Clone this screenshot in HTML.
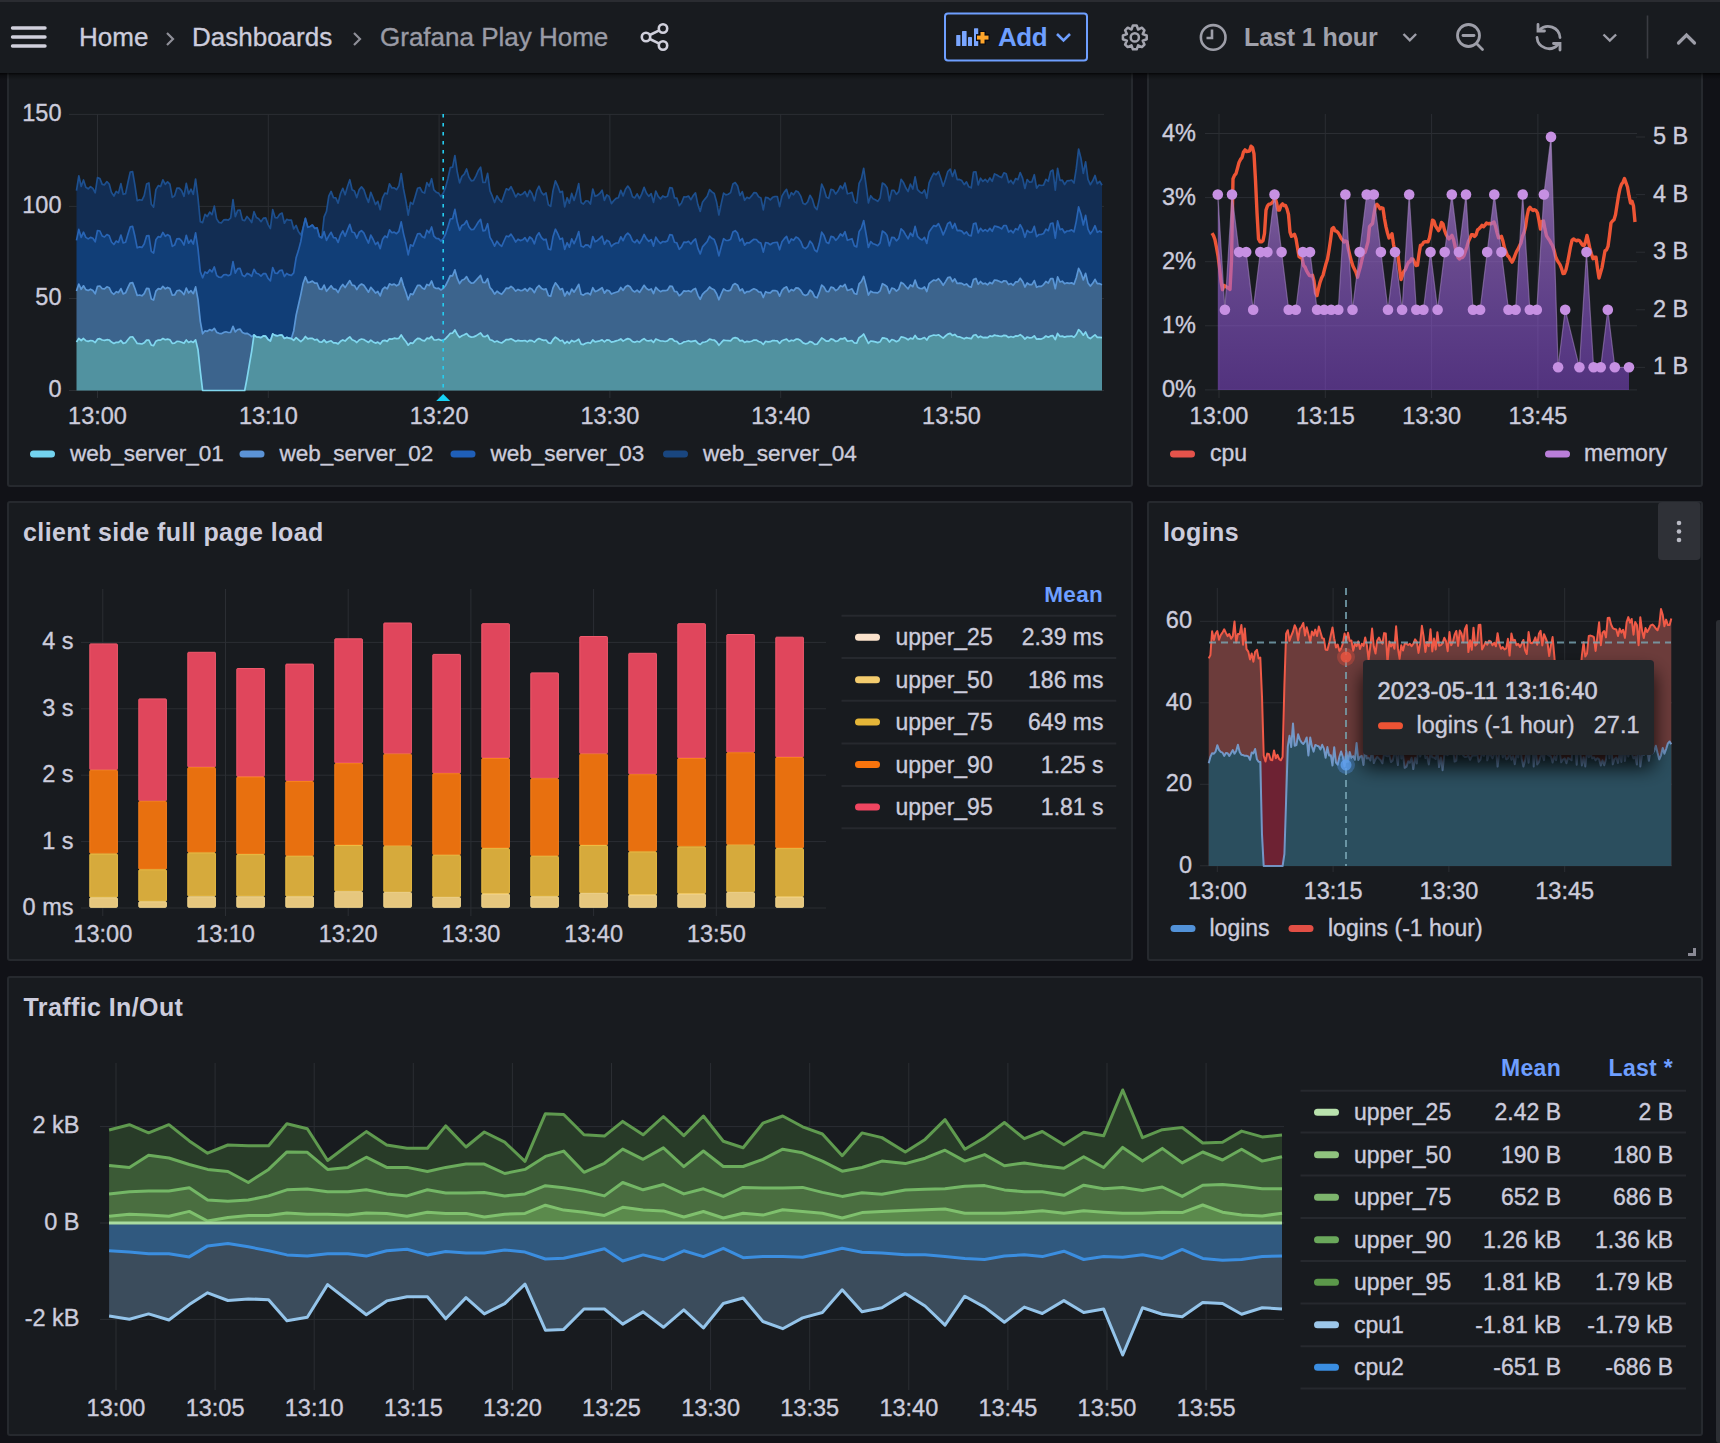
<!DOCTYPE html><html><head><meta charset="utf-8"><style>
html,body{margin:0;padding:0;background:#111217;width:1720px;height:1443px;overflow:hidden}
svg{position:absolute;left:0;top:0;font-family:"Liberation Sans", sans-serif}
</style></head><body>
<svg width="1720" height="1443" viewBox="0 0 1720 1443">
<defs>
<linearGradient id="memg" x1="0" y1="136" x2="0" y2="390" gradientUnits="userSpaceOnUse">
<stop offset="0" stop-color="#c99ceb" stop-opacity="0.75"/><stop offset="0.224" stop-color="#ab7ed7" stop-opacity="0.68"/><stop offset="0.449" stop-color="#a16bd8" stop-opacity="0.6"/><stop offset="0.685" stop-color="#9f62e9" stop-opacity="0.52"/><stop offset="1" stop-color="#9950f2" stop-opacity="0.45"/>
</linearGradient>
<linearGradient id="hsh" x1="0" y1="0" x2="0" y2="1"><stop offset="0" stop-color="#000" stop-opacity="0.75"/><stop offset="0.35" stop-color="#000" stop-opacity="0.3"/><stop offset="1" stop-color="#000" stop-opacity="0"/></linearGradient>
<filter id="shadow" x="-20%" y="-30%" width="140%" height="180%"><feGaussianBlur in="SourceAlpha" stdDeviation="10"/><feOffset dy="12"/><feComponentTransfer><feFuncA type="linear" slope="0.85"/></feComponentTransfer><feMerge><feMergeNode/><feMergeNode in="SourceGraphic"/></feMerge></filter>
</defs>
<rect x="0" y="0" width="1720" height="1443" fill="#111217"/>

<rect x="8" y="40" width="1124" height="446" rx="2" fill="#181b1f" stroke="#26292e" stroke-width="2"/>
<rect x="1148" y="40" width="554" height="446" rx="2" fill="#181b1f" stroke="#26292e" stroke-width="2"/>
<rect x="8" y="502" width="1124" height="458" rx="2" fill="#181b1f" stroke="#26292e" stroke-width="2"/>
<rect x="1148" y="502" width="554" height="458" rx="2" fill="#181b1f" stroke="#26292e" stroke-width="2"/>
<rect x="8" y="977" width="1694" height="458" rx="2" fill="#181b1f" stroke="#26292e" stroke-width="2"/>
<rect x="1716" y="620" width="6" height="823" rx="3" fill="#2c2e33"/>
<line x1="69" y1="114.4" x2="1104" y2="114.4" stroke="#2b2e33" stroke-width="1"/>
<text x="61.5" y="120.9" font-size="23.5" fill="#ccccdc" text-anchor="end" font-weight="normal"  stroke="#ccccdc" stroke-width="0.35">150</text>
<line x1="69" y1="206.4" x2="1104" y2="206.4" stroke="#2b2e33" stroke-width="1"/>
<text x="61.5" y="212.9" font-size="23.5" fill="#ccccdc" text-anchor="end" font-weight="normal"  stroke="#ccccdc" stroke-width="0.35">100</text>
<line x1="69" y1="298.5" x2="1104" y2="298.5" stroke="#2b2e33" stroke-width="1"/>
<text x="61.5" y="305" font-size="23.5" fill="#ccccdc" text-anchor="end" font-weight="normal"  stroke="#ccccdc" stroke-width="0.35">50</text>
<line x1="69" y1="390.5" x2="1104" y2="390.5" stroke="#2b2e33" stroke-width="1"/>
<text x="61.5" y="397" font-size="23.5" fill="#ccccdc" text-anchor="end" font-weight="normal"  stroke="#ccccdc" stroke-width="0.35">0</text>
<line x1="97.5" y1="114" x2="97.5" y2="398" stroke="#2b2e33" stroke-width="1"/>
<text x="97.5" y="423.5" font-size="23.5" fill="#ccccdc" text-anchor="middle" font-weight="normal"  stroke="#ccccdc" stroke-width="0.35">13:00</text>
<line x1="268.3" y1="114" x2="268.3" y2="398" stroke="#2b2e33" stroke-width="1"/>
<text x="268.3" y="423.5" font-size="23.5" fill="#ccccdc" text-anchor="middle" font-weight="normal"  stroke="#ccccdc" stroke-width="0.35">13:10</text>
<line x1="439.1" y1="114" x2="439.1" y2="398" stroke="#2b2e33" stroke-width="1"/>
<text x="439.1" y="423.5" font-size="23.5" fill="#ccccdc" text-anchor="middle" font-weight="normal"  stroke="#ccccdc" stroke-width="0.35">13:20</text>
<line x1="609.9" y1="114" x2="609.9" y2="398" stroke="#2b2e33" stroke-width="1"/>
<text x="609.9" y="423.5" font-size="23.5" fill="#ccccdc" text-anchor="middle" font-weight="normal"  stroke="#ccccdc" stroke-width="0.35">13:30</text>
<line x1="780.7" y1="114" x2="780.7" y2="398" stroke="#2b2e33" stroke-width="1"/>
<text x="780.7" y="423.5" font-size="23.5" fill="#ccccdc" text-anchor="middle" font-weight="normal"  stroke="#ccccdc" stroke-width="0.35">13:40</text>
<line x1="951.5" y1="114" x2="951.5" y2="398" stroke="#2b2e33" stroke-width="1"/>
<text x="951.5" y="423.5" font-size="23.5" fill="#ccccdc" text-anchor="middle" font-weight="normal"  stroke="#ccccdc" stroke-width="0.35">13:50</text>
<polygon points="76.5,190.6 78.8,175.8 81.2,186.5 83.5,180 85.8,187.2 88.2,188.8 90.5,186.7 92.9,188.4 95.2,192.8 97.5,177.6 99.9,178.5 102.2,184.4 104.5,184.8 106.9,181.6 109.2,184 111.5,192.6 113.9,196 116.2,191.4 118.5,193.1 120.9,183.6 123.2,194.3 125.6,193.6 127.9,182.5 130.2,172.1 132.6,171.7 134.9,185.2 137.2,200.6 139.6,199.7 141.9,200.3 144.2,195.7 146.6,184.1 148.9,182.9 151.3,204.3 153.6,207.2 155.9,189.6 158.3,185.6 160.6,186.5 162.9,179.9 165.3,184.4 167.6,181.8 169.9,184.2 172.3,197.4 174.6,195.8 176.9,188.2 179.3,188.1 181.6,190.6 184,196.3 186.3,183.4 188.6,193.8 191,189.2 193.3,194.3 195.6,179 198,198.1 200.3,221.6 202.6,222.6 205,214.4 207.3,216.5 209.7,212.1 212,214.6 214.3,206.1 216.7,219.1 219,222.4 221.3,223 223.7,219.9 226,219.6 228.3,220.1 230.7,217.8 233,199.7 235.3,216.6 237.7,210.4 240,210 242.4,219.9 244.7,220.7 247,216.5 249.4,219.2 251.7,222.5 254,211.7 256.4,217.5 258.7,218.8 261,221.7 263.4,218.1 265.7,217.9 268.1,224.6 270.4,228.5 272.7,209.7 275.1,217.6 277.4,217.9 279.7,214.2 282.1,213.1 284.4,223.2 286.7,219.4 289.1,220.2 291.4,220.2 293.7,229 296.1,225.4 298.4,231.6 300.8,234.9 303.1,228.1 305.4,218.4 307.8,227.3 310.1,226.5 312.4,225.1 314.8,228.4 317.1,227.9 319.4,236.5 321.8,237.9 324.1,216.9 326.5,211.4 328.8,196.2 331.1,191.4 333.5,197.7 335.8,197.9 338.1,203.1 340.5,193.5 342.8,188.3 345.1,194.8 347.5,186.6 349.8,179.7 352.1,189.7 354.5,191.1 356.8,197.6 359.2,189.6 361.5,186.9 363.8,189.6 366.2,196.8 368.5,202.3 370.8,192.3 373.2,198.3 375.5,204.5 377.8,201.3 380.2,209.7 382.5,198.1 384.9,193 387.2,193.9 389.5,183.8 391.9,188 394.2,187.8 396.5,189.7 398.9,185.9 401.2,173.5 403.5,188.9 405.9,201 408.2,215.2 410.5,202.3 412.9,204.3 415.2,196.6 417.6,188.2 419.9,187.5 422.2,191.9 424.6,193.1 426.9,182.6 429.2,186.3 431.6,178.7 433.9,189.8 436.2,192.2 438.6,193.1 440.9,196.6 443.3,193 445.6,187.4 447.9,178.5 450.3,167.6 452.6,167.1 454.9,155.5 457.3,172.3 459.6,182.9 461.9,176.4 464.3,174.1 466.6,169 468.9,177 471.3,180.8 473.6,180.4 476,175.8 478.3,170.5 480.6,167.2 483,182.5 485.3,182.3 487.6,173.4 490,190.9 492.3,196.2 494.6,202.5 497,195.9 499.3,199.7 501.7,202.1 504,195.3 506.3,188.8 508.7,190 511,186.7 513.3,191.3 515.7,196.9 518,193.5 520.3,195.1 522.7,193.9 525,191.6 527.3,196.6 529.7,190.3 532,193.4 534.4,200.8 536.7,190.6 539,186.2 541.4,192.3 543.7,194.8 546,192.8 548.4,204.8 550.7,206.4 553,190.6 555.4,180.9 557.7,185.8 560.1,192.4 562.4,191.4 564.7,206.8 567.1,197.7 569.4,203.2 571.7,193.4 574.1,200.5 576.4,193.1 578.7,183.6 581.1,202.5 583.4,204.1 585.7,200.9 588.1,201 590.4,204.1 592.8,189 595.1,196.2 597.4,195.4 599.8,193.4 602.1,190.2 604.4,200.3 606.8,194.9 609.1,196.4 611.4,203.6 613.8,200.6 616.1,198.4 618.4,197.7 620.8,190.3 623.1,195.9 625.5,189.2 627.8,186.1 630.1,189.3 632.5,196.7 634.8,197.9 637.1,193.8 639.5,198.7 641.8,193.9 644.1,187.4 646.5,193.2 648.8,196.3 651.2,193.7 653.5,202.4 655.8,191 658.2,196.4 660.5,198.9 662.8,196 665.2,197.3 667.5,196.3 669.8,187.7 672.2,188 674.5,197.8 676.8,198.1 679.2,205.7 681.5,203 683.9,196.9 686.2,197 688.5,196 690.9,199.7 693.2,195.6 695.5,192.8 697.9,204.8 700.2,211.5 702.5,202.3 704.9,199.1 707.2,196.3 709.6,189.6 711.9,191.9 714.2,193.5 716.6,202.1 718.9,215 721.2,203.8 723.6,193.1 725.9,194.9 728.2,194.2 730.6,192.6 732.9,183.9 735.2,182.6 737.6,186 739.9,195.5 742.3,191.7 744.6,200.3 746.9,197.3 749.3,198.5 751.6,195.9 753.9,192.7 756.3,192.9 758.6,196.7 760.9,197.9 763.3,209.8 765.6,197.4 768,197.9 770.3,199.8 772.6,197.3 775,196.5 777.3,196.5 779.6,206.6 782,196 784.3,192.1 786.6,189.4 789,198.3 791.3,192.7 793.6,194.8 796,190.9 798.3,192.1 800.7,196.1 803,203.2 805.3,204.4 807.7,201.9 810,195.3 812.3,199.1 814.7,207.2 817,209.6 819.3,199.1 821.7,184.1 824,189 826.4,197.3 828.7,198.3 831,189.3 833.4,190 835.7,194.1 838,191 840.4,185.9 842.7,188.8 845,183 847.4,193.8 849.7,193.2 852,192.3 854.4,201.6 856.7,203.1 859.1,183.4 861.4,178.9 863.7,168.3 866.1,185.4 868.4,203 870.7,195.7 873.1,198.7 875.4,199.8 877.7,201.4 880.1,198.1 882.4,183 884.8,184.5 887.1,187.7 889.4,200.9 891.8,190.3 894.1,190.3 896.4,194.3 898.8,191.7 901.1,179.3 903.4,182.4 905.8,187.8 908.1,191.6 910.4,184 912.8,189 915.1,176.9 917.5,189.6 919.8,191.9 922.1,193.2 924.5,190 926.8,198.2 929.1,182.8 931.5,177.4 933.8,173.1 936.1,174.8 938.5,171.7 940.8,178.2 943.2,186.2 945.5,179.2 947.8,171.5 950.2,169.1 952.5,176.4 954.8,170 957.2,179.6 959.5,179.4 961.8,180.6 964.2,184.6 966.5,181.9 968.8,186.8 971.2,187.8 973.5,172 975.9,171.9 978.2,184.9 980.5,178.2 982.9,181.4 985.2,179.3 987.5,182 989.9,177.9 992.2,181.3 994.5,173.9 996.9,175 999.2,176.4 1001.6,177.6 1003.9,172.8 1006.2,173.8 1008.6,182.6 1010.9,180.4 1013.2,183.9 1015.6,178.6 1017.9,179.7 1020.2,172.5 1022.6,178.1 1024.9,188.5 1027.2,179.5 1029.6,182.2 1031.9,181.8 1034.3,174.7 1036.6,188.2 1038.9,185 1041.3,185.5 1043.6,185.1 1045.9,179.4 1048.3,181.3 1050.6,171.4 1052.9,170.1 1055.3,190.2 1057.6,168.4 1060,180.4 1062.3,180.1 1064.6,184.5 1067,180.9 1069.3,180.7 1071.6,180 1074,183 1076.3,168.4 1078.6,149 1081,158.5 1083.3,173.3 1085.6,161.8 1088,179.4 1090.3,184.7 1092.7,180.8 1095,175.5 1097.3,183.7 1099.7,181.3 1102,185.2 1102,232.5 1099.7,230.9 1097.3,232.3 1095,225.7 1092.7,230.5 1090.3,233.9 1088,229.2 1085.6,215.4 1083.3,225 1081,214.3 1078.6,206.9 1076.3,221.1 1074,231.9 1071.6,229.9 1069.3,230.9 1067,231 1064.6,232.8 1062.3,228.9 1060,229.6 1057.6,220.9 1055.3,238.1 1052.9,223.2 1050.6,223.6 1048.3,230.7 1045.9,229.1 1043.6,233.5 1041.3,234.5 1038.9,234.5 1036.6,236.6 1034.3,226.4 1031.9,232.1 1029.6,232.3 1027.2,230.3 1024.9,237.3 1022.6,229.2 1020.2,224.7 1017.9,229.8 1015.6,228.7 1013.2,232.9 1010.9,230.4 1008.6,232 1006.2,225.5 1003.9,225.5 1001.6,228.9 999.2,227.4 996.9,226.6 994.5,226 992.2,231.3 989.9,228.4 987.5,231.4 985.2,229.6 982.9,231.3 980.5,228.3 978.2,232.9 975.9,223.1 973.5,223.9 971.2,235.9 968.8,235.3 966.5,231.9 964.2,233.9 961.8,231.1 959.5,230.4 957.2,230.6 954.8,223.5 952.5,228.3 950.2,222.1 947.8,223.4 945.5,229.6 943.2,234.9 940.8,228.5 938.5,223.6 936.1,226.4 933.8,225.5 931.5,228.5 929.1,231.9 926.8,243.4 924.5,237.4 922.1,240 919.8,238.7 917.5,236.3 915.1,226.4 912.8,236.3 910.4,233.1 908.1,238.8 905.8,235.1 903.4,231 901.1,228.8 898.8,238.3 896.4,240.8 894.1,237.6 891.8,237.3 889.4,245.8 887.1,235.6 884.8,232.6 882.4,231 880.1,242.9 877.7,245.7 875.4,244.5 873.1,243.8 870.7,241.6 868.4,247.5 866.1,234.2 863.7,220.5 861.4,228.1 859.1,231.6 856.7,246.9 854.4,245.9 852,238.7 849.7,239.5 847.4,240.3 845,231.7 842.7,236 840.4,234 838,238 835.7,240.3 833.4,237.1 831,236.4 828.7,243.4 826.4,242.3 824,235.6 821.7,232.2 819.3,243.8 817,251.8 814.7,250 812.3,243.8 810,241.1 807.7,246.7 805.3,248.6 803,247.1 800.7,241.4 798.3,238.2 796,237.1 793.6,240.3 791.3,239 789,243.2 786.6,236.4 784.3,238.7 782,241.8 779.6,249.8 777.3,242.3 775,242.5 772.6,243 770.3,244.7 768,243 765.6,242.5 763.3,252.1 760.9,243.1 758.6,242.1 756.3,239.5 753.9,239.3 751.6,241 749.3,243 746.9,242.6 744.6,245.1 742.3,238.5 739.9,240.9 737.6,233.2 735.2,230.7 732.9,232 730.6,239.2 728.2,240.5 725.9,240.4 723.6,238.7 721.2,247.1 718.9,255.9 716.6,246 714.2,239.6 711.9,238.3 709.6,236.1 707.2,241.5 704.9,244.1 702.5,246.9 700.2,253.9 697.9,248.4 695.5,238.9 693.2,241 690.9,244 688.5,241.3 686.2,242.4 683.9,242.1 681.5,246.8 679.2,249.3 676.8,242.9 674.5,242.3 672.2,235.1 669.8,234.7 667.5,240.9 665.2,241.9 662.8,241.5 660.5,243.4 658.2,241 655.8,237.1 653.5,246.1 651.2,239.6 648.8,241.3 646.5,238.9 644.1,234.5 641.8,239.5 639.5,243.4 637.1,239.9 634.8,242.6 632.5,240.9 630.1,235.3 627.8,233.1 625.5,235.3 623.1,240.7 620.8,236.8 618.4,242.9 616.1,243 613.8,244.2 611.4,246.5 609.1,241.4 606.8,240.2 604.4,244.3 602.1,236.2 599.8,238.4 597.4,240.4 595.1,241.8 592.8,236.5 590.4,247.7 588.1,245.1 585.7,244.9 583.4,247.1 581.1,246 578.7,231.5 576.4,238.4 574.1,243.7 571.7,238.9 569.4,247.2 567.1,242.7 564.7,249.4 562.4,238.2 560.1,239.3 557.7,233.7 555.4,229.2 553,236.8 550.7,249.8 548.4,249 546,239.2 543.7,239.9 541.4,237.6 539,232.8 536.7,236.1 534.4,243.8 532,238.7 529.7,237 527.3,241.6 525,237.7 522.7,239.8 520.3,240.6 518,239.2 515.7,242 513.3,237.6 511,234.1 508.7,236.8 506.3,236 504,241 501.7,246.3 499.3,244.3 497,241.2 494.6,246.2 492.3,241.3 490,237.4 487.6,223.7 485.3,230.3 483,230.8 480.6,219.4 478.3,222 476,225.9 473.6,229.5 471.3,229.7 468.9,226.7 466.6,220.6 464.3,224.2 461.9,225.4 459.6,230.3 457.3,222.3 454.9,209.4 452.6,218.7 450.3,219 447.9,226.9 445.6,234 443.3,238.6 440.9,241.2 438.6,238.7 436.2,238.4 433.9,236.2 431.6,227 429.2,232.9 426.9,230.2 424.6,237.8 422.2,236.7 419.9,233.5 417.6,233.8 415.2,240.1 412.9,246.2 410.5,244.8 408.2,254.8 405.9,243.3 403.5,233.6 401.2,221.9 398.9,231.3 396.5,233.7 394.2,232.1 391.9,232.7 389.5,229.9 387.2,237.5 384.9,236.1 382.5,239.6 380.2,248.6 377.8,242.1 375.5,244.5 373.2,239.5 370.8,235.1 368.5,243.1 366.2,238.4 363.8,232.8 361.5,230.6 359.2,232.3 356.8,238.1 354.5,232.8 352.1,232 349.8,224.4 347.5,229.9 345.1,236.1 342.8,230.8 340.5,235.1 338.1,242.4 335.8,237.8 333.5,237.6 331.1,232.3 328.8,235.9 326.5,240.4 324.1,231.6 321.8,237.9 319.4,236.5 317.1,227.9 314.8,228.4 312.4,225.1 310.1,226.5 307.8,227.3 305.4,218.4 303.1,228.1 300.8,241.5 298.4,250.6 296.1,257.8 293.7,272.9 291.4,275.4 289.1,274.9 286.7,273.5 284.4,276.5 282.1,270.1 279.7,270.5 277.4,273.4 275.1,273.2 272.7,267.7 270.4,280.8 268.1,278.4 265.7,273.6 263.4,273.7 261,276.2 258.7,274 256.4,273.3 254,269.3 251.7,276.3 249.4,274.4 247,273.4 244.7,276.5 242.4,275.3 240,268.3 237.7,268.7 235.3,273.1 233,261.7 230.7,274.4 228.3,275.7 226,274.5 223.7,274.9 221.3,277.3 219,277.2 216.7,275.5 214.3,266.9 212,271.9 209.7,269.7 207.3,273.2 205,272 202.6,277.8 200.3,271.6 198,248.9 195.6,232.8 193.3,244 191,240 188.6,243.2 186.3,235.3 184,245.1 181.6,240.9 179.3,238.6 176.9,238.9 174.6,245.1 172.3,246.3 169.9,236.3 167.6,234.6 165.3,236.3 162.9,232.4 160.6,237.2 158.3,236.6 155.9,239.8 153.6,253.1 151.3,251.3 148.9,235.7 146.6,235.9 144.2,244 141.9,247.4 139.6,246.9 137.2,247.8 134.9,236.3 132.6,226.4 130.2,226.9 127.9,234.2 125.6,242.3 123.2,243 120.9,235 118.5,242.4 116.2,241.1 113.9,244.5 111.5,242 109.2,235.7 106.9,234.5 104.5,237 102.2,236 99.9,231 97.5,230.5 95.2,241.8 92.9,238.3 90.5,237.4 88.2,238.9 85.8,237.4 83.5,232.2 81.2,237.4 78.8,229.4 76.5,240.4" fill="#122d53"/>
<polygon points="76.5,240.4 78.8,229.4 81.2,237.4 83.5,232.2 85.8,237.4 88.2,238.9 90.5,237.4 92.9,238.3 95.2,241.8 97.5,230.5 99.9,231 102.2,236 104.5,237 106.9,234.5 109.2,235.7 111.5,242 113.9,244.5 116.2,241.1 118.5,242.4 120.9,235 123.2,243 125.6,242.3 127.9,234.2 130.2,226.9 132.6,226.4 134.9,236.3 137.2,247.8 139.6,246.9 141.9,247.4 144.2,244 146.6,235.9 148.9,235.7 151.3,251.3 153.6,253.1 155.9,239.8 158.3,236.6 160.6,237.2 162.9,232.4 165.3,236.3 167.6,234.6 169.9,236.3 172.3,246.3 174.6,245.1 176.9,238.9 179.3,238.6 181.6,240.9 184,245.1 186.3,235.3 188.6,243.2 191,240 193.3,244 195.6,232.8 198,248.9 200.3,271.6 202.6,277.8 205,272 207.3,273.2 209.7,269.7 212,271.9 214.3,266.9 216.7,275.5 219,277.2 221.3,277.3 223.7,274.9 226,274.5 228.3,275.7 230.7,274.4 233,261.7 235.3,273.1 237.7,268.7 240,268.3 242.4,275.3 244.7,276.5 247,273.4 249.4,274.4 251.7,276.3 254,269.3 256.4,273.3 258.7,274 261,276.2 263.4,273.7 265.7,273.6 268.1,278.4 270.4,280.8 272.7,267.7 275.1,273.2 277.4,273.4 279.7,270.5 282.1,270.1 284.4,276.5 286.7,273.5 289.1,274.9 291.4,275.4 293.7,272.9 296.1,257.8 298.4,250.6 300.8,241.5 303.1,228.1 305.4,218.4 307.8,227.3 310.1,226.5 312.4,225.1 314.8,228.4 317.1,227.9 319.4,236.5 321.8,237.9 324.1,231.6 326.5,240.4 328.8,235.9 331.1,232.3 333.5,237.6 335.8,237.8 338.1,242.4 340.5,235.1 342.8,230.8 345.1,236.1 347.5,229.9 349.8,224.4 352.1,232 354.5,232.8 356.8,238.1 359.2,232.3 361.5,230.6 363.8,232.8 366.2,238.4 368.5,243.1 370.8,235.1 373.2,239.5 375.5,244.5 377.8,242.1 380.2,248.6 382.5,239.6 384.9,236.1 387.2,237.5 389.5,229.9 391.9,232.7 394.2,232.1 396.5,233.7 398.9,231.3 401.2,221.9 403.5,233.6 405.9,243.3 408.2,254.8 410.5,244.8 412.9,246.2 415.2,240.1 417.6,233.8 419.9,233.5 422.2,236.7 424.6,237.8 426.9,230.2 429.2,232.9 431.6,227 433.9,236.2 436.2,238.4 438.6,238.7 440.9,241.2 443.3,238.6 445.6,234 447.9,226.9 450.3,219 452.6,218.7 454.9,209.4 457.3,222.3 459.6,230.3 461.9,225.4 464.3,224.2 466.6,220.6 468.9,226.7 471.3,229.7 473.6,229.5 476,225.9 478.3,222 480.6,219.4 483,230.8 485.3,230.3 487.6,223.7 490,237.4 492.3,241.3 494.6,246.2 497,241.2 499.3,244.3 501.7,246.3 504,241 506.3,236 508.7,236.8 511,234.1 513.3,237.6 515.7,242 518,239.2 520.3,240.6 522.7,239.8 525,237.7 527.3,241.6 529.7,237 532,238.7 534.4,243.8 536.7,236.1 539,232.8 541.4,237.6 543.7,239.9 546,239.2 548.4,249 550.7,249.8 553,236.8 555.4,229.2 557.7,233.7 560.1,239.3 562.4,238.2 564.7,249.4 567.1,242.7 569.4,247.2 571.7,238.9 574.1,243.7 576.4,238.4 578.7,231.5 581.1,246 583.4,247.1 585.7,244.9 588.1,245.1 590.4,247.7 592.8,236.5 595.1,241.8 597.4,240.4 599.8,238.4 602.1,236.2 604.4,244.3 606.8,240.2 609.1,241.4 611.4,246.5 613.8,244.2 616.1,243 618.4,242.9 620.8,236.8 623.1,240.7 625.5,235.3 627.8,233.1 630.1,235.3 632.5,240.9 634.8,242.6 637.1,239.9 639.5,243.4 641.8,239.5 644.1,234.5 646.5,238.9 648.8,241.3 651.2,239.6 653.5,246.1 655.8,237.1 658.2,241 660.5,243.4 662.8,241.5 665.2,241.9 667.5,240.9 669.8,234.7 672.2,235.1 674.5,242.3 676.8,242.9 679.2,249.3 681.5,246.8 683.9,242.1 686.2,242.4 688.5,241.3 690.9,244 693.2,241 695.5,238.9 697.9,248.4 700.2,253.9 702.5,246.9 704.9,244.1 707.2,241.5 709.6,236.1 711.9,238.3 714.2,239.6 716.6,246 718.9,255.9 721.2,247.1 723.6,238.7 725.9,240.4 728.2,240.5 730.6,239.2 732.9,232 735.2,230.7 737.6,233.2 739.9,240.9 742.3,238.5 744.6,245.1 746.9,242.6 749.3,243 751.6,241 753.9,239.3 756.3,239.5 758.6,242.1 760.9,243.1 763.3,252.1 765.6,242.5 768,243 770.3,244.7 772.6,243 775,242.5 777.3,242.3 779.6,249.8 782,241.8 784.3,238.7 786.6,236.4 789,243.2 791.3,239 793.6,240.3 796,237.1 798.3,238.2 800.7,241.4 803,247.1 805.3,248.6 807.7,246.7 810,241.1 812.3,243.8 814.7,250 817,251.8 819.3,243.8 821.7,232.2 824,235.6 826.4,242.3 828.7,243.4 831,236.4 833.4,237.1 835.7,240.3 838,238 840.4,234 842.7,236 845,231.7 847.4,240.3 849.7,239.5 852,238.7 854.4,245.9 856.7,246.9 859.1,231.6 861.4,228.1 863.7,220.5 866.1,234.2 868.4,247.5 870.7,241.6 873.1,243.8 875.4,244.5 877.7,245.7 880.1,242.9 882.4,231 884.8,232.6 887.1,235.6 889.4,245.8 891.8,237.3 894.1,237.6 896.4,240.8 898.8,238.3 901.1,228.8 903.4,231 905.8,235.1 908.1,238.8 910.4,233.1 912.8,236.3 915.1,226.4 917.5,236.3 919.8,238.7 922.1,240 924.5,237.4 926.8,243.4 929.1,231.9 931.5,228.5 933.8,225.5 936.1,226.4 938.5,223.6 940.8,228.5 943.2,234.9 945.5,229.6 947.8,223.4 950.2,222.1 952.5,228.3 954.8,223.5 957.2,230.6 959.5,230.4 961.8,231.1 964.2,233.9 966.5,231.9 968.8,235.3 971.2,235.9 973.5,223.9 975.9,223.1 978.2,232.9 980.5,228.3 982.9,231.3 985.2,229.6 987.5,231.4 989.9,228.4 992.2,231.3 994.5,226 996.9,226.6 999.2,227.4 1001.6,228.9 1003.9,225.5 1006.2,225.5 1008.6,232 1010.9,230.4 1013.2,232.9 1015.6,228.7 1017.9,229.8 1020.2,224.7 1022.6,229.2 1024.9,237.3 1027.2,230.3 1029.6,232.3 1031.9,232.1 1034.3,226.4 1036.6,236.6 1038.9,234.5 1041.3,234.5 1043.6,233.5 1045.9,229.1 1048.3,230.7 1050.6,223.6 1052.9,223.2 1055.3,238.1 1057.6,220.9 1060,229.6 1062.3,228.9 1064.6,232.8 1067,231 1069.3,230.9 1071.6,229.9 1074,231.9 1076.3,221.1 1078.6,206.9 1081,214.3 1083.3,225 1085.6,215.4 1088,229.2 1090.3,233.9 1092.7,230.5 1095,225.7 1097.3,232.3 1099.7,230.9 1102,232.5 1102,284.7 1099.7,283.7 1097.3,283.7 1095,279.3 1092.7,283.3 1090.3,286.1 1088,282.9 1085.6,273.4 1083.3,279.9 1081,273 1078.6,268.4 1076.3,277.8 1074,284.3 1071.6,282.8 1069.3,283.3 1067,282.8 1064.6,283.7 1062.3,281.2 1060,282 1057.6,276.8 1055.3,288.7 1052.9,278.6 1050.6,278.6 1048.3,283.1 1045.9,281.5 1043.6,284.6 1041.3,286.4 1038.9,286.3 1036.6,287.3 1034.3,280.6 1031.9,284.6 1029.6,284.7 1027.2,283 1024.9,287 1022.6,281.4 1020.2,278.3 1017.9,281.9 1015.6,281.9 1013.2,285.3 1010.9,283.5 1008.6,284.6 1006.2,281 1003.9,280.8 1001.6,282.5 999.2,281.2 996.9,280.4 994.5,280 992.2,283.7 989.9,282.4 987.5,284.8 985.2,283.2 982.9,283.9 980.5,281.5 978.2,284.3 975.9,278.4 973.5,279.6 971.2,287.2 968.8,286.4 966.5,283.9 964.2,285 961.8,283.4 959.5,283.2 957.2,283.5 954.8,278.8 952.5,281.7 950.2,277.2 947.8,277.7 945.5,281.6 943.2,285.3 940.8,281.5 938.5,278.7 936.1,280.7 933.8,280 931.5,281.6 929.1,283.7 926.8,291.5 924.5,287 922.1,288.7 919.8,288.5 917.5,287 915.1,280.1 912.8,286.7 910.4,284.8 908.1,288.8 905.8,286.5 903.4,283.8 901.1,282.4 898.8,289.1 896.4,291.2 894.1,288.7 891.8,288 889.4,293.5 887.1,286.7 884.8,285 882.4,283.7 880.1,290.9 877.7,292.8 875.4,292.6 873.1,292.5 870.7,291.2 868.4,295.1 866.1,285.8 863.7,276.4 861.4,281.5 859.1,283.9 856.7,294.2 854.4,293.5 852,288.8 849.7,289.7 847.4,290.5 845,284.4 842.7,286.7 840.4,285.7 838,289.1 835.7,290.6 833.4,287.9 831,287 828.7,291.7 826.4,291.4 824,287.2 821.7,285 819.3,292.4 817,297.8 814.7,296.8 812.3,292 810,290.1 807.7,294.5 805.3,295.5 803,294.3 800.7,290.4 798.3,288.1 796,287.9 793.6,290.7 791.3,289.5 789,292 786.6,286.8 784.3,287.9 782,290.4 779.6,296.2 777.3,291.2 775,290.5 772.6,290.6 770.3,292.9 768,292.7 765.6,291.7 763.3,297.5 760.9,292.1 758.6,291.9 756.3,289.7 753.9,288.8 751.6,290 749.3,291.6 746.9,291.5 744.6,293.3 742.3,289 739.9,290.7 737.6,285.2 735.2,283.6 732.9,285 730.6,290.1 728.2,290.9 725.9,290.5 723.6,288.9 721.2,294 718.9,299.8 716.6,293.8 714.2,289.8 711.9,288.8 709.6,287 707.2,290.1 704.9,291.9 702.5,294.3 700.2,299.3 697.9,295.3 695.5,288.5 693.2,289.5 690.9,291.8 688.5,290.7 686.2,291.3 683.9,290.8 681.5,294 679.2,295.7 676.8,291.6 674.5,291.3 672.2,286.4 669.8,286.2 667.5,290.1 665.2,290.7 662.8,290.5 660.5,291.7 658.2,289.9 655.8,287.4 653.5,293.6 651.2,288.9 648.8,290 646.5,288.6 644.1,285.3 641.8,289 639.5,292.4 637.1,290.1 634.8,291.9 632.5,290.6 630.1,286.8 627.8,285.4 625.5,286.7 623.1,290.4 620.8,287.5 618.4,291.5 616.1,292.2 613.8,293 611.4,294.1 609.1,290.7 606.8,290.1 604.4,293.1 602.1,287.7 599.8,289.2 597.4,290.8 595.1,291.6 592.8,287.7 590.4,294.8 588.1,293.1 585.7,293.5 583.4,295.1 581.1,294.3 578.7,284.3 576.4,288.5 574.1,292.1 571.7,289.1 569.4,294.7 567.1,291.6 564.7,296 562.4,288.6 560.1,289.6 557.7,285.7 555.4,282.8 553,287.9 550.7,296.3 548.4,295.6 546,288.9 543.7,289.6 541.4,288.4 539,285.5 536.7,287.8 534.4,292.7 532,289.2 529.7,288.1 527.3,291.1 525,288.6 522.7,290.3 520.3,290.6 518,289.4 515.7,291.2 513.3,288.2 511,286.3 508.7,288.4 506.3,288.1 504,291.4 501.7,294.3 499.3,293 497,291.2 494.6,294.1 492.3,290.2 490,287.7 487.6,278.7 485.3,282.6 483,282.5 480.6,275.4 478.3,277.8 476,280.4 473.6,282.8 471.3,283.2 468.9,281 466.6,276.6 464.3,279.3 461.9,280.3 459.6,283.6 457.3,278.4 454.9,269.9 452.6,275.8 450.3,275.6 447.9,280.9 445.6,285.5 443.3,288.4 440.9,290 438.6,288.2 436.2,288.5 433.9,287.3 431.6,281 429.2,285.6 426.9,284.4 424.6,289.2 422.2,287.9 419.9,285.3 417.6,285.4 415.2,289.9 412.9,294.6 410.5,293.8 408.2,299.8 405.9,292.2 403.5,285.8 401.2,277.8 398.9,284.4 396.5,285.8 394.2,284.1 391.9,284.9 389.5,283.8 387.2,288.8 384.9,287.1 382.5,289.4 380.2,295.9 377.8,291.5 375.5,293.1 373.2,290.1 370.8,287.3 368.5,292.2 366.2,288.8 363.8,285.3 361.5,284 359.2,285.6 356.8,289.6 354.5,285.6 352.1,285.2 349.8,280.6 347.5,283.9 345.1,287.6 342.8,284.4 340.5,287.6 338.1,292.5 335.8,289.3 333.5,288.9 331.1,285.7 328.8,288.5 326.5,291.3 324.1,285.1 321.8,289.5 319.4,288.9 317.1,283.2 314.8,283.1 312.4,281.1 310.1,282.1 307.8,282.6 305.4,276.9 303.1,283.2 300.8,294.6 298.4,305.3 296.1,315.4 293.7,331 291.4,338.6 289.1,338.2 286.7,337.4 284.4,338.5 282.1,335.2 279.7,335.2 277.4,335.8 275.1,335.4 272.7,333.9 270.4,341 268.1,339.6 265.7,336.2 263.4,335.9 261,337.6 258.7,337.2 256.4,336.9 254,334.8 251.7,336.6 249.4,334.7 247,333.3 244.7,333.6 242.4,332.5 240,329.1 237.7,329.5 235.3,331.9 233,326.4 230.7,332.3 228.3,332.5 226,331.8 223.7,332.4 221.3,333.7 219,333.3 216.7,332.4 214.3,328.3 212,330.7 209.7,329.6 207.3,331.3 205,330.8 202.6,333.8 200.3,321.3 198,299.6 195.6,286.9 193.3,293.7 191,290.7 188.6,292.9 186.3,288 184,294.7 181.6,291.7 179.3,290.2 176.9,290.8 174.6,295 172.3,295.2 169.9,288.5 167.6,287.4 165.3,288.8 162.9,286.4 160.6,289.2 158.3,288.7 155.9,291.1 153.6,300 151.3,298.9 148.9,288.6 146.6,288.4 144.2,293.7 141.9,295.8 139.6,295 137.2,295.5 134.9,288.6 132.6,282.6 130.2,283 127.9,287.6 125.6,292.8 123.2,293.9 120.9,288.6 118.5,292.6 116.2,291.7 113.9,294.3 111.5,292.4 109.2,287.7 106.9,286.8 104.5,288.8 102.2,288.7 99.9,286 97.5,286.3 95.2,293.8 92.9,290.6 90.5,289.2 88.2,290.5 85.8,289.6 83.5,285.8 81.2,289.3 78.8,284 76.5,290.9" fill="#113e77"/>
<polygon points="76.5,290.9 78.8,284 81.2,289.3 83.5,285.8 85.8,289.6 88.2,290.5 90.5,289.2 92.9,290.6 95.2,293.8 97.5,286.3 99.9,286 102.2,288.7 104.5,288.8 106.9,286.8 109.2,287.7 111.5,292.4 113.9,294.3 116.2,291.7 118.5,292.6 120.9,288.6 123.2,293.9 125.6,292.8 127.9,287.6 130.2,283 132.6,282.6 134.9,288.6 137.2,295.5 139.6,295 141.9,295.8 144.2,293.7 146.6,288.4 148.9,288.6 151.3,298.9 153.6,300 155.9,291.1 158.3,288.7 160.6,289.2 162.9,286.4 165.3,288.8 167.6,287.4 169.9,288.5 172.3,295.2 174.6,295 176.9,290.8 179.3,290.2 181.6,291.7 184,294.7 186.3,288 188.6,292.9 191,290.7 193.3,293.7 195.6,286.9 198,299.6 200.3,321.3 202.6,333.8 205,330.8 207.3,331.3 209.7,329.6 212,330.7 214.3,328.3 216.7,332.4 219,333.3 221.3,333.7 223.7,332.4 226,331.8 228.3,332.5 230.7,332.3 233,326.4 235.3,331.9 237.7,329.5 240,329.1 242.4,332.5 244.7,333.6 247,333.3 249.4,334.7 251.7,336.6 254,334.8 256.4,336.9 258.7,337.2 261,337.6 263.4,335.9 265.7,336.2 268.1,339.6 270.4,341 272.7,333.9 275.1,335.4 277.4,335.8 279.7,335.2 282.1,335.2 284.4,338.5 286.7,337.4 289.1,338.2 291.4,338.6 293.7,331 296.1,315.4 298.4,305.3 300.8,294.6 303.1,283.2 305.4,276.9 307.8,282.6 310.1,282.1 312.4,281.1 314.8,283.1 317.1,283.2 319.4,288.9 321.8,289.5 324.1,285.1 326.5,291.3 328.8,288.5 331.1,285.7 333.5,288.9 335.8,289.3 338.1,292.5 340.5,287.6 342.8,284.4 345.1,287.6 347.5,283.9 349.8,280.6 352.1,285.2 354.5,285.6 356.8,289.6 359.2,285.6 361.5,284 363.8,285.3 366.2,288.8 368.5,292.2 370.8,287.3 373.2,290.1 375.5,293.1 377.8,291.5 380.2,295.9 382.5,289.4 384.9,287.1 387.2,288.8 389.5,283.8 391.9,284.9 394.2,284.1 396.5,285.8 398.9,284.4 401.2,277.8 403.5,285.8 405.9,292.2 408.2,299.8 410.5,293.8 412.9,294.6 415.2,289.9 417.6,285.4 419.9,285.3 422.2,287.9 424.6,289.2 426.9,284.4 429.2,285.6 431.6,281 433.9,287.3 436.2,288.5 438.6,288.2 440.9,290 443.3,288.4 445.6,285.5 447.9,280.9 450.3,275.6 452.6,275.8 454.9,269.9 457.3,278.4 459.6,283.6 461.9,280.3 464.3,279.3 466.6,276.6 468.9,281 471.3,283.2 473.6,282.8 476,280.4 478.3,277.8 480.6,275.4 483,282.5 485.3,282.6 487.6,278.7 490,287.7 492.3,290.2 494.6,294.1 497,291.2 499.3,293 501.7,294.3 504,291.4 506.3,288.1 508.7,288.4 511,286.3 513.3,288.2 515.7,291.2 518,289.4 520.3,290.6 522.7,290.3 525,288.6 527.3,291.1 529.7,288.1 532,289.2 534.4,292.7 536.7,287.8 539,285.5 541.4,288.4 543.7,289.6 546,288.9 548.4,295.6 550.7,296.3 553,287.9 555.4,282.8 557.7,285.7 560.1,289.6 562.4,288.6 564.7,296 567.1,291.6 569.4,294.7 571.7,289.1 574.1,292.1 576.4,288.5 578.7,284.3 581.1,294.3 583.4,295.1 585.7,293.5 588.1,293.1 590.4,294.8 592.8,287.7 595.1,291.6 597.4,290.8 599.8,289.2 602.1,287.7 604.4,293.1 606.8,290.1 609.1,290.7 611.4,294.1 613.8,293 616.1,292.2 618.4,291.5 620.8,287.5 623.1,290.4 625.5,286.7 627.8,285.4 630.1,286.8 632.5,290.6 634.8,291.9 637.1,290.1 639.5,292.4 641.8,289 644.1,285.3 646.5,288.6 648.8,290 651.2,288.9 653.5,293.6 655.8,287.4 658.2,289.9 660.5,291.7 662.8,290.5 665.2,290.7 667.5,290.1 669.8,286.2 672.2,286.4 674.5,291.3 676.8,291.6 679.2,295.7 681.5,294 683.9,290.8 686.2,291.3 688.5,290.7 690.9,291.8 693.2,289.5 695.5,288.5 697.9,295.3 700.2,299.3 702.5,294.3 704.9,291.9 707.2,290.1 709.6,287 711.9,288.8 714.2,289.8 716.6,293.8 718.9,299.8 721.2,294 723.6,288.9 725.9,290.5 728.2,290.9 730.6,290.1 732.9,285 735.2,283.6 737.6,285.2 739.9,290.7 742.3,289 744.6,293.3 746.9,291.5 749.3,291.6 751.6,290 753.9,288.8 756.3,289.7 758.6,291.9 760.9,292.1 763.3,297.5 765.6,291.7 768,292.7 770.3,292.9 772.6,290.6 775,290.5 777.3,291.2 779.6,296.2 782,290.4 784.3,287.9 786.6,286.8 789,292 791.3,289.5 793.6,290.7 796,287.9 798.3,288.1 800.7,290.4 803,294.3 805.3,295.5 807.7,294.5 810,290.1 812.3,292 814.7,296.8 817,297.8 819.3,292.4 821.7,285 824,287.2 826.4,291.4 828.7,291.7 831,287 833.4,287.9 835.7,290.6 838,289.1 840.4,285.7 842.7,286.7 845,284.4 847.4,290.5 849.7,289.7 852,288.8 854.4,293.5 856.7,294.2 859.1,283.9 861.4,281.5 863.7,276.4 866.1,285.8 868.4,295.1 870.7,291.2 873.1,292.5 875.4,292.6 877.7,292.8 880.1,290.9 882.4,283.7 884.8,285 887.1,286.7 889.4,293.5 891.8,288 894.1,288.7 896.4,291.2 898.8,289.1 901.1,282.4 903.4,283.8 905.8,286.5 908.1,288.8 910.4,284.8 912.8,286.7 915.1,280.1 917.5,287 919.8,288.5 922.1,288.7 924.5,287 926.8,291.5 929.1,283.7 931.5,281.6 933.8,280 936.1,280.7 938.5,278.7 940.8,281.5 943.2,285.3 945.5,281.6 947.8,277.7 950.2,277.2 952.5,281.7 954.8,278.8 957.2,283.5 959.5,283.2 961.8,283.4 964.2,285 966.5,283.9 968.8,286.4 971.2,287.2 973.5,279.6 975.9,278.4 978.2,284.3 980.5,281.5 982.9,283.9 985.2,283.2 987.5,284.8 989.9,282.4 992.2,283.7 994.5,280 996.9,280.4 999.2,281.2 1001.6,282.5 1003.9,280.8 1006.2,281 1008.6,284.6 1010.9,283.5 1013.2,285.3 1015.6,281.9 1017.9,281.9 1020.2,278.3 1022.6,281.4 1024.9,287 1027.2,283 1029.6,284.7 1031.9,284.6 1034.3,280.6 1036.6,287.3 1038.9,286.3 1041.3,286.4 1043.6,284.6 1045.9,281.5 1048.3,283.1 1050.6,278.6 1052.9,278.6 1055.3,288.7 1057.6,276.8 1060,282 1062.3,281.2 1064.6,283.7 1067,282.8 1069.3,283.3 1071.6,282.8 1074,284.3 1076.3,277.8 1078.6,268.4 1081,273 1083.3,279.9 1085.6,273.4 1088,282.9 1090.3,286.1 1092.7,283.3 1095,279.3 1097.3,283.7 1099.7,283.7 1102,284.7 1102,337.6 1099.7,337.4 1097.3,337.4 1095,334.8 1092.7,336.6 1090.3,338.6 1088,337.2 1085.6,332 1083.3,335.2 1081,331.9 1078.6,329.7 1076.3,334.5 1074,337.3 1071.6,336 1069.3,336.4 1067,336.4 1064.6,337.1 1062.3,336.1 1060,336.5 1057.6,333.4 1055.3,339.6 1052.9,335.7 1050.6,335.9 1048.3,337.2 1045.9,336 1043.6,338 1041.3,339.1 1038.9,338.9 1036.6,339.2 1034.3,335.8 1031.9,337.7 1029.6,337.9 1027.2,337 1024.9,339.1 1022.6,336.4 1020.2,334.6 1017.9,336.1 1015.6,335.9 1013.2,337.3 1010.9,336.5 1008.6,337.5 1006.2,335.7 1003.9,335.3 1001.6,336.4 999.2,336.2 996.9,335.7 994.5,335.1 992.2,336.5 989.9,335.9 987.5,337.7 985.2,337.3 982.9,337.6 980.5,336.2 978.2,337.5 975.9,334.7 973.5,335.3 971.2,338.7 968.8,338.2 966.5,337.6 964.2,338.8 961.8,337.7 959.5,336.8 957.2,336.7 954.8,334.4 952.5,335.5 950.2,333.4 947.8,334.1 945.5,336 943.2,338.1 940.8,336.4 938.5,334.8 936.1,335.5 933.8,335 931.5,335.7 929.1,336.6 926.8,340 924.5,337.5 922.1,338.6 919.8,339.2 917.5,338.7 915.1,335.4 912.8,339 910.4,338.1 908.1,339.8 905.8,338.3 903.4,337.3 901.1,336.9 898.8,340.5 896.4,341.7 894.1,340.2 891.8,339.5 889.4,342.1 887.1,338.9 884.8,338.2 882.4,337.8 880.1,341.8 877.7,342.6 875.4,341.9 873.1,341.4 870.7,341 868.4,343.4 866.1,338.9 863.7,334 861.4,336.3 859.1,337.7 856.7,343.2 854.4,343 852,340.5 849.7,340.9 847.4,341.2 845,337.9 842.7,338.9 840.4,338.7 838,340.9 835.7,341.5 833.4,339.6 831,338.9 828.7,341.1 826.4,341.2 824,339.4 821.7,337.9 819.3,341.2 817,344.2 814.7,344.3 812.3,342.4 810,341.5 807.7,343.4 805.3,343.8 803,342.9 800.7,340.6 798.3,339.2 796,339.2 793.6,340.8 791.3,340.2 789,341.5 786.6,339.1 784.3,339.7 782,340.7 779.6,343.3 777.3,340.8 775,340.7 772.6,340.5 770.3,341.7 768,341.9 765.6,341.3 763.3,344.5 760.9,342.2 758.6,341.5 756.3,340.1 753.9,340.1 751.6,341.2 749.3,341.8 746.9,341.3 744.6,342.4 742.3,340.4 739.9,340.9 737.6,338.2 735.2,337.6 732.9,338.3 730.6,340.9 728.2,340.7 725.9,340.5 723.6,340.2 721.2,342.7 718.9,345.3 716.6,342 714.2,340 711.9,339.8 709.6,339.1 707.2,341.2 704.9,342 702.5,342.3 700.2,344.5 697.9,343.2 695.5,340.6 693.2,341.1 690.9,341.6 688.5,340.7 686.2,341.5 683.9,341.9 681.5,343.5 679.2,343.9 676.8,341.4 674.5,341.1 672.2,338.8 669.8,338.8 667.5,340.9 665.2,341.5 662.8,341 660.5,341 658.2,340 655.8,339 653.5,342.5 651.2,340.2 648.8,340.9 646.5,340.6 644.1,338.7 641.8,340.1 639.5,342 637.1,341.2 634.8,342.3 632.5,341.6 630.1,339.3 627.8,338.6 625.5,339.6 623.1,341.1 620.8,338.9 618.4,340.3 616.1,340.9 613.8,341.6 611.4,342.1 609.1,340.1 606.8,339.8 604.4,341.8 602.1,339.9 599.8,340.8 597.4,341.3 595.1,341.8 592.8,340 590.4,343.3 588.1,342.5 585.7,343.2 583.4,344.6 581.1,344.2 578.7,339.2 576.4,340.7 574.1,341.8 571.7,340.4 569.4,343.3 567.1,341.5 564.7,343.6 562.4,340.3 560.1,341 557.7,338.7 555.4,337.1 553,339.7 550.7,343.5 548.4,342.9 546,340 543.7,340.4 541.4,339.6 539,338.5 536.7,339.8 534.4,342.1 532,340.6 529.7,340.3 527.3,341.8 525,340.5 522.7,340.9 520.3,340.8 518,340.3 515.7,341.4 513.3,340 511,338.8 508.7,339.6 506.3,339.5 504,341.3 501.7,343 499.3,342.3 497,341 494.6,342 492.3,340.4 490,339.8 487.6,335.1 485.3,336.6 483,336.3 480.6,332.9 478.3,334.4 476,335.9 473.6,336.9 471.3,337.1 468.9,336.1 466.6,333.5 464.3,334.8 461.9,335.7 459.6,337.4 457.3,334.4 454.9,330 452.6,333.1 450.3,333.3 447.9,336.2 445.6,338.7 443.3,340 440.9,340.3 438.6,339.3 436.2,340 433.9,339.8 431.6,336.5 429.2,338.6 426.9,338.2 424.6,340.9 422.2,340.4 419.9,338.7 417.6,338.3 415.2,340.4 412.9,343.3 410.5,342.8 408.2,345.2 405.9,341.5 403.5,338.6 401.2,334.9 398.9,338.3 396.5,338.7 394.2,338.2 391.9,339.1 389.5,338.8 387.2,341.4 384.9,340.4 382.5,340.9 380.2,344 377.8,342.1 375.5,343.1 373.2,341.9 370.8,340.1 368.5,342.4 366.2,341.1 363.8,339.5 361.5,339 359.2,340 356.8,342.5 354.5,340.7 352.1,339.8 349.8,336.9 347.5,338.7 345.1,341.1 342.8,339.9 340.5,341.3 338.1,343.9 335.8,342.9 333.5,342.8 331.1,340.8 328.8,341.5 326.5,342.6 324.1,339.9 321.8,342.2 319.4,341.8 317.1,339.4 314.8,340 312.4,338.4 310.1,338.3 307.8,338.9 305.4,336.5 303.1,339.7 300.8,341.6 298.4,339.6 296.1,337.7 293.7,340.3 291.4,338.6 289.1,338.2 286.7,337.4 284.4,338.5 282.1,335.2 279.7,335.2 277.4,335.8 275.1,335.4 272.7,333.9 270.4,341 268.1,339.6 265.7,336.2 263.4,335.9 261,337.6 258.7,337.2 256.4,336.9 254,334.8 251.7,351.1 249.4,364.4 247,378.5 244.7,390.5 242.4,390.5 240,390.5 237.7,390.5 235.3,390.5 233,390.5 230.7,390.5 228.3,390.5 226,390.5 223.7,390.5 221.3,390.5 219,390.5 216.7,390.5 214.3,390.5 212,390.5 209.7,390.5 207.3,390.5 205,390.5 202.6,390.5 200.3,371.2 198,349.8 195.6,339.9 193.3,342.4 191,341.2 188.6,342.5 186.3,340 184,343.3 181.6,342.2 179.3,341.5 176.9,341.4 174.6,343.2 172.3,343.4 169.9,339.8 167.6,339.1 165.3,339.7 162.9,338.5 160.6,340.1 158.3,340 155.9,341.2 153.6,345.6 151.3,345.1 148.9,340.1 146.6,340.2 144.2,342.8 141.9,344 139.6,343.6 137.2,343.5 134.9,339.9 132.6,336.8 130.2,337 127.9,339.8 125.6,342.7 123.2,343.4 120.9,340.5 118.5,342.4 116.2,342.3 113.9,343.4 111.5,342.1 109.2,340 106.9,339.7 104.5,340.4 102.2,340 99.9,338.7 97.5,339.2 95.2,342.6 92.9,340.9 90.5,340.5 88.2,341.4 85.8,340.7 83.5,338.5 81.2,340.5 78.8,338.5 76.5,342" fill="#3c648d"/>
<polygon points="76.5,342 78.8,338.5 81.2,340.5 83.5,338.5 85.8,340.7 88.2,341.4 90.5,340.5 92.9,340.9 95.2,342.6 97.5,339.2 99.9,338.7 102.2,340 104.5,340.4 106.9,339.7 109.2,340 111.5,342.1 113.9,343.4 116.2,342.3 118.5,342.4 120.9,340.5 123.2,343.4 125.6,342.7 127.9,339.8 130.2,337 132.6,336.8 134.9,339.9 137.2,343.5 139.6,343.6 141.9,344 144.2,342.8 146.6,340.2 148.9,340.1 151.3,345.1 153.6,345.6 155.9,341.2 158.3,340 160.6,340.1 162.9,338.5 165.3,339.7 167.6,339.1 169.9,339.8 172.3,343.4 174.6,343.2 176.9,341.4 179.3,341.5 181.6,342.2 184,343.3 186.3,340 188.6,342.5 191,341.2 193.3,342.4 195.6,339.9 198,349.8 200.3,371.2 202.6,390.5 205,390.5 207.3,390.5 209.7,390.5 212,390.5 214.3,390.5 216.7,390.5 219,390.5 221.3,390.5 223.7,390.5 226,390.5 228.3,390.5 230.7,390.5 233,390.5 235.3,390.5 237.7,390.5 240,390.5 242.4,390.5 244.7,390.5 247,378.5 249.4,364.4 251.7,351.1 254,334.8 256.4,336.9 258.7,337.2 261,337.6 263.4,335.9 265.7,336.2 268.1,339.6 270.4,341 272.7,333.9 275.1,335.4 277.4,335.8 279.7,335.2 282.1,335.2 284.4,338.5 286.7,337.4 289.1,338.2 291.4,338.6 293.7,340.3 296.1,337.7 298.4,339.6 300.8,341.6 303.1,339.7 305.4,336.5 307.8,338.9 310.1,338.3 312.4,338.4 314.8,340 317.1,339.4 319.4,341.8 321.8,342.2 324.1,339.9 326.5,342.6 328.8,341.5 331.1,340.8 333.5,342.8 335.8,342.9 338.1,343.9 340.5,341.3 342.8,339.9 345.1,341.1 347.5,338.7 349.8,336.9 352.1,339.8 354.5,340.7 356.8,342.5 359.2,340 361.5,339 363.8,339.5 366.2,341.1 368.5,342.4 370.8,340.1 373.2,341.9 375.5,343.1 377.8,342.1 380.2,344 382.5,340.9 384.9,340.4 387.2,341.4 389.5,338.8 391.9,339.1 394.2,338.2 396.5,338.7 398.9,338.3 401.2,334.9 403.5,338.6 405.9,341.5 408.2,345.2 410.5,342.8 412.9,343.3 415.2,340.4 417.6,338.3 419.9,338.7 422.2,340.4 424.6,340.9 426.9,338.2 429.2,338.6 431.6,336.5 433.9,339.8 436.2,340 438.6,339.3 440.9,340.3 443.3,340 445.6,338.7 447.9,336.2 450.3,333.3 452.6,333.1 454.9,330 457.3,334.4 459.6,337.4 461.9,335.7 464.3,334.8 466.6,333.5 468.9,336.1 471.3,337.1 473.6,336.9 476,335.9 478.3,334.4 480.6,332.9 483,336.3 485.3,336.6 487.6,335.1 490,339.8 492.3,340.4 494.6,342 497,341 499.3,342.3 501.7,343 504,341.3 506.3,339.5 508.7,339.6 511,338.8 513.3,340 515.7,341.4 518,340.3 520.3,340.8 522.7,340.9 525,340.5 527.3,341.8 529.7,340.3 532,340.6 534.4,342.1 536.7,339.8 539,338.5 541.4,339.6 543.7,340.4 546,340 548.4,342.9 550.7,343.5 553,339.7 555.4,337.1 557.7,338.7 560.1,341 562.4,340.3 564.7,343.6 567.1,341.5 569.4,343.3 571.7,340.4 574.1,341.8 576.4,340.7 578.7,339.2 581.1,344.2 583.4,344.6 585.7,343.2 588.1,342.5 590.4,343.3 592.8,340 595.1,341.8 597.4,341.3 599.8,340.8 602.1,339.9 604.4,341.8 606.8,339.8 609.1,340.1 611.4,342.1 613.8,341.6 616.1,340.9 618.4,340.3 620.8,338.9 623.1,341.1 625.5,339.6 627.8,338.6 630.1,339.3 632.5,341.6 634.8,342.3 637.1,341.2 639.5,342 641.8,340.1 644.1,338.7 646.5,340.6 648.8,340.9 651.2,340.2 653.5,342.5 655.8,339 658.2,340 660.5,341 662.8,341 665.2,341.5 667.5,340.9 669.8,338.8 672.2,338.8 674.5,341.1 676.8,341.4 679.2,343.9 681.5,343.5 683.9,341.9 686.2,341.5 688.5,340.7 690.9,341.6 693.2,341.1 695.5,340.6 697.9,343.2 700.2,344.5 702.5,342.3 704.9,342 707.2,341.2 709.6,339.1 711.9,339.8 714.2,340 716.6,342 718.9,345.3 721.2,342.7 723.6,340.2 725.9,340.5 728.2,340.7 730.6,340.9 732.9,338.3 735.2,337.6 737.6,338.2 739.9,340.9 742.3,340.4 744.6,342.4 746.9,341.3 749.3,341.8 751.6,341.2 753.9,340.1 756.3,340.1 758.6,341.5 760.9,342.2 763.3,344.5 765.6,341.3 768,341.9 770.3,341.7 772.6,340.5 775,340.7 777.3,340.8 779.6,343.3 782,340.7 784.3,339.7 786.6,339.1 789,341.5 791.3,340.2 793.6,340.8 796,339.2 798.3,339.2 800.7,340.6 803,342.9 805.3,343.8 807.7,343.4 810,341.5 812.3,342.4 814.7,344.3 817,344.2 819.3,341.2 821.7,337.9 824,339.4 826.4,341.2 828.7,341.1 831,338.9 833.4,339.6 835.7,341.5 838,340.9 840.4,338.7 842.7,338.9 845,337.9 847.4,341.2 849.7,340.9 852,340.5 854.4,343 856.7,343.2 859.1,337.7 861.4,336.3 863.7,334 866.1,338.9 868.4,343.4 870.7,341 873.1,341.4 875.4,341.9 877.7,342.6 880.1,341.8 882.4,337.8 884.8,338.2 887.1,338.9 889.4,342.1 891.8,339.5 894.1,340.2 896.4,341.7 898.8,340.5 901.1,336.9 903.4,337.3 905.8,338.3 908.1,339.8 910.4,338.1 912.8,339 915.1,335.4 917.5,338.7 919.8,339.2 922.1,338.6 924.5,337.5 926.8,340 929.1,336.6 931.5,335.7 933.8,335 936.1,335.5 938.5,334.8 940.8,336.4 943.2,338.1 945.5,336 947.8,334.1 950.2,333.4 952.5,335.5 954.8,334.4 957.2,336.7 959.5,336.8 961.8,337.7 964.2,338.8 966.5,337.6 968.8,338.2 971.2,338.7 973.5,335.3 975.9,334.7 978.2,337.5 980.5,336.2 982.9,337.6 985.2,337.3 987.5,337.7 989.9,335.9 992.2,336.5 994.5,335.1 996.9,335.7 999.2,336.2 1001.6,336.4 1003.9,335.3 1006.2,335.7 1008.6,337.5 1010.9,336.5 1013.2,337.3 1015.6,335.9 1017.9,336.1 1020.2,334.6 1022.6,336.4 1024.9,339.1 1027.2,337 1029.6,337.9 1031.9,337.7 1034.3,335.8 1036.6,339.2 1038.9,338.9 1041.3,339.1 1043.6,338 1045.9,336 1048.3,337.2 1050.6,335.9 1052.9,335.7 1055.3,339.6 1057.6,333.4 1060,336.5 1062.3,336.1 1064.6,337.1 1067,336.4 1069.3,336.4 1071.6,336 1074,337.3 1076.3,334.5 1078.6,329.7 1081,331.9 1083.3,335.2 1085.6,332 1088,337.2 1090.3,338.6 1092.7,336.6 1095,334.8 1097.3,337.4 1099.7,337.4 1102,337.6 1102,390.5 1099.7,390.5 1097.3,390.5 1095,390.5 1092.7,390.5 1090.3,390.5 1088,390.5 1085.6,390.5 1083.3,390.5 1081,390.5 1078.6,390.5 1076.3,390.5 1074,390.5 1071.6,390.5 1069.3,390.5 1067,390.5 1064.6,390.5 1062.3,390.5 1060,390.5 1057.6,390.5 1055.3,390.5 1052.9,390.5 1050.6,390.5 1048.3,390.5 1045.9,390.5 1043.6,390.5 1041.3,390.5 1038.9,390.5 1036.6,390.5 1034.3,390.5 1031.9,390.5 1029.6,390.5 1027.2,390.5 1024.9,390.5 1022.6,390.5 1020.2,390.5 1017.9,390.5 1015.6,390.5 1013.2,390.5 1010.9,390.5 1008.6,390.5 1006.2,390.5 1003.9,390.5 1001.6,390.5 999.2,390.5 996.9,390.5 994.5,390.5 992.2,390.5 989.9,390.5 987.5,390.5 985.2,390.5 982.9,390.5 980.5,390.5 978.2,390.5 975.9,390.5 973.5,390.5 971.2,390.5 968.8,390.5 966.5,390.5 964.2,390.5 961.8,390.5 959.5,390.5 957.2,390.5 954.8,390.5 952.5,390.5 950.2,390.5 947.8,390.5 945.5,390.5 943.2,390.5 940.8,390.5 938.5,390.5 936.1,390.5 933.8,390.5 931.5,390.5 929.1,390.5 926.8,390.5 924.5,390.5 922.1,390.5 919.8,390.5 917.5,390.5 915.1,390.5 912.8,390.5 910.4,390.5 908.1,390.5 905.8,390.5 903.4,390.5 901.1,390.5 898.8,390.5 896.4,390.5 894.1,390.5 891.8,390.5 889.4,390.5 887.1,390.5 884.8,390.5 882.4,390.5 880.1,390.5 877.7,390.5 875.4,390.5 873.1,390.5 870.7,390.5 868.4,390.5 866.1,390.5 863.7,390.5 861.4,390.5 859.1,390.5 856.7,390.5 854.4,390.5 852,390.5 849.7,390.5 847.4,390.5 845,390.5 842.7,390.5 840.4,390.5 838,390.5 835.7,390.5 833.4,390.5 831,390.5 828.7,390.5 826.4,390.5 824,390.5 821.7,390.5 819.3,390.5 817,390.5 814.7,390.5 812.3,390.5 810,390.5 807.7,390.5 805.3,390.5 803,390.5 800.7,390.5 798.3,390.5 796,390.5 793.6,390.5 791.3,390.5 789,390.5 786.6,390.5 784.3,390.5 782,390.5 779.6,390.5 777.3,390.5 775,390.5 772.6,390.5 770.3,390.5 768,390.5 765.6,390.5 763.3,390.5 760.9,390.5 758.6,390.5 756.3,390.5 753.9,390.5 751.6,390.5 749.3,390.5 746.9,390.5 744.6,390.5 742.3,390.5 739.9,390.5 737.6,390.5 735.2,390.5 732.9,390.5 730.6,390.5 728.2,390.5 725.9,390.5 723.6,390.5 721.2,390.5 718.9,390.5 716.6,390.5 714.2,390.5 711.9,390.5 709.6,390.5 707.2,390.5 704.9,390.5 702.5,390.5 700.2,390.5 697.9,390.5 695.5,390.5 693.2,390.5 690.9,390.5 688.5,390.5 686.2,390.5 683.9,390.5 681.5,390.5 679.2,390.5 676.8,390.5 674.5,390.5 672.2,390.5 669.8,390.5 667.5,390.5 665.2,390.5 662.8,390.5 660.5,390.5 658.2,390.5 655.8,390.5 653.5,390.5 651.2,390.5 648.8,390.5 646.5,390.5 644.1,390.5 641.8,390.5 639.5,390.5 637.1,390.5 634.8,390.5 632.5,390.5 630.1,390.5 627.8,390.5 625.5,390.5 623.1,390.5 620.8,390.5 618.4,390.5 616.1,390.5 613.8,390.5 611.4,390.5 609.1,390.5 606.8,390.5 604.4,390.5 602.1,390.5 599.8,390.5 597.4,390.5 595.1,390.5 592.8,390.5 590.4,390.5 588.1,390.5 585.7,390.5 583.4,390.5 581.1,390.5 578.7,390.5 576.4,390.5 574.1,390.5 571.7,390.5 569.4,390.5 567.1,390.5 564.7,390.5 562.4,390.5 560.1,390.5 557.7,390.5 555.4,390.5 553,390.5 550.7,390.5 548.4,390.5 546,390.5 543.7,390.5 541.4,390.5 539,390.5 536.7,390.5 534.4,390.5 532,390.5 529.7,390.5 527.3,390.5 525,390.5 522.7,390.5 520.3,390.5 518,390.5 515.7,390.5 513.3,390.5 511,390.5 508.7,390.5 506.3,390.5 504,390.5 501.7,390.5 499.3,390.5 497,390.5 494.6,390.5 492.3,390.5 490,390.5 487.6,390.5 485.3,390.5 483,390.5 480.6,390.5 478.3,390.5 476,390.5 473.6,390.5 471.3,390.5 468.9,390.5 466.6,390.5 464.3,390.5 461.9,390.5 459.6,390.5 457.3,390.5 454.9,390.5 452.6,390.5 450.3,390.5 447.9,390.5 445.6,390.5 443.3,390.5 440.9,390.5 438.6,390.5 436.2,390.5 433.9,390.5 431.6,390.5 429.2,390.5 426.9,390.5 424.6,390.5 422.2,390.5 419.9,390.5 417.6,390.5 415.2,390.5 412.9,390.5 410.5,390.5 408.2,390.5 405.9,390.5 403.5,390.5 401.2,390.5 398.9,390.5 396.5,390.5 394.2,390.5 391.9,390.5 389.5,390.5 387.2,390.5 384.9,390.5 382.5,390.5 380.2,390.5 377.8,390.5 375.5,390.5 373.2,390.5 370.8,390.5 368.5,390.5 366.2,390.5 363.8,390.5 361.5,390.5 359.2,390.5 356.8,390.5 354.5,390.5 352.1,390.5 349.8,390.5 347.5,390.5 345.1,390.5 342.8,390.5 340.5,390.5 338.1,390.5 335.8,390.5 333.5,390.5 331.1,390.5 328.8,390.5 326.5,390.5 324.1,390.5 321.8,390.5 319.4,390.5 317.1,390.5 314.8,390.5 312.4,390.5 310.1,390.5 307.8,390.5 305.4,390.5 303.1,390.5 300.8,390.5 298.4,390.5 296.1,390.5 293.7,390.5 291.4,390.5 289.1,390.5 286.7,390.5 284.4,390.5 282.1,390.5 279.7,390.5 277.4,390.5 275.1,390.5 272.7,390.5 270.4,390.5 268.1,390.5 265.7,390.5 263.4,390.5 261,390.5 258.7,390.5 256.4,390.5 254,390.5 251.7,390.5 249.4,390.5 247,390.5 244.7,390.5 242.4,390.5 240,390.5 237.7,390.5 235.3,390.5 233,390.5 230.7,390.5 228.3,390.5 226,390.5 223.7,390.5 221.3,390.5 219,390.5 216.7,390.5 214.3,390.5 212,390.5 209.7,390.5 207.3,390.5 205,390.5 202.6,390.5 200.3,390.5 198,390.5 195.6,390.5 193.3,390.5 191,390.5 188.6,390.5 186.3,390.5 184,390.5 181.6,390.5 179.3,390.5 176.9,390.5 174.6,390.5 172.3,390.5 169.9,390.5 167.6,390.5 165.3,390.5 162.9,390.5 160.6,390.5 158.3,390.5 155.9,390.5 153.6,390.5 151.3,390.5 148.9,390.5 146.6,390.5 144.2,390.5 141.9,390.5 139.6,390.5 137.2,390.5 134.9,390.5 132.6,390.5 130.2,390.5 127.9,390.5 125.6,390.5 123.2,390.5 120.9,390.5 118.5,390.5 116.2,390.5 113.9,390.5 111.5,390.5 109.2,390.5 106.9,390.5 104.5,390.5 102.2,390.5 99.9,390.5 97.5,390.5 95.2,390.5 92.9,390.5 90.5,390.5 88.2,390.5 85.8,390.5 83.5,390.5 81.2,390.5 78.8,390.5 76.5,390.5" fill="#5192a0"/>
<polyline points="76.5,190.6 78.8,175.8 81.2,186.5 83.5,180 85.8,187.2 88.2,188.8 90.5,186.7 92.9,188.4 95.2,192.8 97.5,177.6 99.9,178.5 102.2,184.4 104.5,184.8 106.9,181.6 109.2,184 111.5,192.6 113.9,196 116.2,191.4 118.5,193.1 120.9,183.6 123.2,194.3 125.6,193.6 127.9,182.5 130.2,172.1 132.6,171.7 134.9,185.2 137.2,200.6 139.6,199.7 141.9,200.3 144.2,195.7 146.6,184.1 148.9,182.9 151.3,204.3 153.6,207.2 155.9,189.6 158.3,185.6 160.6,186.5 162.9,179.9 165.3,184.4 167.6,181.8 169.9,184.2 172.3,197.4 174.6,195.8 176.9,188.2 179.3,188.1 181.6,190.6 184,196.3 186.3,183.4 188.6,193.8 191,189.2 193.3,194.3 195.6,179 198,198.1 200.3,221.6 202.6,222.6 205,214.4 207.3,216.5 209.7,212.1 212,214.6 214.3,206.1 216.7,219.1 219,222.4 221.3,223 223.7,219.9 226,219.6 228.3,220.1 230.7,217.8 233,199.7 235.3,216.6 237.7,210.4 240,210 242.4,219.9 244.7,220.7 247,216.5 249.4,219.2 251.7,222.5 254,211.7 256.4,217.5 258.7,218.8 261,221.7 263.4,218.1 265.7,217.9 268.1,224.6 270.4,228.5 272.7,209.7 275.1,217.6 277.4,217.9 279.7,214.2 282.1,213.1 284.4,223.2 286.7,219.4 289.1,220.2 291.4,220.2 293.7,229 296.1,225.4 298.4,231.6 300.8,234.9 303.1,228.1 305.4,218.4 307.8,227.3 310.1,226.5 312.4,225.1 314.8,228.4 317.1,227.9 319.4,236.5 321.8,237.9 324.1,216.9 326.5,211.4 328.8,196.2 331.1,191.4 333.5,197.7 335.8,197.9 338.1,203.1 340.5,193.5 342.8,188.3 345.1,194.8 347.5,186.6 349.8,179.7 352.1,189.7 354.5,191.1 356.8,197.6 359.2,189.6 361.5,186.9 363.8,189.6 366.2,196.8 368.5,202.3 370.8,192.3 373.2,198.3 375.5,204.5 377.8,201.3 380.2,209.7 382.5,198.1 384.9,193 387.2,193.9 389.5,183.8 391.9,188 394.2,187.8 396.5,189.7 398.9,185.9 401.2,173.5 403.5,188.9 405.9,201 408.2,215.2 410.5,202.3 412.9,204.3 415.2,196.6 417.6,188.2 419.9,187.5 422.2,191.9 424.6,193.1 426.9,182.6 429.2,186.3 431.6,178.7 433.9,189.8 436.2,192.2 438.6,193.1 440.9,196.6 443.3,193 445.6,187.4 447.9,178.5 450.3,167.6 452.6,167.1 454.9,155.5 457.3,172.3 459.6,182.9 461.9,176.4 464.3,174.1 466.6,169 468.9,177 471.3,180.8 473.6,180.4 476,175.8 478.3,170.5 480.6,167.2 483,182.5 485.3,182.3 487.6,173.4 490,190.9 492.3,196.2 494.6,202.5 497,195.9 499.3,199.7 501.7,202.1 504,195.3 506.3,188.8 508.7,190 511,186.7 513.3,191.3 515.7,196.9 518,193.5 520.3,195.1 522.7,193.9 525,191.6 527.3,196.6 529.7,190.3 532,193.4 534.4,200.8 536.7,190.6 539,186.2 541.4,192.3 543.7,194.8 546,192.8 548.4,204.8 550.7,206.4 553,190.6 555.4,180.9 557.7,185.8 560.1,192.4 562.4,191.4 564.7,206.8 567.1,197.7 569.4,203.2 571.7,193.4 574.1,200.5 576.4,193.1 578.7,183.6 581.1,202.5 583.4,204.1 585.7,200.9 588.1,201 590.4,204.1 592.8,189 595.1,196.2 597.4,195.4 599.8,193.4 602.1,190.2 604.4,200.3 606.8,194.9 609.1,196.4 611.4,203.6 613.8,200.6 616.1,198.4 618.4,197.7 620.8,190.3 623.1,195.9 625.5,189.2 627.8,186.1 630.1,189.3 632.5,196.7 634.8,197.9 637.1,193.8 639.5,198.7 641.8,193.9 644.1,187.4 646.5,193.2 648.8,196.3 651.2,193.7 653.5,202.4 655.8,191 658.2,196.4 660.5,198.9 662.8,196 665.2,197.3 667.5,196.3 669.8,187.7 672.2,188 674.5,197.8 676.8,198.1 679.2,205.7 681.5,203 683.9,196.9 686.2,197 688.5,196 690.9,199.7 693.2,195.6 695.5,192.8 697.9,204.8 700.2,211.5 702.5,202.3 704.9,199.1 707.2,196.3 709.6,189.6 711.9,191.9 714.2,193.5 716.6,202.1 718.9,215 721.2,203.8 723.6,193.1 725.9,194.9 728.2,194.2 730.6,192.6 732.9,183.9 735.2,182.6 737.6,186 739.9,195.5 742.3,191.7 744.6,200.3 746.9,197.3 749.3,198.5 751.6,195.9 753.9,192.7 756.3,192.9 758.6,196.7 760.9,197.9 763.3,209.8 765.6,197.4 768,197.9 770.3,199.8 772.6,197.3 775,196.5 777.3,196.5 779.6,206.6 782,196 784.3,192.1 786.6,189.4 789,198.3 791.3,192.7 793.6,194.8 796,190.9 798.3,192.1 800.7,196.1 803,203.2 805.3,204.4 807.7,201.9 810,195.3 812.3,199.1 814.7,207.2 817,209.6 819.3,199.1 821.7,184.1 824,189 826.4,197.3 828.7,198.3 831,189.3 833.4,190 835.7,194.1 838,191 840.4,185.9 842.7,188.8 845,183 847.4,193.8 849.7,193.2 852,192.3 854.4,201.6 856.7,203.1 859.1,183.4 861.4,178.9 863.7,168.3 866.1,185.4 868.4,203 870.7,195.7 873.1,198.7 875.4,199.8 877.7,201.4 880.1,198.1 882.4,183 884.8,184.5 887.1,187.7 889.4,200.9 891.8,190.3 894.1,190.3 896.4,194.3 898.8,191.7 901.1,179.3 903.4,182.4 905.8,187.8 908.1,191.6 910.4,184 912.8,189 915.1,176.9 917.5,189.6 919.8,191.9 922.1,193.2 924.5,190 926.8,198.2 929.1,182.8 931.5,177.4 933.8,173.1 936.1,174.8 938.5,171.7 940.8,178.2 943.2,186.2 945.5,179.2 947.8,171.5 950.2,169.1 952.5,176.4 954.8,170 957.2,179.6 959.5,179.4 961.8,180.6 964.2,184.6 966.5,181.9 968.8,186.8 971.2,187.8 973.5,172 975.9,171.9 978.2,184.9 980.5,178.2 982.9,181.4 985.2,179.3 987.5,182 989.9,177.9 992.2,181.3 994.5,173.9 996.9,175 999.2,176.4 1001.6,177.6 1003.9,172.8 1006.2,173.8 1008.6,182.6 1010.9,180.4 1013.2,183.9 1015.6,178.6 1017.9,179.7 1020.2,172.5 1022.6,178.1 1024.9,188.5 1027.2,179.5 1029.6,182.2 1031.9,181.8 1034.3,174.7 1036.6,188.2 1038.9,185 1041.3,185.5 1043.6,185.1 1045.9,179.4 1048.3,181.3 1050.6,171.4 1052.9,170.1 1055.3,190.2 1057.6,168.4 1060,180.4 1062.3,180.1 1064.6,184.5 1067,180.9 1069.3,180.7 1071.6,180 1074,183 1076.3,168.4 1078.6,149 1081,158.5 1083.3,173.3 1085.6,161.8 1088,179.4 1090.3,184.7 1092.7,180.8 1095,175.5 1097.3,183.7 1099.7,181.3 1102,185.2" fill="none" stroke="#1d4f8e" stroke-width="1.7" stroke-linejoin="round"/>
<polyline points="76.5,240.4 78.8,229.4 81.2,237.4 83.5,232.2 85.8,237.4 88.2,238.9 90.5,237.4 92.9,238.3 95.2,241.8 97.5,230.5 99.9,231 102.2,236 104.5,237 106.9,234.5 109.2,235.7 111.5,242 113.9,244.5 116.2,241.1 118.5,242.4 120.9,235 123.2,243 125.6,242.3 127.9,234.2 130.2,226.9 132.6,226.4 134.9,236.3 137.2,247.8 139.6,246.9 141.9,247.4 144.2,244 146.6,235.9 148.9,235.7 151.3,251.3 153.6,253.1 155.9,239.8 158.3,236.6 160.6,237.2 162.9,232.4 165.3,236.3 167.6,234.6 169.9,236.3 172.3,246.3 174.6,245.1 176.9,238.9 179.3,238.6 181.6,240.9 184,245.1 186.3,235.3 188.6,243.2 191,240 193.3,244 195.6,232.8 198,248.9 200.3,271.6 202.6,277.8 205,272 207.3,273.2 209.7,269.7 212,271.9 214.3,266.9 216.7,275.5 219,277.2 221.3,277.3 223.7,274.9 226,274.5 228.3,275.7 230.7,274.4 233,261.7 235.3,273.1 237.7,268.7 240,268.3 242.4,275.3 244.7,276.5 247,273.4 249.4,274.4 251.7,276.3 254,269.3 256.4,273.3 258.7,274 261,276.2 263.4,273.7 265.7,273.6 268.1,278.4 270.4,280.8 272.7,267.7 275.1,273.2 277.4,273.4 279.7,270.5 282.1,270.1 284.4,276.5 286.7,273.5 289.1,274.9 291.4,275.4 293.7,272.9 296.1,257.8 298.4,250.6 300.8,241.5 303.1,228.1 305.4,218.4 307.8,227.3 310.1,226.5 312.4,225.1 314.8,228.4 317.1,227.9 319.4,236.5 321.8,237.9 324.1,231.6 326.5,240.4 328.8,235.9 331.1,232.3 333.5,237.6 335.8,237.8 338.1,242.4 340.5,235.1 342.8,230.8 345.1,236.1 347.5,229.9 349.8,224.4 352.1,232 354.5,232.8 356.8,238.1 359.2,232.3 361.5,230.6 363.8,232.8 366.2,238.4 368.5,243.1 370.8,235.1 373.2,239.5 375.5,244.5 377.8,242.1 380.2,248.6 382.5,239.6 384.9,236.1 387.2,237.5 389.5,229.9 391.9,232.7 394.2,232.1 396.5,233.7 398.9,231.3 401.2,221.9 403.5,233.6 405.9,243.3 408.2,254.8 410.5,244.8 412.9,246.2 415.2,240.1 417.6,233.8 419.9,233.5 422.2,236.7 424.6,237.8 426.9,230.2 429.2,232.9 431.6,227 433.9,236.2 436.2,238.4 438.6,238.7 440.9,241.2 443.3,238.6 445.6,234 447.9,226.9 450.3,219 452.6,218.7 454.9,209.4 457.3,222.3 459.6,230.3 461.9,225.4 464.3,224.2 466.6,220.6 468.9,226.7 471.3,229.7 473.6,229.5 476,225.9 478.3,222 480.6,219.4 483,230.8 485.3,230.3 487.6,223.7 490,237.4 492.3,241.3 494.6,246.2 497,241.2 499.3,244.3 501.7,246.3 504,241 506.3,236 508.7,236.8 511,234.1 513.3,237.6 515.7,242 518,239.2 520.3,240.6 522.7,239.8 525,237.7 527.3,241.6 529.7,237 532,238.7 534.4,243.8 536.7,236.1 539,232.8 541.4,237.6 543.7,239.9 546,239.2 548.4,249 550.7,249.8 553,236.8 555.4,229.2 557.7,233.7 560.1,239.3 562.4,238.2 564.7,249.4 567.1,242.7 569.4,247.2 571.7,238.9 574.1,243.7 576.4,238.4 578.7,231.5 581.1,246 583.4,247.1 585.7,244.9 588.1,245.1 590.4,247.7 592.8,236.5 595.1,241.8 597.4,240.4 599.8,238.4 602.1,236.2 604.4,244.3 606.8,240.2 609.1,241.4 611.4,246.5 613.8,244.2 616.1,243 618.4,242.9 620.8,236.8 623.1,240.7 625.5,235.3 627.8,233.1 630.1,235.3 632.5,240.9 634.8,242.6 637.1,239.9 639.5,243.4 641.8,239.5 644.1,234.5 646.5,238.9 648.8,241.3 651.2,239.6 653.5,246.1 655.8,237.1 658.2,241 660.5,243.4 662.8,241.5 665.2,241.9 667.5,240.9 669.8,234.7 672.2,235.1 674.5,242.3 676.8,242.9 679.2,249.3 681.5,246.8 683.9,242.1 686.2,242.4 688.5,241.3 690.9,244 693.2,241 695.5,238.9 697.9,248.4 700.2,253.9 702.5,246.9 704.9,244.1 707.2,241.5 709.6,236.1 711.9,238.3 714.2,239.6 716.6,246 718.9,255.9 721.2,247.1 723.6,238.7 725.9,240.4 728.2,240.5 730.6,239.2 732.9,232 735.2,230.7 737.6,233.2 739.9,240.9 742.3,238.5 744.6,245.1 746.9,242.6 749.3,243 751.6,241 753.9,239.3 756.3,239.5 758.6,242.1 760.9,243.1 763.3,252.1 765.6,242.5 768,243 770.3,244.7 772.6,243 775,242.5 777.3,242.3 779.6,249.8 782,241.8 784.3,238.7 786.6,236.4 789,243.2 791.3,239 793.6,240.3 796,237.1 798.3,238.2 800.7,241.4 803,247.1 805.3,248.6 807.7,246.7 810,241.1 812.3,243.8 814.7,250 817,251.8 819.3,243.8 821.7,232.2 824,235.6 826.4,242.3 828.7,243.4 831,236.4 833.4,237.1 835.7,240.3 838,238 840.4,234 842.7,236 845,231.7 847.4,240.3 849.7,239.5 852,238.7 854.4,245.9 856.7,246.9 859.1,231.6 861.4,228.1 863.7,220.5 866.1,234.2 868.4,247.5 870.7,241.6 873.1,243.8 875.4,244.5 877.7,245.7 880.1,242.9 882.4,231 884.8,232.6 887.1,235.6 889.4,245.8 891.8,237.3 894.1,237.6 896.4,240.8 898.8,238.3 901.1,228.8 903.4,231 905.8,235.1 908.1,238.8 910.4,233.1 912.8,236.3 915.1,226.4 917.5,236.3 919.8,238.7 922.1,240 924.5,237.4 926.8,243.4 929.1,231.9 931.5,228.5 933.8,225.5 936.1,226.4 938.5,223.6 940.8,228.5 943.2,234.9 945.5,229.6 947.8,223.4 950.2,222.1 952.5,228.3 954.8,223.5 957.2,230.6 959.5,230.4 961.8,231.1 964.2,233.9 966.5,231.9 968.8,235.3 971.2,235.9 973.5,223.9 975.9,223.1 978.2,232.9 980.5,228.3 982.9,231.3 985.2,229.6 987.5,231.4 989.9,228.4 992.2,231.3 994.5,226 996.9,226.6 999.2,227.4 1001.6,228.9 1003.9,225.5 1006.2,225.5 1008.6,232 1010.9,230.4 1013.2,232.9 1015.6,228.7 1017.9,229.8 1020.2,224.7 1022.6,229.2 1024.9,237.3 1027.2,230.3 1029.6,232.3 1031.9,232.1 1034.3,226.4 1036.6,236.6 1038.9,234.5 1041.3,234.5 1043.6,233.5 1045.9,229.1 1048.3,230.7 1050.6,223.6 1052.9,223.2 1055.3,238.1 1057.6,220.9 1060,229.6 1062.3,228.9 1064.6,232.8 1067,231 1069.3,230.9 1071.6,229.9 1074,231.9 1076.3,221.1 1078.6,206.9 1081,214.3 1083.3,225 1085.6,215.4 1088,229.2 1090.3,233.9 1092.7,230.5 1095,225.7 1097.3,232.3 1099.7,230.9 1102,232.5" fill="none" stroke="#2864b4" stroke-width="1.7" stroke-linejoin="round"/>
<polyline points="76.5,290.9 78.8,284 81.2,289.3 83.5,285.8 85.8,289.6 88.2,290.5 90.5,289.2 92.9,290.6 95.2,293.8 97.5,286.3 99.9,286 102.2,288.7 104.5,288.8 106.9,286.8 109.2,287.7 111.5,292.4 113.9,294.3 116.2,291.7 118.5,292.6 120.9,288.6 123.2,293.9 125.6,292.8 127.9,287.6 130.2,283 132.6,282.6 134.9,288.6 137.2,295.5 139.6,295 141.9,295.8 144.2,293.7 146.6,288.4 148.9,288.6 151.3,298.9 153.6,300 155.9,291.1 158.3,288.7 160.6,289.2 162.9,286.4 165.3,288.8 167.6,287.4 169.9,288.5 172.3,295.2 174.6,295 176.9,290.8 179.3,290.2 181.6,291.7 184,294.7 186.3,288 188.6,292.9 191,290.7 193.3,293.7 195.6,286.9 198,299.6 200.3,321.3 202.6,333.8 205,330.8 207.3,331.3 209.7,329.6 212,330.7 214.3,328.3 216.7,332.4 219,333.3 221.3,333.7 223.7,332.4 226,331.8 228.3,332.5 230.7,332.3 233,326.4 235.3,331.9 237.7,329.5 240,329.1 242.4,332.5 244.7,333.6 247,333.3 249.4,334.7 251.7,336.6 254,334.8 256.4,336.9 258.7,337.2 261,337.6 263.4,335.9 265.7,336.2 268.1,339.6 270.4,341 272.7,333.9 275.1,335.4 277.4,335.8 279.7,335.2 282.1,335.2 284.4,338.5 286.7,337.4 289.1,338.2 291.4,338.6 293.7,331 296.1,315.4 298.4,305.3 300.8,294.6 303.1,283.2 305.4,276.9 307.8,282.6 310.1,282.1 312.4,281.1 314.8,283.1 317.1,283.2 319.4,288.9 321.8,289.5 324.1,285.1 326.5,291.3 328.8,288.5 331.1,285.7 333.5,288.9 335.8,289.3 338.1,292.5 340.5,287.6 342.8,284.4 345.1,287.6 347.5,283.9 349.8,280.6 352.1,285.2 354.5,285.6 356.8,289.6 359.2,285.6 361.5,284 363.8,285.3 366.2,288.8 368.5,292.2 370.8,287.3 373.2,290.1 375.5,293.1 377.8,291.5 380.2,295.9 382.5,289.4 384.9,287.1 387.2,288.8 389.5,283.8 391.9,284.9 394.2,284.1 396.5,285.8 398.9,284.4 401.2,277.8 403.5,285.8 405.9,292.2 408.2,299.8 410.5,293.8 412.9,294.6 415.2,289.9 417.6,285.4 419.9,285.3 422.2,287.9 424.6,289.2 426.9,284.4 429.2,285.6 431.6,281 433.9,287.3 436.2,288.5 438.6,288.2 440.9,290 443.3,288.4 445.6,285.5 447.9,280.9 450.3,275.6 452.6,275.8 454.9,269.9 457.3,278.4 459.6,283.6 461.9,280.3 464.3,279.3 466.6,276.6 468.9,281 471.3,283.2 473.6,282.8 476,280.4 478.3,277.8 480.6,275.4 483,282.5 485.3,282.6 487.6,278.7 490,287.7 492.3,290.2 494.6,294.1 497,291.2 499.3,293 501.7,294.3 504,291.4 506.3,288.1 508.7,288.4 511,286.3 513.3,288.2 515.7,291.2 518,289.4 520.3,290.6 522.7,290.3 525,288.6 527.3,291.1 529.7,288.1 532,289.2 534.4,292.7 536.7,287.8 539,285.5 541.4,288.4 543.7,289.6 546,288.9 548.4,295.6 550.7,296.3 553,287.9 555.4,282.8 557.7,285.7 560.1,289.6 562.4,288.6 564.7,296 567.1,291.6 569.4,294.7 571.7,289.1 574.1,292.1 576.4,288.5 578.7,284.3 581.1,294.3 583.4,295.1 585.7,293.5 588.1,293.1 590.4,294.8 592.8,287.7 595.1,291.6 597.4,290.8 599.8,289.2 602.1,287.7 604.4,293.1 606.8,290.1 609.1,290.7 611.4,294.1 613.8,293 616.1,292.2 618.4,291.5 620.8,287.5 623.1,290.4 625.5,286.7 627.8,285.4 630.1,286.8 632.5,290.6 634.8,291.9 637.1,290.1 639.5,292.4 641.8,289 644.1,285.3 646.5,288.6 648.8,290 651.2,288.9 653.5,293.6 655.8,287.4 658.2,289.9 660.5,291.7 662.8,290.5 665.2,290.7 667.5,290.1 669.8,286.2 672.2,286.4 674.5,291.3 676.8,291.6 679.2,295.7 681.5,294 683.9,290.8 686.2,291.3 688.5,290.7 690.9,291.8 693.2,289.5 695.5,288.5 697.9,295.3 700.2,299.3 702.5,294.3 704.9,291.9 707.2,290.1 709.6,287 711.9,288.8 714.2,289.8 716.6,293.8 718.9,299.8 721.2,294 723.6,288.9 725.9,290.5 728.2,290.9 730.6,290.1 732.9,285 735.2,283.6 737.6,285.2 739.9,290.7 742.3,289 744.6,293.3 746.9,291.5 749.3,291.6 751.6,290 753.9,288.8 756.3,289.7 758.6,291.9 760.9,292.1 763.3,297.5 765.6,291.7 768,292.7 770.3,292.9 772.6,290.6 775,290.5 777.3,291.2 779.6,296.2 782,290.4 784.3,287.9 786.6,286.8 789,292 791.3,289.5 793.6,290.7 796,287.9 798.3,288.1 800.7,290.4 803,294.3 805.3,295.5 807.7,294.5 810,290.1 812.3,292 814.7,296.8 817,297.8 819.3,292.4 821.7,285 824,287.2 826.4,291.4 828.7,291.7 831,287 833.4,287.9 835.7,290.6 838,289.1 840.4,285.7 842.7,286.7 845,284.4 847.4,290.5 849.7,289.7 852,288.8 854.4,293.5 856.7,294.2 859.1,283.9 861.4,281.5 863.7,276.4 866.1,285.8 868.4,295.1 870.7,291.2 873.1,292.5 875.4,292.6 877.7,292.8 880.1,290.9 882.4,283.7 884.8,285 887.1,286.7 889.4,293.5 891.8,288 894.1,288.7 896.4,291.2 898.8,289.1 901.1,282.4 903.4,283.8 905.8,286.5 908.1,288.8 910.4,284.8 912.8,286.7 915.1,280.1 917.5,287 919.8,288.5 922.1,288.7 924.5,287 926.8,291.5 929.1,283.7 931.5,281.6 933.8,280 936.1,280.7 938.5,278.7 940.8,281.5 943.2,285.3 945.5,281.6 947.8,277.7 950.2,277.2 952.5,281.7 954.8,278.8 957.2,283.5 959.5,283.2 961.8,283.4 964.2,285 966.5,283.9 968.8,286.4 971.2,287.2 973.5,279.6 975.9,278.4 978.2,284.3 980.5,281.5 982.9,283.9 985.2,283.2 987.5,284.8 989.9,282.4 992.2,283.7 994.5,280 996.9,280.4 999.2,281.2 1001.6,282.5 1003.9,280.8 1006.2,281 1008.6,284.6 1010.9,283.5 1013.2,285.3 1015.6,281.9 1017.9,281.9 1020.2,278.3 1022.6,281.4 1024.9,287 1027.2,283 1029.6,284.7 1031.9,284.6 1034.3,280.6 1036.6,287.3 1038.9,286.3 1041.3,286.4 1043.6,284.6 1045.9,281.5 1048.3,283.1 1050.6,278.6 1052.9,278.6 1055.3,288.7 1057.6,276.8 1060,282 1062.3,281.2 1064.6,283.7 1067,282.8 1069.3,283.3 1071.6,282.8 1074,284.3 1076.3,277.8 1078.6,268.4 1081,273 1083.3,279.9 1085.6,273.4 1088,282.9 1090.3,286.1 1092.7,283.3 1095,279.3 1097.3,283.7 1099.7,283.7 1102,284.7" fill="none" stroke="#5a96d6" stroke-width="1.7" stroke-linejoin="round"/>
<polyline points="76.5,342 78.8,338.5 81.2,340.5 83.5,338.5 85.8,340.7 88.2,341.4 90.5,340.5 92.9,340.9 95.2,342.6 97.5,339.2 99.9,338.7 102.2,340 104.5,340.4 106.9,339.7 109.2,340 111.5,342.1 113.9,343.4 116.2,342.3 118.5,342.4 120.9,340.5 123.2,343.4 125.6,342.7 127.9,339.8 130.2,337 132.6,336.8 134.9,339.9 137.2,343.5 139.6,343.6 141.9,344 144.2,342.8 146.6,340.2 148.9,340.1 151.3,345.1 153.6,345.6 155.9,341.2 158.3,340 160.6,340.1 162.9,338.5 165.3,339.7 167.6,339.1 169.9,339.8 172.3,343.4 174.6,343.2 176.9,341.4 179.3,341.5 181.6,342.2 184,343.3 186.3,340 188.6,342.5 191,341.2 193.3,342.4 195.6,339.9 198,349.8 200.3,371.2 202.6,390.5 205,390.5 207.3,390.5 209.7,390.5 212,390.5 214.3,390.5 216.7,390.5 219,390.5 221.3,390.5 223.7,390.5 226,390.5 228.3,390.5 230.7,390.5 233,390.5 235.3,390.5 237.7,390.5 240,390.5 242.4,390.5 244.7,390.5 247,378.5 249.4,364.4 251.7,351.1 254,334.8 256.4,336.9 258.7,337.2 261,337.6 263.4,335.9 265.7,336.2 268.1,339.6 270.4,341 272.7,333.9 275.1,335.4 277.4,335.8 279.7,335.2 282.1,335.2 284.4,338.5 286.7,337.4 289.1,338.2 291.4,338.6 293.7,340.3 296.1,337.7 298.4,339.6 300.8,341.6 303.1,339.7 305.4,336.5 307.8,338.9 310.1,338.3 312.4,338.4 314.8,340 317.1,339.4 319.4,341.8 321.8,342.2 324.1,339.9 326.5,342.6 328.8,341.5 331.1,340.8 333.5,342.8 335.8,342.9 338.1,343.9 340.5,341.3 342.8,339.9 345.1,341.1 347.5,338.7 349.8,336.9 352.1,339.8 354.5,340.7 356.8,342.5 359.2,340 361.5,339 363.8,339.5 366.2,341.1 368.5,342.4 370.8,340.1 373.2,341.9 375.5,343.1 377.8,342.1 380.2,344 382.5,340.9 384.9,340.4 387.2,341.4 389.5,338.8 391.9,339.1 394.2,338.2 396.5,338.7 398.9,338.3 401.2,334.9 403.5,338.6 405.9,341.5 408.2,345.2 410.5,342.8 412.9,343.3 415.2,340.4 417.6,338.3 419.9,338.7 422.2,340.4 424.6,340.9 426.9,338.2 429.2,338.6 431.6,336.5 433.9,339.8 436.2,340 438.6,339.3 440.9,340.3 443.3,340 445.6,338.7 447.9,336.2 450.3,333.3 452.6,333.1 454.9,330 457.3,334.4 459.6,337.4 461.9,335.7 464.3,334.8 466.6,333.5 468.9,336.1 471.3,337.1 473.6,336.9 476,335.9 478.3,334.4 480.6,332.9 483,336.3 485.3,336.6 487.6,335.1 490,339.8 492.3,340.4 494.6,342 497,341 499.3,342.3 501.7,343 504,341.3 506.3,339.5 508.7,339.6 511,338.8 513.3,340 515.7,341.4 518,340.3 520.3,340.8 522.7,340.9 525,340.5 527.3,341.8 529.7,340.3 532,340.6 534.4,342.1 536.7,339.8 539,338.5 541.4,339.6 543.7,340.4 546,340 548.4,342.9 550.7,343.5 553,339.7 555.4,337.1 557.7,338.7 560.1,341 562.4,340.3 564.7,343.6 567.1,341.5 569.4,343.3 571.7,340.4 574.1,341.8 576.4,340.7 578.7,339.2 581.1,344.2 583.4,344.6 585.7,343.2 588.1,342.5 590.4,343.3 592.8,340 595.1,341.8 597.4,341.3 599.8,340.8 602.1,339.9 604.4,341.8 606.8,339.8 609.1,340.1 611.4,342.1 613.8,341.6 616.1,340.9 618.4,340.3 620.8,338.9 623.1,341.1 625.5,339.6 627.8,338.6 630.1,339.3 632.5,341.6 634.8,342.3 637.1,341.2 639.5,342 641.8,340.1 644.1,338.7 646.5,340.6 648.8,340.9 651.2,340.2 653.5,342.5 655.8,339 658.2,340 660.5,341 662.8,341 665.2,341.5 667.5,340.9 669.8,338.8 672.2,338.8 674.5,341.1 676.8,341.4 679.2,343.9 681.5,343.5 683.9,341.9 686.2,341.5 688.5,340.7 690.9,341.6 693.2,341.1 695.5,340.6 697.9,343.2 700.2,344.5 702.5,342.3 704.9,342 707.2,341.2 709.6,339.1 711.9,339.8 714.2,340 716.6,342 718.9,345.3 721.2,342.7 723.6,340.2 725.9,340.5 728.2,340.7 730.6,340.9 732.9,338.3 735.2,337.6 737.6,338.2 739.9,340.9 742.3,340.4 744.6,342.4 746.9,341.3 749.3,341.8 751.6,341.2 753.9,340.1 756.3,340.1 758.6,341.5 760.9,342.2 763.3,344.5 765.6,341.3 768,341.9 770.3,341.7 772.6,340.5 775,340.7 777.3,340.8 779.6,343.3 782,340.7 784.3,339.7 786.6,339.1 789,341.5 791.3,340.2 793.6,340.8 796,339.2 798.3,339.2 800.7,340.6 803,342.9 805.3,343.8 807.7,343.4 810,341.5 812.3,342.4 814.7,344.3 817,344.2 819.3,341.2 821.7,337.9 824,339.4 826.4,341.2 828.7,341.1 831,338.9 833.4,339.6 835.7,341.5 838,340.9 840.4,338.7 842.7,338.9 845,337.9 847.4,341.2 849.7,340.9 852,340.5 854.4,343 856.7,343.2 859.1,337.7 861.4,336.3 863.7,334 866.1,338.9 868.4,343.4 870.7,341 873.1,341.4 875.4,341.9 877.7,342.6 880.1,341.8 882.4,337.8 884.8,338.2 887.1,338.9 889.4,342.1 891.8,339.5 894.1,340.2 896.4,341.7 898.8,340.5 901.1,336.9 903.4,337.3 905.8,338.3 908.1,339.8 910.4,338.1 912.8,339 915.1,335.4 917.5,338.7 919.8,339.2 922.1,338.6 924.5,337.5 926.8,340 929.1,336.6 931.5,335.7 933.8,335 936.1,335.5 938.5,334.8 940.8,336.4 943.2,338.1 945.5,336 947.8,334.1 950.2,333.4 952.5,335.5 954.8,334.4 957.2,336.7 959.5,336.8 961.8,337.7 964.2,338.8 966.5,337.6 968.8,338.2 971.2,338.7 973.5,335.3 975.9,334.7 978.2,337.5 980.5,336.2 982.9,337.6 985.2,337.3 987.5,337.7 989.9,335.9 992.2,336.5 994.5,335.1 996.9,335.7 999.2,336.2 1001.6,336.4 1003.9,335.3 1006.2,335.7 1008.6,337.5 1010.9,336.5 1013.2,337.3 1015.6,335.9 1017.9,336.1 1020.2,334.6 1022.6,336.4 1024.9,339.1 1027.2,337 1029.6,337.9 1031.9,337.7 1034.3,335.8 1036.6,339.2 1038.9,338.9 1041.3,339.1 1043.6,338 1045.9,336 1048.3,337.2 1050.6,335.9 1052.9,335.7 1055.3,339.6 1057.6,333.4 1060,336.5 1062.3,336.1 1064.6,337.1 1067,336.4 1069.3,336.4 1071.6,336 1074,337.3 1076.3,334.5 1078.6,329.7 1081,331.9 1083.3,335.2 1085.6,332 1088,337.2 1090.3,338.6 1092.7,336.6 1095,334.8 1097.3,337.4 1099.7,337.4 1102,337.6" fill="none" stroke="#80d7ef" stroke-width="1.7" stroke-linejoin="round"/>
<line x1="443.2" y1="114" x2="443.2" y2="390" stroke="#25cdf0" stroke-width="1.6" stroke-dasharray="3.5,5.5"/>
<polygon points="436.2,401 450.2,401 443.2,394" fill="#16d2f5"/>
<rect x="30" y="450.5" width="25" height="7" rx="3.5" fill="#73d3ef"/>
<text x="70" y="461" font-size="22.5" fill="#ccccdc" text-anchor="start" font-weight="normal"  stroke="#ccccdc" stroke-width="0.35">web_server_01</text>
<rect x="239.5" y="450.5" width="25" height="7" rx="3.5" fill="#5b93d6"/>
<text x="279.5" y="461" font-size="22.5" fill="#ccccdc" text-anchor="start" font-weight="normal"  stroke="#ccccdc" stroke-width="0.35">web_server_02</text>
<rect x="450.5" y="450.5" width="25" height="7" rx="3.5" fill="#1f5fb8"/>
<text x="490.5" y="461" font-size="22.5" fill="#ccccdc" text-anchor="start" font-weight="normal"  stroke="#ccccdc" stroke-width="0.35">web_server_03</text>
<rect x="663" y="450.5" width="25" height="7" rx="3.5" fill="#19467f"/>
<text x="703" y="461" font-size="22.5" fill="#ccccdc" text-anchor="start" font-weight="normal"  stroke="#ccccdc" stroke-width="0.35">web_server_04</text>
<line x1="1205" y1="133.5" x2="1637" y2="133.5" stroke="#2b2e33" stroke-width="1"/>
<text x="1196" y="140.5" font-size="23.5" fill="#ccccdc" text-anchor="end" font-weight="normal"  stroke="#ccccdc" stroke-width="0.35">4%</text>
<line x1="1205" y1="197.6" x2="1637" y2="197.6" stroke="#2b2e33" stroke-width="1"/>
<text x="1196" y="204.6" font-size="23.5" fill="#ccccdc" text-anchor="end" font-weight="normal"  stroke="#ccccdc" stroke-width="0.35">3%</text>
<line x1="1205" y1="261.7" x2="1637" y2="261.7" stroke="#2b2e33" stroke-width="1"/>
<text x="1196" y="268.7" font-size="23.5" fill="#ccccdc" text-anchor="end" font-weight="normal"  stroke="#ccccdc" stroke-width="0.35">2%</text>
<line x1="1205" y1="325.8" x2="1637" y2="325.8" stroke="#2b2e33" stroke-width="1"/>
<text x="1196" y="332.8" font-size="23.5" fill="#ccccdc" text-anchor="end" font-weight="normal"  stroke="#ccccdc" stroke-width="0.35">1%</text>
<line x1="1205" y1="389.9" x2="1637" y2="389.9" stroke="#2b2e33" stroke-width="1"/>
<text x="1196" y="396.9" font-size="23.5" fill="#ccccdc" text-anchor="end" font-weight="normal"  stroke="#ccccdc" stroke-width="0.35">0%</text>
<line x1="1636" y1="137" x2="1645" y2="137" stroke="#2b2e33" stroke-width="1"/>
<text x="1653" y="144" font-size="23.5" fill="#ccccdc" text-anchor="start" font-weight="normal"  stroke="#ccccdc" stroke-width="0.35">5 B</text>
<line x1="1636" y1="194.6" x2="1645" y2="194.6" stroke="#2b2e33" stroke-width="1"/>
<text x="1653" y="201.6" font-size="23.5" fill="#ccccdc" text-anchor="start" font-weight="normal"  stroke="#ccccdc" stroke-width="0.35">4 B</text>
<line x1="1636" y1="252.2" x2="1645" y2="252.2" stroke="#2b2e33" stroke-width="1"/>
<text x="1653" y="259.2" font-size="23.5" fill="#ccccdc" text-anchor="start" font-weight="normal"  stroke="#ccccdc" stroke-width="0.35">3 B</text>
<line x1="1636" y1="309.8" x2="1645" y2="309.8" stroke="#2b2e33" stroke-width="1"/>
<text x="1653" y="316.8" font-size="23.5" fill="#ccccdc" text-anchor="start" font-weight="normal"  stroke="#ccccdc" stroke-width="0.35">2 B</text>
<line x1="1636" y1="367.4" x2="1645" y2="367.4" stroke="#2b2e33" stroke-width="1"/>
<text x="1653" y="374.4" font-size="23.5" fill="#ccccdc" text-anchor="start" font-weight="normal"  stroke="#ccccdc" stroke-width="0.35">1 B</text>
<line x1="1219" y1="114" x2="1219" y2="398" stroke="#2b2e33" stroke-width="1"/>
<text x="1219" y="423.5" font-size="23.5" fill="#ccccdc" text-anchor="middle" font-weight="normal"  stroke="#ccccdc" stroke-width="0.35">13:00</text>
<line x1="1325.3" y1="114" x2="1325.3" y2="398" stroke="#2b2e33" stroke-width="1"/>
<text x="1325.3" y="423.5" font-size="23.5" fill="#ccccdc" text-anchor="middle" font-weight="normal"  stroke="#ccccdc" stroke-width="0.35">13:15</text>
<line x1="1431.6" y1="114" x2="1431.6" y2="398" stroke="#2b2e33" stroke-width="1"/>
<text x="1431.6" y="423.5" font-size="23.5" fill="#ccccdc" text-anchor="middle" font-weight="normal"  stroke="#ccccdc" stroke-width="0.35">13:30</text>
<line x1="1537.9" y1="114" x2="1537.9" y2="398" stroke="#2b2e33" stroke-width="1"/>
<text x="1537.9" y="423.5" font-size="23.5" fill="#ccccdc" text-anchor="middle" font-weight="normal"  stroke="#ccccdc" stroke-width="0.35">13:45</text>
<polyline points="1212,233.2 1213.5,235.6 1215,239.8 1216.5,247.5 1218,255.9 1219.5,267.5 1221,281.1 1222.5,289.7 1224,285.4 1225.5,286.2 1227,287.3 1228.5,288.2 1230,289.5 1231.5,260.6 1233,178.9 1234.5,175.3 1236,173.6 1237.5,168.2 1239,162.5 1240.5,159.4 1242,157.6 1243.5,151.9 1245,149.9 1246.5,151.5 1248,151.3 1249.5,151.1 1251,146.2 1252.5,147.5 1254,153.9 1255.5,180.3 1257,212.6 1258.5,238.9 1260,241.7 1261.5,241.8 1263,240.6 1264.5,233.5 1266,210.1 1267.5,205.8 1269,204.1 1270.5,204 1272,202.8 1273.5,201 1275,197.4 1276.5,202.4 1278,210 1279.5,210 1281,205.4 1282.5,203.9 1284,205.6 1285.5,205.5 1287,208.9 1288.5,214.5 1290,232.2 1291.5,236.3 1293,235.6 1294.5,234.3 1296,238.8 1297.5,247.7 1299,256.5 1300.5,257.5 1302,257.9 1303.5,265.5 1305,267 1306.5,270.7 1308,273.3 1309.5,275.6 1311,275.7 1312.5,275.3 1314,281 1315.5,292.9 1317,295.6 1318.5,288.6 1320,282.4 1321.5,278.1 1323,275.3 1324.5,269.5 1326,263.7 1327.5,259.1 1329,250.2 1330.5,240.2 1332,228.8 1333.5,227.5 1335,230.8 1336.5,231.2 1338,232.5 1339.5,235 1341,238.1 1342.5,239.8 1344,242 1345.5,240.9 1347,241.8 1348.5,249.7 1350,255.8 1351.5,261.6 1353,266.2 1354.5,269.2 1356,272.2 1357.5,277.2 1359,271.6 1360.5,266.2 1362,259.7 1363.5,253.2 1365,252.4 1366.5,247.4 1368,241.8 1369.5,226.6 1371,224.8 1372.5,223.6 1374,214 1375.5,205.7 1377,204.3 1378.5,206.1 1380,208.7 1381.5,207.7 1383,208.4 1384.5,218.8 1386,226.9 1387.5,233 1389,237.9 1390.5,236.7 1392,233.8 1393.5,244.3 1395,251.8 1396.5,252.1 1398,255.7 1399.5,268.2 1401,279.6 1402.5,275.2 1404,271.2 1405.5,269.2 1407,265.4 1408.5,262.2 1410,261.7 1411.5,258.8 1413,259.1 1414.5,262.4 1416,265.6 1417.5,265.2 1419,254.1 1420.5,245.1 1422,245 1423.5,242.5 1425,241.6 1426.5,241.8 1428,241.8 1429.5,237.8 1431,229.5 1432.5,220.1 1434,221.2 1435.5,225.9 1437,228.4 1438.5,230.6 1440,228.1 1441.5,222.4 1443,223.9 1444.5,230.1 1446,234.2 1447.5,237 1449,238.9 1450.5,237.1 1452,235.4 1453.5,239.4 1455,246 1456.5,253.2 1458,257.5 1459.5,258.9 1461,257.5 1462.5,257.6 1464,255.5 1465.5,251 1467,246.5 1468.5,241.3 1470,238.1 1471.5,234.7 1473,234.6 1474.5,236.5 1476,234.9 1477.5,229.9 1479,228.8 1480.5,227.3 1482,225.4 1483.5,226.8 1485,225.2 1486.5,223 1488,223.7 1489.5,223.5 1491,223.8 1492.5,222.8 1494,222 1495.5,226.2 1497,232.6 1498.5,237.9 1500,237.6 1501.5,236.4 1503,241.3 1504.5,248 1506,251.7 1507.5,255.6 1509,256.9 1510.5,259.9 1512,262.1 1513.5,259.4 1515,255.3 1516.5,251.7 1518,249.2 1519.5,245.9 1521,242.7 1522.5,236.1 1524,232.8 1525.5,226.9 1527,216.5 1528.5,209.3 1530,207.4 1531.5,209.3 1533,210.5 1534.5,209.8 1536,210.5 1537.5,213 1539,220.7 1540.5,229.1 1542,221.5 1543.5,221.1 1545,229.2 1546.5,235.8 1548,238.2 1549.5,240.2 1551,243.1 1552.5,245.7 1554,250.1 1555.5,256.3 1557,260 1558.5,262.4 1560,264.6 1561.5,268.4 1563,273.6 1564.5,273.4 1566,269.6 1567.5,262.8 1569,255.1 1570.5,246.8 1572,240.3 1573.5,238.9 1575,240 1576.5,240.8 1578,240.2 1579.5,240.6 1581,242.8 1582.5,245.2 1584,245.7 1585.5,242 1587,235.4 1588.5,241.9 1590,249 1591.5,254.1 1593,258.7 1594.5,257.3 1596,257.3 1597.5,268.4 1599,278.1 1600.5,272.9 1602,267.6 1603.5,259.2 1605,250.7 1606.5,249.9 1608,246.4 1609.5,235.5 1611,223 1612.5,221 1614,219.7 1615.5,214.7 1617,205.2 1618.5,195.7 1620,188.5 1621.5,184.2 1623,182.2 1624.5,178.5 1626,182.8 1627.5,187 1629,195.7 1630.5,203 1632,201.2 1633.5,206.1 1635,222" fill="none" stroke="#ee5535" stroke-width="3.4" stroke-linejoin="round"/>
<polygon points="1217.8,390 1217.8,194.5 1224.9,309.7 1232,194.5 1239.1,252.1 1246.2,252.1 1253.2,309.7 1260.3,252.1 1267.4,252.1 1274.5,194.5 1281.6,252.1 1288.7,309.7 1295.8,309.7 1302.9,252.1 1310,252.1 1317.1,309.7 1324.1,309.7 1331.2,309.7 1338.3,309.7 1345.4,194.5 1352.5,309.7 1359.6,252.1 1366.7,194.5 1373.8,194.5 1380.9,252.1 1388,309.7 1395,252.1 1402.1,309.7 1409.2,194.5 1416.3,309.7 1423.4,309.7 1430.5,252.1 1437.6,309.7 1444.7,252.1 1451.8,194.5 1458.9,252.1 1466,194.5 1473,309.7 1480.1,309.7 1487.2,252.1 1494.3,194.5 1501.4,252.1 1508.5,309.7 1515.6,309.7 1522.7,194.5 1529.8,309.7 1536.8,309.7 1543.9,194.5 1551,136.9 1558.1,367.3 1565.2,309.7 1579.4,367.3 1586.5,252.1 1593.6,367.3 1600.7,367.3 1607.8,309.7 1614.8,367.3 1629,367.3 1629,390" fill="url(#memg)"/>
<polyline points="1217.8,194.5 1224.9,309.7 1232,194.5 1239.1,252.1 1246.2,252.1 1253.2,309.7 1260.3,252.1 1267.4,252.1 1274.5,194.5 1281.6,252.1 1288.7,309.7 1295.8,309.7 1302.9,252.1 1310,252.1 1317.1,309.7 1324.1,309.7 1331.2,309.7 1338.3,309.7 1345.4,194.5 1352.5,309.7 1359.6,252.1 1366.7,194.5 1373.8,194.5 1380.9,252.1 1388,309.7 1395,252.1 1402.1,309.7 1409.2,194.5 1416.3,309.7 1423.4,309.7 1430.5,252.1 1437.6,309.7 1444.7,252.1 1451.8,194.5 1458.9,252.1 1466,194.5 1473,309.7 1480.1,309.7 1487.2,252.1 1494.3,194.5 1501.4,252.1 1508.5,309.7 1515.6,309.7 1522.7,194.5 1529.8,309.7 1536.8,309.7 1543.9,194.5 1551,136.9 1558.1,367.3 1565.2,309.7 1579.4,367.3 1586.5,252.1 1593.6,367.3 1600.7,367.3 1607.8,309.7 1614.8,367.3 1629,367.3" fill="none" stroke="#b28fd0" stroke-opacity="0.5" stroke-width="1.2"/>
<circle cx="1217.8" cy="194.5" r="5.3" fill="#c690e2"/>
<circle cx="1224.9" cy="309.7" r="5.3" fill="#c690e2"/>
<circle cx="1232" cy="194.5" r="5.3" fill="#c690e2"/>
<circle cx="1239.1" cy="252.1" r="5.3" fill="#c690e2"/>
<circle cx="1246.2" cy="252.1" r="5.3" fill="#c690e2"/>
<circle cx="1253.2" cy="309.7" r="5.3" fill="#c690e2"/>
<circle cx="1260.3" cy="252.1" r="5.3" fill="#c690e2"/>
<circle cx="1267.4" cy="252.1" r="5.3" fill="#c690e2"/>
<circle cx="1274.5" cy="194.5" r="5.3" fill="#c690e2"/>
<circle cx="1281.6" cy="252.1" r="5.3" fill="#c690e2"/>
<circle cx="1288.7" cy="309.7" r="5.3" fill="#c690e2"/>
<circle cx="1295.8" cy="309.7" r="5.3" fill="#c690e2"/>
<circle cx="1302.9" cy="252.1" r="5.3" fill="#c690e2"/>
<circle cx="1310" cy="252.1" r="5.3" fill="#c690e2"/>
<circle cx="1317.1" cy="309.7" r="5.3" fill="#c690e2"/>
<circle cx="1324.1" cy="309.7" r="5.3" fill="#c690e2"/>
<circle cx="1331.2" cy="309.7" r="5.3" fill="#c690e2"/>
<circle cx="1338.3" cy="309.7" r="5.3" fill="#c690e2"/>
<circle cx="1345.4" cy="194.5" r="5.3" fill="#c690e2"/>
<circle cx="1352.5" cy="309.7" r="5.3" fill="#c690e2"/>
<circle cx="1359.6" cy="252.1" r="5.3" fill="#c690e2"/>
<circle cx="1366.7" cy="194.5" r="5.3" fill="#c690e2"/>
<circle cx="1373.8" cy="194.5" r="5.3" fill="#c690e2"/>
<circle cx="1380.9" cy="252.1" r="5.3" fill="#c690e2"/>
<circle cx="1388" cy="309.7" r="5.3" fill="#c690e2"/>
<circle cx="1395" cy="252.1" r="5.3" fill="#c690e2"/>
<circle cx="1402.1" cy="309.7" r="5.3" fill="#c690e2"/>
<circle cx="1409.2" cy="194.5" r="5.3" fill="#c690e2"/>
<circle cx="1416.3" cy="309.7" r="5.3" fill="#c690e2"/>
<circle cx="1423.4" cy="309.7" r="5.3" fill="#c690e2"/>
<circle cx="1430.5" cy="252.1" r="5.3" fill="#c690e2"/>
<circle cx="1437.6" cy="309.7" r="5.3" fill="#c690e2"/>
<circle cx="1444.7" cy="252.1" r="5.3" fill="#c690e2"/>
<circle cx="1451.8" cy="194.5" r="5.3" fill="#c690e2"/>
<circle cx="1458.9" cy="252.1" r="5.3" fill="#c690e2"/>
<circle cx="1466" cy="194.5" r="5.3" fill="#c690e2"/>
<circle cx="1473" cy="309.7" r="5.3" fill="#c690e2"/>
<circle cx="1480.1" cy="309.7" r="5.3" fill="#c690e2"/>
<circle cx="1487.2" cy="252.1" r="5.3" fill="#c690e2"/>
<circle cx="1494.3" cy="194.5" r="5.3" fill="#c690e2"/>
<circle cx="1501.4" cy="252.1" r="5.3" fill="#c690e2"/>
<circle cx="1508.5" cy="309.7" r="5.3" fill="#c690e2"/>
<circle cx="1515.6" cy="309.7" r="5.3" fill="#c690e2"/>
<circle cx="1522.7" cy="194.5" r="5.3" fill="#c690e2"/>
<circle cx="1529.8" cy="309.7" r="5.3" fill="#c690e2"/>
<circle cx="1536.8" cy="309.7" r="5.3" fill="#c690e2"/>
<circle cx="1543.9" cy="194.5" r="5.3" fill="#c690e2"/>
<circle cx="1551" cy="136.9" r="5.3" fill="#c690e2"/>
<circle cx="1558.1" cy="367.3" r="5.3" fill="#c690e2"/>
<circle cx="1565.2" cy="309.7" r="5.3" fill="#c690e2"/>
<circle cx="1579.4" cy="367.3" r="5.3" fill="#c690e2"/>
<circle cx="1586.5" cy="252.1" r="5.3" fill="#c690e2"/>
<circle cx="1593.6" cy="367.3" r="5.3" fill="#c690e2"/>
<circle cx="1600.7" cy="367.3" r="5.3" fill="#c690e2"/>
<circle cx="1607.8" cy="309.7" r="5.3" fill="#c690e2"/>
<circle cx="1614.8" cy="367.3" r="5.3" fill="#c690e2"/>
<circle cx="1629" cy="367.3" r="5.3" fill="#c690e2"/>
<rect x="1170" y="450.5" width="25" height="7" rx="3.5" fill="#e5534b"/>
<text x="1210" y="461" font-size="23" fill="#ccccdc" text-anchor="start" font-weight="normal"  stroke="#ccccdc" stroke-width="0.35">cpu</text>
<rect x="1545" y="450.5" width="25" height="7" rx="3.5" fill="#b97ed9"/>
<text x="1584" y="461" font-size="23" fill="#ccccdc" text-anchor="start" font-weight="normal"  stroke="#ccccdc" stroke-width="0.35">memory</text>
<text x="23" y="541" font-size="25" fill="#ccccdc" text-anchor="start" font-weight="bold" letter-spacing="0.4">client side full page load</text>
<line x1="81" y1="642.4" x2="826" y2="642.4" stroke="#2b2e33" stroke-width="1"/>
<text x="73.5" y="649.4" font-size="23.5" fill="#ccccdc" text-anchor="end" font-weight="normal"  stroke="#ccccdc" stroke-width="0.35">4 s</text>
<line x1="81" y1="708.8" x2="826" y2="708.8" stroke="#2b2e33" stroke-width="1"/>
<text x="73.5" y="715.8" font-size="23.5" fill="#ccccdc" text-anchor="end" font-weight="normal"  stroke="#ccccdc" stroke-width="0.35">3 s</text>
<line x1="81" y1="775.2" x2="826" y2="775.2" stroke="#2b2e33" stroke-width="1"/>
<text x="73.5" y="782.2" font-size="23.5" fill="#ccccdc" text-anchor="end" font-weight="normal"  stroke="#ccccdc" stroke-width="0.35">2 s</text>
<line x1="81" y1="841.6" x2="826" y2="841.6" stroke="#2b2e33" stroke-width="1"/>
<text x="73.5" y="848.6" font-size="23.5" fill="#ccccdc" text-anchor="end" font-weight="normal"  stroke="#ccccdc" stroke-width="0.35">1 s</text>
<line x1="81" y1="908" x2="826" y2="908" stroke="#2b2e33" stroke-width="1"/>
<text x="73.5" y="915" font-size="23.5" fill="#ccccdc" text-anchor="end" font-weight="normal"  stroke="#ccccdc" stroke-width="0.35">0 ms</text>
<line x1="102.8" y1="589" x2="102.8" y2="916" stroke="#2b2e33" stroke-width="1"/>
<text x="102.8" y="942" font-size="23.5" fill="#ccccdc" text-anchor="middle" font-weight="normal"  stroke="#ccccdc" stroke-width="0.35">13:00</text>
<line x1="225.5" y1="589" x2="225.5" y2="916" stroke="#2b2e33" stroke-width="1"/>
<text x="225.5" y="942" font-size="23.5" fill="#ccccdc" text-anchor="middle" font-weight="normal"  stroke="#ccccdc" stroke-width="0.35">13:10</text>
<line x1="348.2" y1="589" x2="348.2" y2="916" stroke="#2b2e33" stroke-width="1"/>
<text x="348.2" y="942" font-size="23.5" fill="#ccccdc" text-anchor="middle" font-weight="normal"  stroke="#ccccdc" stroke-width="0.35">13:20</text>
<line x1="470.9" y1="589" x2="470.9" y2="916" stroke="#2b2e33" stroke-width="1"/>
<text x="470.9" y="942" font-size="23.5" fill="#ccccdc" text-anchor="middle" font-weight="normal"  stroke="#ccccdc" stroke-width="0.35">13:30</text>
<line x1="593.6" y1="589" x2="593.6" y2="916" stroke="#2b2e33" stroke-width="1"/>
<text x="593.6" y="942" font-size="23.5" fill="#ccccdc" text-anchor="middle" font-weight="normal"  stroke="#ccccdc" stroke-width="0.35">13:40</text>
<line x1="716.3" y1="589" x2="716.3" y2="916" stroke="#2b2e33" stroke-width="1"/>
<text x="716.3" y="942" font-size="23.5" fill="#ccccdc" text-anchor="middle" font-weight="normal"  stroke="#ccccdc" stroke-width="0.35">13:50</text>
<rect x="89.8" y="643.9" width="27.6" height="125.8" rx="0.8" fill="#e0465c" stroke="#f0596c" stroke-width="1"/>
<rect x="89.8" y="770.3" width="27.6" height="83" rx="0.8" fill="#e8700f" stroke="#f8801c" stroke-width="1"/>
<rect x="89.8" y="854" width="27.6" height="43.2" rx="0.8" fill="#d6aa3c" stroke="#ecbd43" stroke-width="1"/>
<rect x="89.8" y="897.8" width="27.6" height="9.5" rx="0.8" fill="#e6c77e" stroke="#f3d68c" stroke-width="1"/>
<rect x="138.8" y="698.9" width="27.6" height="101.9" rx="0.8" fill="#e0465c" stroke="#f0596c" stroke-width="1"/>
<rect x="138.8" y="801.4" width="27.6" height="67.8" rx="0.8" fill="#e8700f" stroke="#f8801c" stroke-width="1"/>
<rect x="138.8" y="869.8" width="27.6" height="31.4" rx="0.8" fill="#d6aa3c" stroke="#ecbd43" stroke-width="1"/>
<rect x="138.8" y="901.8" width="27.6" height="5.5" rx="0.8" fill="#e6c77e" stroke="#f3d68c" stroke-width="1"/>
<rect x="187.8" y="652.3" width="27.6" height="114.7" rx="0.8" fill="#e0465c" stroke="#f0596c" stroke-width="1"/>
<rect x="187.8" y="767.6" width="27.6" height="84.7" rx="0.8" fill="#e8700f" stroke="#f8801c" stroke-width="1"/>
<rect x="187.8" y="852.9" width="27.6" height="43.2" rx="0.8" fill="#d6aa3c" stroke="#ecbd43" stroke-width="1"/>
<rect x="187.8" y="896.8" width="27.6" height="10.5" rx="0.8" fill="#e6c77e" stroke="#f3d68c" stroke-width="1"/>
<rect x="236.8" y="668.5" width="27.6" height="108" rx="0.8" fill="#e0465c" stroke="#f0596c" stroke-width="1"/>
<rect x="236.8" y="777.1" width="27.6" height="76.9" rx="0.8" fill="#e8700f" stroke="#f8801c" stroke-width="1"/>
<rect x="236.8" y="854.6" width="27.6" height="41.5" rx="0.8" fill="#d6aa3c" stroke="#ecbd43" stroke-width="1"/>
<rect x="236.8" y="896.8" width="27.6" height="10.5" rx="0.8" fill="#e6c77e" stroke="#f3d68c" stroke-width="1"/>
<rect x="285.8" y="664.1" width="27.6" height="116.7" rx="0.8" fill="#e0465c" stroke="#f0596c" stroke-width="1"/>
<rect x="285.8" y="781.5" width="27.6" height="74.2" rx="0.8" fill="#e8700f" stroke="#f8801c" stroke-width="1"/>
<rect x="285.8" y="856.3" width="27.6" height="39.9" rx="0.8" fill="#d6aa3c" stroke="#ecbd43" stroke-width="1"/>
<rect x="285.8" y="896.8" width="27.6" height="10.5" rx="0.8" fill="#e6c77e" stroke="#f3d68c" stroke-width="1"/>
<rect x="334.8" y="638.8" width="27.6" height="124.1" rx="0.8" fill="#e0465c" stroke="#f0596c" stroke-width="1"/>
<rect x="334.8" y="763.6" width="27.6" height="81.3" rx="0.8" fill="#e8700f" stroke="#f8801c" stroke-width="1"/>
<rect x="334.8" y="845.5" width="27.6" height="45.6" rx="0.8" fill="#d6aa3c" stroke="#ecbd43" stroke-width="1"/>
<rect x="334.8" y="891.7" width="27.6" height="15.6" rx="0.8" fill="#e6c77e" stroke="#f3d68c" stroke-width="1"/>
<rect x="383.8" y="623" width="27.6" height="130.6" rx="0.8" fill="#e0465c" stroke="#f0596c" stroke-width="1"/>
<rect x="383.8" y="754.2" width="27.6" height="91.4" rx="0.8" fill="#e8700f" stroke="#f8801c" stroke-width="1"/>
<rect x="383.8" y="846.2" width="27.6" height="45.6" rx="0.8" fill="#d6aa3c" stroke="#ecbd43" stroke-width="1"/>
<rect x="383.8" y="892.4" width="27.6" height="14.9" rx="0.8" fill="#e6c77e" stroke="#f3d68c" stroke-width="1"/>
<rect x="432.8" y="654.4" width="27.6" height="118.8" rx="0.8" fill="#e0465c" stroke="#f0596c" stroke-width="1"/>
<rect x="432.8" y="773.7" width="27.6" height="81" rx="0.8" fill="#e8700f" stroke="#f8801c" stroke-width="1"/>
<rect x="432.8" y="855.3" width="27.6" height="41.5" rx="0.8" fill="#d6aa3c" stroke="#ecbd43" stroke-width="1"/>
<rect x="432.8" y="897.4" width="27.6" height="9.9" rx="0.8" fill="#e6c77e" stroke="#f3d68c" stroke-width="1"/>
<rect x="481.8" y="623.7" width="27.6" height="134.3" rx="0.8" fill="#e0465c" stroke="#f0596c" stroke-width="1"/>
<rect x="481.8" y="758.5" width="27.6" height="89.4" rx="0.8" fill="#e8700f" stroke="#f8801c" stroke-width="1"/>
<rect x="481.8" y="848.6" width="27.6" height="44.9" rx="0.8" fill="#d6aa3c" stroke="#ecbd43" stroke-width="1"/>
<rect x="481.8" y="894.1" width="27.6" height="13.2" rx="0.8" fill="#e6c77e" stroke="#f3d68c" stroke-width="1"/>
<rect x="530.8" y="672.9" width="27.6" height="105.3" rx="0.8" fill="#e0465c" stroke="#f0596c" stroke-width="1"/>
<rect x="530.8" y="778.8" width="27.6" height="76.9" rx="0.8" fill="#e8700f" stroke="#f8801c" stroke-width="1"/>
<rect x="530.8" y="856.3" width="27.6" height="39.9" rx="0.8" fill="#d6aa3c" stroke="#ecbd43" stroke-width="1"/>
<rect x="530.8" y="896.8" width="27.6" height="10.5" rx="0.8" fill="#e6c77e" stroke="#f3d68c" stroke-width="1"/>
<rect x="579.8" y="636.5" width="27.6" height="117.1" rx="0.8" fill="#e0465c" stroke="#f0596c" stroke-width="1"/>
<rect x="579.8" y="754.2" width="27.6" height="90.8" rx="0.8" fill="#e8700f" stroke="#f8801c" stroke-width="1"/>
<rect x="579.8" y="845.5" width="27.6" height="47.3" rx="0.8" fill="#d6aa3c" stroke="#ecbd43" stroke-width="1"/>
<rect x="579.8" y="893.4" width="27.6" height="13.9" rx="0.8" fill="#e6c77e" stroke="#f3d68c" stroke-width="1"/>
<rect x="628.8" y="653.3" width="27.6" height="120.8" rx="0.8" fill="#e0465c" stroke="#f0596c" stroke-width="1"/>
<rect x="628.8" y="774.7" width="27.6" height="76.6" rx="0.8" fill="#e8700f" stroke="#f8801c" stroke-width="1"/>
<rect x="628.8" y="851.9" width="27.6" height="42.6" rx="0.8" fill="#d6aa3c" stroke="#ecbd43" stroke-width="1"/>
<rect x="628.8" y="895.1" width="27.6" height="12.2" rx="0.8" fill="#e6c77e" stroke="#f3d68c" stroke-width="1"/>
<rect x="677.8" y="623.7" width="27.6" height="134.3" rx="0.8" fill="#e0465c" stroke="#f0596c" stroke-width="1"/>
<rect x="677.8" y="758.5" width="27.6" height="87.7" rx="0.8" fill="#e8700f" stroke="#f8801c" stroke-width="1"/>
<rect x="677.8" y="846.9" width="27.6" height="46.6" rx="0.8" fill="#d6aa3c" stroke="#ecbd43" stroke-width="1"/>
<rect x="677.8" y="894.1" width="27.6" height="13.2" rx="0.8" fill="#e6c77e" stroke="#f3d68c" stroke-width="1"/>
<rect x="726.8" y="634.5" width="27.6" height="117.7" rx="0.8" fill="#e0465c" stroke="#f0596c" stroke-width="1"/>
<rect x="726.8" y="752.8" width="27.6" height="91.8" rx="0.8" fill="#e8700f" stroke="#f8801c" stroke-width="1"/>
<rect x="726.8" y="845.2" width="27.6" height="46.6" rx="0.8" fill="#d6aa3c" stroke="#ecbd43" stroke-width="1"/>
<rect x="726.8" y="892.4" width="27.6" height="14.9" rx="0.8" fill="#e6c77e" stroke="#f3d68c" stroke-width="1"/>
<rect x="775.8" y="637.2" width="27.6" height="119.8" rx="0.8" fill="#e0465c" stroke="#f0596c" stroke-width="1"/>
<rect x="775.8" y="757.5" width="27.6" height="90.4" rx="0.8" fill="#e8700f" stroke="#f8801c" stroke-width="1"/>
<rect x="775.8" y="848.6" width="27.6" height="48" rx="0.8" fill="#d6aa3c" stroke="#ecbd43" stroke-width="1"/>
<rect x="775.8" y="897.1" width="27.6" height="10.2" rx="0.8" fill="#e6c77e" stroke="#f3d68c" stroke-width="1"/>
<text x="1103" y="602" font-size="22.5" fill="#6e9fff" text-anchor="end" font-weight="bold" letter-spacing="0.3">Mean</text>
<line x1="841.5" y1="615.8" x2="1116.3" y2="615.8" stroke="#26292e" stroke-width="2"/>
<line x1="841.5" y1="657.9" x2="1116.3" y2="657.9" stroke="#26292e" stroke-width="2"/>
<line x1="841.5" y1="700.7" x2="1116.3" y2="700.7" stroke="#26292e" stroke-width="2"/>
<line x1="841.5" y1="743.5" x2="1116.3" y2="743.5" stroke="#26292e" stroke-width="2"/>
<line x1="841.5" y1="786" x2="1116.3" y2="786" stroke="#26292e" stroke-width="2"/>
<line x1="841.5" y1="828.2" x2="1116.3" y2="828.2" stroke="#26292e" stroke-width="2"/>
<rect x="855" y="633.8" width="25" height="7" rx="3.5" fill="#fbe3cc"/>
<text x="895.5" y="645.3" font-size="23" fill="#ccccdc" text-anchor="start" font-weight="normal"  stroke="#ccccdc" stroke-width="0.35">upper_25</text>
<text x="1103.5" y="645.3" font-size="23" fill="#ccccdc" text-anchor="end" font-weight="normal"  stroke="#ccccdc" stroke-width="0.35">2.39 ms</text>
<rect x="855" y="676.2" width="25" height="7" rx="3.5" fill="#f3cc6e"/>
<text x="895.5" y="687.7" font-size="23" fill="#ccccdc" text-anchor="start" font-weight="normal"  stroke="#ccccdc" stroke-width="0.35">upper_50</text>
<text x="1103.5" y="687.7" font-size="23" fill="#ccccdc" text-anchor="end" font-weight="normal"  stroke="#ccccdc" stroke-width="0.35">186 ms</text>
<rect x="855" y="718.6" width="25" height="7" rx="3.5" fill="#e5b638"/>
<text x="895.5" y="730.1" font-size="23" fill="#ccccdc" text-anchor="start" font-weight="normal"  stroke="#ccccdc" stroke-width="0.35">upper_75</text>
<text x="1103.5" y="730.1" font-size="23" fill="#ccccdc" text-anchor="end" font-weight="normal"  stroke="#ccccdc" stroke-width="0.35">649 ms</text>
<rect x="855" y="761" width="25" height="7" rx="3.5" fill="#f9740d"/>
<text x="895.5" y="772.5" font-size="23" fill="#ccccdc" text-anchor="start" font-weight="normal"  stroke="#ccccdc" stroke-width="0.35">upper_90</text>
<text x="1103.5" y="772.5" font-size="23" fill="#ccccdc" text-anchor="end" font-weight="normal"  stroke="#ccccdc" stroke-width="0.35">1.25 s</text>
<rect x="855" y="803.4" width="25" height="7" rx="3.5" fill="#ef4560"/>
<text x="895.5" y="814.9" font-size="23" fill="#ccccdc" text-anchor="start" font-weight="normal"  stroke="#ccccdc" stroke-width="0.35">upper_95</text>
<text x="1103.5" y="814.9" font-size="23" fill="#ccccdc" text-anchor="end" font-weight="normal"  stroke="#ccccdc" stroke-width="0.35">1.81 s</text>
<text x="1163" y="541" font-size="25" fill="#ccccdc" text-anchor="start" font-weight="bold" letter-spacing="0.4">logins</text>
<rect x="1658" y="502" width="42.5" height="58" rx="4" fill="#2f3137"/>
<circle cx="1679" cy="523" r="2.3" fill="#b9bac4"/>
<circle cx="1679" cy="531.5" r="2.3" fill="#b9bac4"/>
<circle cx="1679" cy="540" r="2.3" fill="#b9bac4"/>
<line x1="1200" y1="621.3" x2="1672" y2="621.3" stroke="#2b2e33" stroke-width="1"/>
<text x="1192" y="628.3" font-size="23.5" fill="#ccccdc" text-anchor="end" font-weight="normal"  stroke="#ccccdc" stroke-width="0.35">60</text>
<line x1="1200" y1="702.8" x2="1672" y2="702.8" stroke="#2b2e33" stroke-width="1"/>
<text x="1192" y="709.8" font-size="23.5" fill="#ccccdc" text-anchor="end" font-weight="normal"  stroke="#ccccdc" stroke-width="0.35">40</text>
<line x1="1200" y1="784.3" x2="1672" y2="784.3" stroke="#2b2e33" stroke-width="1"/>
<text x="1192" y="791.3" font-size="23.5" fill="#ccccdc" text-anchor="end" font-weight="normal"  stroke="#ccccdc" stroke-width="0.35">20</text>
<line x1="1200" y1="865.8" x2="1672" y2="865.8" stroke="#2b2e33" stroke-width="1"/>
<text x="1192" y="872.8" font-size="23.5" fill="#ccccdc" text-anchor="end" font-weight="normal"  stroke="#ccccdc" stroke-width="0.35">0</text>
<line x1="1217.3" y1="588" x2="1217.3" y2="872" stroke="#2b2e33" stroke-width="1"/>
<text x="1217.3" y="898.5" font-size="23.5" fill="#ccccdc" text-anchor="middle" font-weight="normal"  stroke="#ccccdc" stroke-width="0.35">13:00</text>
<line x1="1333.1" y1="588" x2="1333.1" y2="872" stroke="#2b2e33" stroke-width="1"/>
<text x="1333.1" y="898.5" font-size="23.5" fill="#ccccdc" text-anchor="middle" font-weight="normal"  stroke="#ccccdc" stroke-width="0.35">13:15</text>
<line x1="1448.9" y1="588" x2="1448.9" y2="872" stroke="#2b2e33" stroke-width="1"/>
<text x="1448.9" y="898.5" font-size="23.5" fill="#ccccdc" text-anchor="middle" font-weight="normal"  stroke="#ccccdc" stroke-width="0.35">13:30</text>
<line x1="1564.7" y1="588" x2="1564.7" y2="872" stroke="#2b2e33" stroke-width="1"/>
<text x="1564.7" y="898.5" font-size="23.5" fill="#ccccdc" text-anchor="middle" font-weight="normal"  stroke="#ccccdc" stroke-width="0.35">13:45</text>
<polygon points="1208.7,658.4 1210.4,655.1 1212.1,631.3 1213.9,640 1215.6,633.6 1217.3,631 1219,639.7 1220.7,635.1 1222.5,632.6 1224.2,629.3 1225.9,632.9 1227.6,636.1 1229.3,634 1231.1,638.7 1232.8,636.1 1234.5,621.4 1236.2,642.5 1237.9,634.1 1239.7,634 1241.4,625 1243.1,644.7 1244.8,628.4 1246.5,649.1 1248.3,651.6 1250,659.4 1251.7,653.4 1253.4,661.7 1255.1,651.9 1256.9,649.8 1258.6,658.5 1260.3,657.5 1262,696.5 1263.7,755.8 1265.5,761.5 1267.2,753.6 1268.9,754 1270.6,759.7 1272.3,760.2 1274,750.4 1275.8,758.2 1277.5,754.8 1279.2,759.2 1280.9,760.3 1282.6,756.9 1284.4,685.2 1286.1,633.6 1287.8,630.2 1289.5,640.8 1291.2,635.8 1293,631.5 1294.7,625.3 1296.4,628.9 1298.1,640.4 1299.8,628.9 1301.6,626.5 1303.3,623 1305,635.6 1306.7,627.2 1308.4,633.9 1310.2,642 1311.9,631.4 1313.6,635.4 1315.3,629.6 1317,636.1 1318.8,626.6 1320.5,632.2 1322.2,638.1 1323.9,638.7 1325.6,649.7 1327.4,649.9 1329.1,643.6 1330.8,635.1 1332.5,627.4 1334.2,638.5 1336,647.6 1337.7,644.6 1339.4,650.9 1341.1,648.7 1342.8,643.7 1344.6,633.4 1346.3,640.2 1348,632.8 1349.7,640.9 1351.4,640.4 1353.2,650.7 1354.9,643.8 1356.6,646.1 1358.3,641.4 1360,649 1361.8,643.7 1363.5,646 1365.2,637.4 1366.9,645.4 1368.6,660 1370.4,645.5 1372.1,628.5 1373.8,646.5 1375.5,653.5 1377.2,640.5 1379,637.5 1380.7,641.3 1382.4,643.8 1384.1,633.1 1385.8,633.5 1387.5,663.1 1389.3,641.4 1391,646.5 1392.7,643 1394.4,648.8 1396.1,626.3 1397.9,648.2 1399.6,658.8 1401.3,645.2 1403,650.5 1404.7,643.8 1406.5,643.7 1408.2,645 1409.9,643.8 1411.6,646.1 1413.3,643.9 1415.1,639.4 1416.8,641.9 1418.5,652.9 1420.2,643.4 1421.9,625.8 1423.7,636.9 1425.4,651.9 1427.1,641.9 1428.8,646.2 1430.5,629.3 1432.3,651.4 1434,638.6 1435.7,649.5 1437.4,632.2 1439.1,645.7 1440.9,645.1 1442.6,643 1444.3,637.7 1446,641.2 1447.7,651.2 1449.5,632.1 1451.2,645.3 1452.9,641.9 1454.6,634.7 1456.3,631 1458.1,645.9 1459.8,630.5 1461.5,633.5 1463.2,642.2 1464.9,629.1 1466.7,625.1 1468.4,652.1 1470.1,640.2 1471.8,649.8 1473.5,627.7 1475.3,645.6 1477,643.8 1478.7,624.9 1480.4,624.8 1482.1,649.4 1483.9,645.8 1485.6,641.8 1487.3,644.7 1489,640.8 1490.7,641.4 1492.5,645.3 1494.2,642.7 1495.9,646.3 1497.6,633.2 1499.3,643.6 1501,648.8 1502.8,647.1 1504.5,649.5 1506.2,648.4 1507.9,638.8 1509.6,655.6 1511.4,633.6 1513.1,640.8 1514.8,639.8 1516.5,645.2 1518.2,643.8 1520,647 1521.7,643.7 1523.4,640 1525.1,650.4 1526.8,654 1528.6,632.1 1530.3,642.7 1532,643.3 1533.7,641.6 1535.4,637.4 1537.2,644.8 1538.9,633.8 1540.6,630.8 1542.3,645.4 1544,634.2 1545.8,638.5 1547.5,642.8 1549.2,656 1550.9,645.4 1552.6,637.1 1554.4,656.8 1556.1,681.8 1557.8,683.2 1559.5,678.8 1561.2,682.9 1563,686.3 1564.7,692 1566.4,682.7 1568.1,681.2 1569.8,683.6 1571.6,666.9 1573.3,687.2 1575,689.5 1576.7,668 1578.4,672.2 1580.2,674.2 1581.9,655.6 1583.6,642.2 1585.3,656.6 1587,653.5 1588.8,635.9 1590.5,635.6 1592.2,636.1 1593.9,637.2 1595.6,651 1597.4,636.5 1599.1,622.3 1600.8,645.3 1602.5,632.7 1604.2,631.1 1606,637.4 1607.7,618.1 1609.4,617.8 1611.1,624.5 1612.8,628.2 1614.5,629.1 1616.3,629.5 1618,636 1619.7,628.6 1621.4,632.6 1623.1,629.8 1624.9,637.9 1626.6,622.3 1628.3,617.1 1630,622.7 1631.7,619 1633.5,634.7 1635.2,622 1636.9,624.9 1638.6,645.2 1640.3,617.2 1642.1,630.8 1643.8,638.1 1645.5,628.1 1647.2,632 1648.9,629.1 1650.7,625.3 1652.4,624.6 1654.1,626.1 1655.8,628.5 1657.5,630.3 1659.3,625.1 1661,609 1662.7,614.7 1664.4,626.3 1666.1,619.6 1667.9,625.1 1669.6,625.1 1671.3,618.4 1671.3,866 1208.7,866" fill="#6c3c3b"/>
<clipPath id="dipc"><rect x="1262" y="560" width="23" height="310"/></clipPath>
<polygon clip-path="url(#dipc)" points="1208.7,658.4 1210.4,655.1 1212.1,631.3 1213.9,640 1215.6,633.6 1217.3,631 1219,639.7 1220.7,635.1 1222.5,632.6 1224.2,629.3 1225.9,632.9 1227.6,636.1 1229.3,634 1231.1,638.7 1232.8,636.1 1234.5,621.4 1236.2,642.5 1237.9,634.1 1239.7,634 1241.4,625 1243.1,644.7 1244.8,628.4 1246.5,649.1 1248.3,651.6 1250,659.4 1251.7,653.4 1253.4,661.7 1255.1,651.9 1256.9,649.8 1258.6,658.5 1260.3,657.5 1262,696.5 1263.7,755.8 1265.5,761.5 1267.2,753.6 1268.9,754 1270.6,759.7 1272.3,760.2 1274,750.4 1275.8,758.2 1277.5,754.8 1279.2,759.2 1280.9,760.3 1282.6,756.9 1284.4,685.2 1286.1,633.6 1287.8,630.2 1289.5,640.8 1291.2,635.8 1293,631.5 1294.7,625.3 1296.4,628.9 1298.1,640.4 1299.8,628.9 1301.6,626.5 1303.3,623 1305,635.6 1306.7,627.2 1308.4,633.9 1310.2,642 1311.9,631.4 1313.6,635.4 1315.3,629.6 1317,636.1 1318.8,626.6 1320.5,632.2 1322.2,638.1 1323.9,638.7 1325.6,649.7 1327.4,649.9 1329.1,643.6 1330.8,635.1 1332.5,627.4 1334.2,638.5 1336,647.6 1337.7,644.6 1339.4,650.9 1341.1,648.7 1342.8,643.7 1344.6,633.4 1346.3,640.2 1348,632.8 1349.7,640.9 1351.4,640.4 1353.2,650.7 1354.9,643.8 1356.6,646.1 1358.3,641.4 1360,649 1361.8,643.7 1363.5,646 1365.2,637.4 1366.9,645.4 1368.6,660 1370.4,645.5 1372.1,628.5 1373.8,646.5 1375.5,653.5 1377.2,640.5 1379,637.5 1380.7,641.3 1382.4,643.8 1384.1,633.1 1385.8,633.5 1387.5,663.1 1389.3,641.4 1391,646.5 1392.7,643 1394.4,648.8 1396.1,626.3 1397.9,648.2 1399.6,658.8 1401.3,645.2 1403,650.5 1404.7,643.8 1406.5,643.7 1408.2,645 1409.9,643.8 1411.6,646.1 1413.3,643.9 1415.1,639.4 1416.8,641.9 1418.5,652.9 1420.2,643.4 1421.9,625.8 1423.7,636.9 1425.4,651.9 1427.1,641.9 1428.8,646.2 1430.5,629.3 1432.3,651.4 1434,638.6 1435.7,649.5 1437.4,632.2 1439.1,645.7 1440.9,645.1 1442.6,643 1444.3,637.7 1446,641.2 1447.7,651.2 1449.5,632.1 1451.2,645.3 1452.9,641.9 1454.6,634.7 1456.3,631 1458.1,645.9 1459.8,630.5 1461.5,633.5 1463.2,642.2 1464.9,629.1 1466.7,625.1 1468.4,652.1 1470.1,640.2 1471.8,649.8 1473.5,627.7 1475.3,645.6 1477,643.8 1478.7,624.9 1480.4,624.8 1482.1,649.4 1483.9,645.8 1485.6,641.8 1487.3,644.7 1489,640.8 1490.7,641.4 1492.5,645.3 1494.2,642.7 1495.9,646.3 1497.6,633.2 1499.3,643.6 1501,648.8 1502.8,647.1 1504.5,649.5 1506.2,648.4 1507.9,638.8 1509.6,655.6 1511.4,633.6 1513.1,640.8 1514.8,639.8 1516.5,645.2 1518.2,643.8 1520,647 1521.7,643.7 1523.4,640 1525.1,650.4 1526.8,654 1528.6,632.1 1530.3,642.7 1532,643.3 1533.7,641.6 1535.4,637.4 1537.2,644.8 1538.9,633.8 1540.6,630.8 1542.3,645.4 1544,634.2 1545.8,638.5 1547.5,642.8 1549.2,656 1550.9,645.4 1552.6,637.1 1554.4,656.8 1556.1,681.8 1557.8,683.2 1559.5,678.8 1561.2,682.9 1563,686.3 1564.7,692 1566.4,682.7 1568.1,681.2 1569.8,683.6 1571.6,666.9 1573.3,687.2 1575,689.5 1576.7,668 1578.4,672.2 1580.2,674.2 1581.9,655.6 1583.6,642.2 1585.3,656.6 1587,653.5 1588.8,635.9 1590.5,635.6 1592.2,636.1 1593.9,637.2 1595.6,651 1597.4,636.5 1599.1,622.3 1600.8,645.3 1602.5,632.7 1604.2,631.1 1606,637.4 1607.7,618.1 1609.4,617.8 1611.1,624.5 1612.8,628.2 1614.5,629.1 1616.3,629.5 1618,636 1619.7,628.6 1621.4,632.6 1623.1,629.8 1624.9,637.9 1626.6,622.3 1628.3,617.1 1630,622.7 1631.7,619 1633.5,634.7 1635.2,622 1636.9,624.9 1638.6,645.2 1640.3,617.2 1642.1,630.8 1643.8,638.1 1645.5,628.1 1647.2,632 1648.9,629.1 1650.7,625.3 1652.4,624.6 1654.1,626.1 1655.8,628.5 1657.5,630.3 1659.3,625.1 1661,609 1662.7,614.7 1664.4,626.3 1666.1,619.6 1667.9,625.1 1669.6,625.1 1671.3,618.4 1671.3,866 1208.7,866" fill="#6d2233"/>
<polygon points="1208.7,763.3 1210.4,756.9 1212.1,753.3 1213.9,753.7 1215.6,751.6 1217.3,745.2 1219,749.9 1220.7,751.9 1222.5,752.6 1224.2,755.9 1225.9,753 1227.6,753.3 1229.3,756 1231.1,752.9 1232.8,750.1 1234.5,753.7 1236.2,750.9 1237.9,744.8 1239.7,751.9 1241.4,754.8 1243.1,755.1 1244.8,755.8 1246.5,755.8 1248.3,756.4 1250,759.8 1251.7,752.5 1253.4,753.4 1255.1,749 1256.9,759.2 1258.6,761.8 1260.3,762.1 1262,834.4 1263.7,866 1265.5,866 1267.2,866 1268.9,866 1270.6,866 1272.3,866 1274,866 1275.8,866 1277.5,866 1279.2,866 1280.9,866 1282.6,866 1284.4,854 1286.1,800.3 1287.8,746.3 1289.5,735.8 1291.2,747 1293,723.5 1294.7,745.7 1296.4,745.1 1298.1,734.3 1299.8,739.4 1301.6,742.5 1303.3,744 1305,741.6 1306.7,737.5 1308.4,755.4 1310.2,737.5 1311.9,746.2 1313.6,751.6 1315.3,744.9 1317,745.7 1318.8,746.4 1320.5,749.5 1322.2,744.8 1323.9,748.6 1325.6,757.8 1327.4,747.1 1329.1,755.5 1330.8,755.2 1332.5,765.5 1334.2,747.2 1336,762.7 1337.7,764.7 1339.4,756.8 1341.1,751.5 1342.8,756.9 1344.6,766.5 1346.3,751.2 1348,761.8 1349.7,752 1351.4,757.9 1353.2,756.1 1354.9,759.8 1356.6,743.1 1358.3,759.9 1360,756.9 1361.8,755.9 1363.5,765 1365.2,749.4 1366.9,758.5 1368.6,757.7 1370.4,760.4 1372.1,750.3 1373.8,763 1375.5,759.4 1377.2,756.7 1379,758.6 1380.7,760.3 1382.4,763.3 1384.1,753.6 1385.8,755.5 1387.5,756.3 1389.3,755.3 1391,762.1 1392.7,760.5 1394.4,753.5 1396.1,754.6 1397.9,765.1 1399.6,742.7 1401.3,758.5 1403,754.9 1404.7,767.8 1406.5,766.7 1408.2,761.3 1409.9,762.7 1411.6,757.8 1413.3,769 1415.1,757.8 1416.8,763.5 1418.5,745.2 1420.2,756.5 1421.9,751.9 1423.7,749 1425.4,758.1 1427.1,756.4 1428.8,764.4 1430.5,752.5 1432.3,757.3 1434,757.6 1435.7,759 1437.4,750.9 1439.1,767.1 1440.9,757.6 1442.6,770.2 1444.3,754.7 1446,754.1 1447.7,755.1 1449.5,744.1 1451.2,744.1 1452.9,748 1454.6,761.6 1456.3,760.6 1458.1,741.7 1459.8,754.4 1461.5,749.6 1463.2,755.6 1464.9,757.1 1466.7,756.8 1468.4,755.6 1470.1,759.8 1471.8,756.1 1473.5,755.3 1475.3,755.6 1477,753.4 1478.7,761.7 1480.4,759.7 1482.1,752.5 1483.9,755.8 1485.6,741.2 1487.3,760.3 1489,754.8 1490.7,755.1 1492.5,758.3 1494.2,754 1495.9,750.3 1497.6,766.6 1499.3,753.2 1501,749 1502.8,757.4 1504.5,753.5 1506.2,759.3 1507.9,758.4 1509.6,752.9 1511.4,759.7 1513.1,756.1 1514.8,764.2 1516.5,753.8 1518.2,757.4 1520,745.9 1521.7,759 1523.4,766.5 1525.1,760.6 1526.8,750.2 1528.6,762.7 1530.3,749.2 1532,735.6 1533.7,766.5 1535.4,745.9 1537.2,764.4 1538.9,762.2 1540.6,756.2 1542.3,755 1544,760.1 1545.8,739.3 1547.5,754.6 1549.2,755.6 1550.9,756.5 1552.6,762.6 1554.4,756.1 1556.1,760.1 1557.8,750.3 1559.5,750.3 1561.2,762.3 1563,759.5 1564.7,758.3 1566.4,763.2 1568.1,757.9 1569.8,759 1571.6,760.2 1573.3,733.7 1575,746.9 1576.7,764.7 1578.4,741.9 1580.2,753 1581.9,765.4 1583.6,757.3 1585.3,766.5 1587,751.3 1588.8,757.2 1590.5,753.6 1592.2,758.4 1593.9,757.2 1595.6,760.2 1597.4,758.2 1599.1,759.3 1600.8,765.5 1602.5,760.2 1604.2,765.2 1606,759.5 1607.7,742 1609.4,758.3 1611.1,745.9 1612.8,764.3 1614.5,759.3 1616.3,757.6 1618,762.9 1619.7,753.2 1621.4,762 1623.1,746.8 1624.9,760.9 1626.6,749.3 1628.3,756.6 1630,750 1631.7,753.4 1633.5,758.3 1635.2,756.3 1636.9,764.6 1638.6,734.1 1640.3,766.5 1642.1,754.5 1643.8,755.1 1645.5,752.5 1647.2,751.6 1648.9,760.8 1650.7,748.3 1652.4,753.2 1654.1,751.4 1655.8,745.7 1657.5,752.8 1659.3,759.4 1661,755.3 1662.7,747.9 1664.4,753.7 1666.1,749.1 1667.9,743.4 1669.6,741.5 1671.3,744.2 1671.3,866 1208.7,866" fill="#2b4e5e"/>
<polyline points="1208.7,658.4 1210.4,655.1 1212.1,631.3 1213.9,640 1215.6,633.6 1217.3,631 1219,639.7 1220.7,635.1 1222.5,632.6 1224.2,629.3 1225.9,632.9 1227.6,636.1 1229.3,634 1231.1,638.7 1232.8,636.1 1234.5,621.4 1236.2,642.5 1237.9,634.1 1239.7,634 1241.4,625 1243.1,644.7 1244.8,628.4 1246.5,649.1 1248.3,651.6 1250,659.4 1251.7,653.4 1253.4,661.7 1255.1,651.9 1256.9,649.8 1258.6,658.5 1260.3,657.5 1262,696.5 1263.7,755.8 1265.5,761.5 1267.2,753.6 1268.9,754 1270.6,759.7 1272.3,760.2 1274,750.4 1275.8,758.2 1277.5,754.8 1279.2,759.2 1280.9,760.3 1282.6,756.9 1284.4,685.2 1286.1,633.6 1287.8,630.2 1289.5,640.8 1291.2,635.8 1293,631.5 1294.7,625.3 1296.4,628.9 1298.1,640.4 1299.8,628.9 1301.6,626.5 1303.3,623 1305,635.6 1306.7,627.2 1308.4,633.9 1310.2,642 1311.9,631.4 1313.6,635.4 1315.3,629.6 1317,636.1 1318.8,626.6 1320.5,632.2 1322.2,638.1 1323.9,638.7 1325.6,649.7 1327.4,649.9 1329.1,643.6 1330.8,635.1 1332.5,627.4 1334.2,638.5 1336,647.6 1337.7,644.6 1339.4,650.9 1341.1,648.7 1342.8,643.7 1344.6,633.4 1346.3,640.2 1348,632.8 1349.7,640.9 1351.4,640.4 1353.2,650.7 1354.9,643.8 1356.6,646.1 1358.3,641.4 1360,649 1361.8,643.7 1363.5,646 1365.2,637.4 1366.9,645.4 1368.6,660 1370.4,645.5 1372.1,628.5 1373.8,646.5 1375.5,653.5 1377.2,640.5 1379,637.5 1380.7,641.3 1382.4,643.8 1384.1,633.1 1385.8,633.5 1387.5,663.1 1389.3,641.4 1391,646.5 1392.7,643 1394.4,648.8 1396.1,626.3 1397.9,648.2 1399.6,658.8 1401.3,645.2 1403,650.5 1404.7,643.8 1406.5,643.7 1408.2,645 1409.9,643.8 1411.6,646.1 1413.3,643.9 1415.1,639.4 1416.8,641.9 1418.5,652.9 1420.2,643.4 1421.9,625.8 1423.7,636.9 1425.4,651.9 1427.1,641.9 1428.8,646.2 1430.5,629.3 1432.3,651.4 1434,638.6 1435.7,649.5 1437.4,632.2 1439.1,645.7 1440.9,645.1 1442.6,643 1444.3,637.7 1446,641.2 1447.7,651.2 1449.5,632.1 1451.2,645.3 1452.9,641.9 1454.6,634.7 1456.3,631 1458.1,645.9 1459.8,630.5 1461.5,633.5 1463.2,642.2 1464.9,629.1 1466.7,625.1 1468.4,652.1 1470.1,640.2 1471.8,649.8 1473.5,627.7 1475.3,645.6 1477,643.8 1478.7,624.9 1480.4,624.8 1482.1,649.4 1483.9,645.8 1485.6,641.8 1487.3,644.7 1489,640.8 1490.7,641.4 1492.5,645.3 1494.2,642.7 1495.9,646.3 1497.6,633.2 1499.3,643.6 1501,648.8 1502.8,647.1 1504.5,649.5 1506.2,648.4 1507.9,638.8 1509.6,655.6 1511.4,633.6 1513.1,640.8 1514.8,639.8 1516.5,645.2 1518.2,643.8 1520,647 1521.7,643.7 1523.4,640 1525.1,650.4 1526.8,654 1528.6,632.1 1530.3,642.7 1532,643.3 1533.7,641.6 1535.4,637.4 1537.2,644.8 1538.9,633.8 1540.6,630.8 1542.3,645.4 1544,634.2 1545.8,638.5 1547.5,642.8 1549.2,656 1550.9,645.4 1552.6,637.1 1554.4,656.8 1556.1,681.8 1557.8,683.2 1559.5,678.8 1561.2,682.9 1563,686.3 1564.7,692 1566.4,682.7 1568.1,681.2 1569.8,683.6 1571.6,666.9 1573.3,687.2 1575,689.5 1576.7,668 1578.4,672.2 1580.2,674.2 1581.9,655.6 1583.6,642.2 1585.3,656.6 1587,653.5 1588.8,635.9 1590.5,635.6 1592.2,636.1 1593.9,637.2 1595.6,651 1597.4,636.5 1599.1,622.3 1600.8,645.3 1602.5,632.7 1604.2,631.1 1606,637.4 1607.7,618.1 1609.4,617.8 1611.1,624.5 1612.8,628.2 1614.5,629.1 1616.3,629.5 1618,636 1619.7,628.6 1621.4,632.6 1623.1,629.8 1624.9,637.9 1626.6,622.3 1628.3,617.1 1630,622.7 1631.7,619 1633.5,634.7 1635.2,622 1636.9,624.9 1638.6,645.2 1640.3,617.2 1642.1,630.8 1643.8,638.1 1645.5,628.1 1647.2,632 1648.9,629.1 1650.7,625.3 1652.4,624.6 1654.1,626.1 1655.8,628.5 1657.5,630.3 1659.3,625.1 1661,609 1662.7,614.7 1664.4,626.3 1666.1,619.6 1667.9,625.1 1669.6,625.1 1671.3,618.4" fill="none" stroke="#f05a47" stroke-width="2" stroke-linejoin="round"/>
<polyline points="1208.7,763.3 1210.4,756.9 1212.1,753.3 1213.9,753.7 1215.6,751.6 1217.3,745.2 1219,749.9 1220.7,751.9 1222.5,752.6 1224.2,755.9 1225.9,753 1227.6,753.3 1229.3,756 1231.1,752.9 1232.8,750.1 1234.5,753.7 1236.2,750.9 1237.9,744.8 1239.7,751.9 1241.4,754.8 1243.1,755.1 1244.8,755.8 1246.5,755.8 1248.3,756.4 1250,759.8 1251.7,752.5 1253.4,753.4 1255.1,749 1256.9,759.2 1258.6,761.8 1260.3,762.1 1262,834.4 1263.7,866 1265.5,866 1267.2,866 1268.9,866 1270.6,866 1272.3,866 1274,866 1275.8,866 1277.5,866 1279.2,866 1280.9,866 1282.6,866 1284.4,854 1286.1,800.3 1287.8,746.3 1289.5,735.8 1291.2,747 1293,723.5 1294.7,745.7 1296.4,745.1 1298.1,734.3 1299.8,739.4 1301.6,742.5 1303.3,744 1305,741.6 1306.7,737.5 1308.4,755.4 1310.2,737.5 1311.9,746.2 1313.6,751.6 1315.3,744.9 1317,745.7 1318.8,746.4 1320.5,749.5 1322.2,744.8 1323.9,748.6 1325.6,757.8 1327.4,747.1 1329.1,755.5 1330.8,755.2 1332.5,765.5 1334.2,747.2 1336,762.7 1337.7,764.7 1339.4,756.8 1341.1,751.5 1342.8,756.9 1344.6,766.5 1346.3,751.2 1348,761.8 1349.7,752 1351.4,757.9 1353.2,756.1 1354.9,759.8 1356.6,743.1 1358.3,759.9 1360,756.9 1361.8,755.9 1363.5,765 1365.2,749.4 1366.9,758.5 1368.6,757.7 1370.4,760.4 1372.1,750.3 1373.8,763 1375.5,759.4 1377.2,756.7 1379,758.6 1380.7,760.3 1382.4,763.3 1384.1,753.6 1385.8,755.5 1387.5,756.3 1389.3,755.3 1391,762.1 1392.7,760.5 1394.4,753.5 1396.1,754.6 1397.9,765.1 1399.6,742.7 1401.3,758.5 1403,754.9 1404.7,767.8 1406.5,766.7 1408.2,761.3 1409.9,762.7 1411.6,757.8 1413.3,769 1415.1,757.8 1416.8,763.5 1418.5,745.2 1420.2,756.5 1421.9,751.9 1423.7,749 1425.4,758.1 1427.1,756.4 1428.8,764.4 1430.5,752.5 1432.3,757.3 1434,757.6 1435.7,759 1437.4,750.9 1439.1,767.1 1440.9,757.6 1442.6,770.2 1444.3,754.7 1446,754.1 1447.7,755.1 1449.5,744.1 1451.2,744.1 1452.9,748 1454.6,761.6 1456.3,760.6 1458.1,741.7 1459.8,754.4 1461.5,749.6 1463.2,755.6 1464.9,757.1 1466.7,756.8 1468.4,755.6 1470.1,759.8 1471.8,756.1 1473.5,755.3 1475.3,755.6 1477,753.4 1478.7,761.7 1480.4,759.7 1482.1,752.5 1483.9,755.8 1485.6,741.2 1487.3,760.3 1489,754.8 1490.7,755.1 1492.5,758.3 1494.2,754 1495.9,750.3 1497.6,766.6 1499.3,753.2 1501,749 1502.8,757.4 1504.5,753.5 1506.2,759.3 1507.9,758.4 1509.6,752.9 1511.4,759.7 1513.1,756.1 1514.8,764.2 1516.5,753.8 1518.2,757.4 1520,745.9 1521.7,759 1523.4,766.5 1525.1,760.6 1526.8,750.2 1528.6,762.7 1530.3,749.2 1532,735.6 1533.7,766.5 1535.4,745.9 1537.2,764.4 1538.9,762.2 1540.6,756.2 1542.3,755 1544,760.1 1545.8,739.3 1547.5,754.6 1549.2,755.6 1550.9,756.5 1552.6,762.6 1554.4,756.1 1556.1,760.1 1557.8,750.3 1559.5,750.3 1561.2,762.3 1563,759.5 1564.7,758.3 1566.4,763.2 1568.1,757.9 1569.8,759 1571.6,760.2 1573.3,733.7 1575,746.9 1576.7,764.7 1578.4,741.9 1580.2,753 1581.9,765.4 1583.6,757.3 1585.3,766.5 1587,751.3 1588.8,757.2 1590.5,753.6 1592.2,758.4 1593.9,757.2 1595.6,760.2 1597.4,758.2 1599.1,759.3 1600.8,765.5 1602.5,760.2 1604.2,765.2 1606,759.5 1607.7,742 1609.4,758.3 1611.1,745.9 1612.8,764.3 1614.5,759.3 1616.3,757.6 1618,762.9 1619.7,753.2 1621.4,762 1623.1,746.8 1624.9,760.9 1626.6,749.3 1628.3,756.6 1630,750 1631.7,753.4 1633.5,758.3 1635.2,756.3 1636.9,764.6 1638.6,734.1 1640.3,766.5 1642.1,754.5 1643.8,755.1 1645.5,752.5 1647.2,751.6 1648.9,760.8 1650.7,748.3 1652.4,753.2 1654.1,751.4 1655.8,745.7 1657.5,752.8 1659.3,759.4 1661,755.3 1662.7,747.9 1664.4,753.7 1666.1,749.1 1667.9,743.4 1669.6,741.5 1671.3,744.2" fill="none" stroke="#7aa6dc" stroke-opacity="0.85" stroke-width="2" stroke-linejoin="round"/>
<line x1="1209" y1="642.5" x2="1671" y2="642.5" stroke="#7aa8b5" stroke-width="2" stroke-dasharray="7,5" stroke-opacity="0.8"/>
<line x1="1346" y1="588" x2="1346" y2="866" stroke="#7aa8b5" stroke-width="2" stroke-dasharray="7,5" stroke-opacity="0.8"/>
<circle cx="1346" cy="657" r="9" fill="#e8513e" fill-opacity="0.35"/><circle cx="1346" cy="657" r="5.5" fill="#ee5540" fill-opacity="0.8"/>
<circle cx="1346" cy="765" r="9" fill="#5a9cf0" fill-opacity="0.35"/><circle cx="1346" cy="765" r="5.5" fill="#5fa0f0" fill-opacity="0.8"/>
<g filter="url(#shadow)"><rect x="1363" y="660" width="291" height="95" rx="4" fill="#22252b"/></g>
<text x="1377.5" y="699" font-size="23.5" fill="#ccccdc" text-anchor="start" font-weight="normal" stroke="#ccccdc" stroke-width="0.6" letter-spacing="0.2">2023-05-11 13:16:40</text>
<rect x="1378" y="722.2" width="25" height="7" rx="3.5" fill="#ee5334"/>
<text x="1416.5" y="733" font-size="23.5" fill="#ccccdc" text-anchor="start" font-weight="normal"  stroke="#ccccdc" stroke-width="0.35">logins (-1 hour)</text>
<text x="1639.5" y="733" font-size="23.5" fill="#ccccdc" text-anchor="end" font-weight="normal"  stroke="#ccccdc" stroke-width="0.35">27.1</text>
<rect x="1170.5" y="924.9" width="25" height="7" rx="3.5" fill="#5292d8"/>
<text x="1209.5" y="936" font-size="23" fill="#ccccdc" text-anchor="start" font-weight="normal"  stroke="#ccccdc" stroke-width="0.35">logins</text>
<rect x="1288.5" y="924.9" width="25" height="7" rx="3.5" fill="#e24f45"/>
<text x="1328" y="936" font-size="23" fill="#ccccdc" text-anchor="start" font-weight="normal"  stroke="#ccccdc" stroke-width="0.35">logins (-1 hour)</text>
<path d="M1696 948 v8 h-8 v-3 h5 v-5 z" fill="#8a8a95"/>
<text x="23.5" y="1016" font-size="25" fill="#ccccdc" text-anchor="start" font-weight="bold" letter-spacing="0.4">Traffic In/Out</text>
<line x1="100" y1="1126.6" x2="1284" y2="1126.6" stroke="#2b2e33" stroke-width="1"/>
<text x="79.5" y="1133.1" font-size="23.5" fill="#ccccdc" text-anchor="end" font-weight="normal"  stroke="#ccccdc" stroke-width="0.35">2 kB</text>
<line x1="100" y1="1223" x2="1284" y2="1223" stroke="#2b2e33" stroke-width="1"/>
<text x="79.5" y="1229.5" font-size="23.5" fill="#ccccdc" text-anchor="end" font-weight="normal"  stroke="#ccccdc" stroke-width="0.35">0 B</text>
<line x1="100" y1="1319.4" x2="1284" y2="1319.4" stroke="#2b2e33" stroke-width="1"/>
<text x="79.5" y="1325.9" font-size="23.5" fill="#ccccdc" text-anchor="end" font-weight="normal"  stroke="#ccccdc" stroke-width="0.35">-2 kB</text>
<line x1="116" y1="1063" x2="116" y2="1390" stroke="#2b2e33" stroke-width="1"/>
<text x="116" y="1415.5" font-size="23.5" fill="#ccccdc" text-anchor="middle" font-weight="normal"  stroke="#ccccdc" stroke-width="0.35">13:00</text>
<line x1="215.1" y1="1063" x2="215.1" y2="1390" stroke="#2b2e33" stroke-width="1"/>
<text x="215.1" y="1415.5" font-size="23.5" fill="#ccccdc" text-anchor="middle" font-weight="normal"  stroke="#ccccdc" stroke-width="0.35">13:05</text>
<line x1="314.2" y1="1063" x2="314.2" y2="1390" stroke="#2b2e33" stroke-width="1"/>
<text x="314.2" y="1415.5" font-size="23.5" fill="#ccccdc" text-anchor="middle" font-weight="normal"  stroke="#ccccdc" stroke-width="0.35">13:10</text>
<line x1="413.3" y1="1063" x2="413.3" y2="1390" stroke="#2b2e33" stroke-width="1"/>
<text x="413.3" y="1415.5" font-size="23.5" fill="#ccccdc" text-anchor="middle" font-weight="normal"  stroke="#ccccdc" stroke-width="0.35">13:15</text>
<line x1="512.4" y1="1063" x2="512.4" y2="1390" stroke="#2b2e33" stroke-width="1"/>
<text x="512.4" y="1415.5" font-size="23.5" fill="#ccccdc" text-anchor="middle" font-weight="normal"  stroke="#ccccdc" stroke-width="0.35">13:20</text>
<line x1="611.5" y1="1063" x2="611.5" y2="1390" stroke="#2b2e33" stroke-width="1"/>
<text x="611.5" y="1415.5" font-size="23.5" fill="#ccccdc" text-anchor="middle" font-weight="normal"  stroke="#ccccdc" stroke-width="0.35">13:25</text>
<line x1="710.6" y1="1063" x2="710.6" y2="1390" stroke="#2b2e33" stroke-width="1"/>
<text x="710.6" y="1415.5" font-size="23.5" fill="#ccccdc" text-anchor="middle" font-weight="normal"  stroke="#ccccdc" stroke-width="0.35">13:30</text>
<line x1="809.7" y1="1063" x2="809.7" y2="1390" stroke="#2b2e33" stroke-width="1"/>
<text x="809.7" y="1415.5" font-size="23.5" fill="#ccccdc" text-anchor="middle" font-weight="normal"  stroke="#ccccdc" stroke-width="0.35">13:35</text>
<line x1="908.8" y1="1063" x2="908.8" y2="1390" stroke="#2b2e33" stroke-width="1"/>
<text x="908.8" y="1415.5" font-size="23.5" fill="#ccccdc" text-anchor="middle" font-weight="normal"  stroke="#ccccdc" stroke-width="0.35">13:40</text>
<line x1="1007.9" y1="1063" x2="1007.9" y2="1390" stroke="#2b2e33" stroke-width="1"/>
<text x="1007.9" y="1415.5" font-size="23.5" fill="#ccccdc" text-anchor="middle" font-weight="normal"  stroke="#ccccdc" stroke-width="0.35">13:45</text>
<line x1="1107" y1="1063" x2="1107" y2="1390" stroke="#2b2e33" stroke-width="1"/>
<text x="1107" y="1415.5" font-size="23.5" fill="#ccccdc" text-anchor="middle" font-weight="normal"  stroke="#ccccdc" stroke-width="0.35">13:50</text>
<line x1="1206.1" y1="1063" x2="1206.1" y2="1390" stroke="#2b2e33" stroke-width="1"/>
<text x="1206.1" y="1415.5" font-size="23.5" fill="#ccccdc" text-anchor="middle" font-weight="normal"  stroke="#ccccdc" stroke-width="0.35">13:55</text>
<polygon points="109.1,1130 129.4,1124.7 148.6,1132.8 168.9,1124.7 189.3,1140.9 207.6,1153.2 227.9,1145 248.3,1145.8 268.6,1145.8 286.9,1123.8 307.3,1128.7 327.6,1160.5 348,1145 366.3,1131.6 386.7,1145 407,1148.3 427.4,1148.3 445.7,1125.9 466,1147 484.3,1132 504.7,1142.2 525,1161.3 545.4,1113.7 563.7,1114.5 584,1134.8 604.4,1136.1 622.7,1121.4 643.1,1134.8 663.4,1116.5 683.8,1135.6 703.4,1116 723.3,1141.2 743.1,1147.7 762.9,1123.2 782.7,1116 802.6,1126.8 822.4,1134 842.2,1155.7 862,1132.9 881.9,1137.6 905.3,1152 925.1,1139.4 945,1119.6 964.8,1149.2 984.6,1137.6 1004.4,1122.5 1024.3,1138.7 1042.3,1131.5 1063.9,1144.8 1083.7,1132.2 1103.6,1135.8 1122.7,1090 1142.5,1137.6 1162.3,1129.7 1182.2,1127.5 1202.7,1143 1222.5,1142.3 1241.6,1131.1 1262.2,1136.9 1282,1135.1 1282,1156.7 1262.2,1161.1 1241.6,1149.2 1222.5,1160 1202.7,1152 1182.2,1162.9 1162.3,1148.4 1142.5,1161.1 1122.7,1147.4 1103.6,1167.5 1083.7,1156.7 1063.9,1168.3 1042.3,1165.7 1024.3,1162.9 1004.4,1165.7 984.6,1154.6 964.8,1161.1 945,1150.2 925.1,1158.2 905.3,1163.6 881.9,1161.1 862,1167.5 842.2,1171.2 822.4,1161.1 802.6,1152.8 782.7,1149.2 762.9,1159.3 743.1,1166.5 723.3,1166.5 703.4,1151 683.8,1166.6 663.4,1147.9 643.1,1159.3 622.7,1149.1 604.4,1163.3 584,1172.3 563.7,1151.1 545.4,1156.4 525,1169.4 504.7,1173.5 484.3,1164.1 466,1164.1 445.7,1167.4 427.4,1171.5 407,1167.4 386.7,1167.4 366.3,1157.2 348,1167.4 327.6,1169.4 307.3,1152.3 286.9,1151.9 268.6,1169.4 248.3,1182.5 227.9,1171.5 207.6,1169.4 189.3,1164.5 168.9,1158 148.6,1155.2 129.4,1167.4 109.1,1165.4" fill="#283b28"/>
<polygon points="109.1,1165.4 129.4,1167.4 148.6,1155.2 168.9,1158 189.3,1164.5 207.6,1169.4 227.9,1171.5 248.3,1182.5 268.6,1169.4 286.9,1151.9 307.3,1152.3 327.6,1169.4 348,1167.4 366.3,1157.2 386.7,1167.4 407,1167.4 427.4,1171.5 445.7,1167.4 466,1164.1 484.3,1164.1 504.7,1173.5 525,1169.4 545.4,1156.4 563.7,1151.1 584,1172.3 604.4,1163.3 622.7,1149.1 643.1,1159.3 663.4,1147.9 683.8,1166.6 703.4,1151 723.3,1166.5 743.1,1166.5 762.9,1159.3 782.7,1149.2 802.6,1152.8 822.4,1161.1 842.2,1171.2 862,1167.5 881.9,1161.1 905.3,1163.6 925.1,1158.2 945,1150.2 964.8,1161.1 984.6,1154.6 1004.4,1165.7 1024.3,1162.9 1042.3,1165.7 1063.9,1168.3 1083.7,1156.7 1103.6,1167.5 1122.7,1147.4 1142.5,1161.1 1162.3,1148.4 1182.2,1162.9 1202.7,1152 1222.5,1160 1241.6,1149.2 1262.2,1161.1 1282,1156.7 1282,1188.8 1262.2,1188.8 1241.6,1186.3 1222.5,1184.5 1202.7,1185.2 1182.2,1196.4 1162.3,1187 1142.5,1190.6 1122.7,1187.4 1103.6,1188.8 1083.7,1185.2 1063.9,1195.3 1042.3,1191.7 1024.3,1191.7 1004.4,1189.9 984.6,1185.6 964.8,1186.3 945,1188.8 925.1,1189.2 905.3,1189.9 881.9,1194.2 862,1192.8 842.2,1196.4 822.4,1192.4 802.6,1187.4 782.7,1188.1 762.9,1188.1 743.1,1187.4 723.3,1196.4 703.4,1188.8 683.8,1193.9 663.4,1184.5 643.1,1189.8 622.7,1182.5 604.4,1195.9 584,1191 563.7,1187.7 545.4,1185.7 525,1193.9 504.7,1195.9 484.3,1192.6 466,1193 445.7,1193 427.4,1189.8 407,1195.9 386.7,1193.9 366.3,1189.8 348,1191.8 327.6,1191.8 307.3,1189 286.9,1189.8 268.6,1195.9 248.3,1200 227.9,1201.2 207.6,1200 189.3,1187.7 168.9,1191 148.6,1191 129.4,1191.8 109.1,1193.9" fill="#3b5a36"/>
<polygon points="109.1,1193.9 129.4,1191.8 148.6,1191 168.9,1191 189.3,1187.7 207.6,1200 227.9,1201.2 248.3,1200 268.6,1195.9 286.9,1189.8 307.3,1189 327.6,1191.8 348,1191.8 366.3,1189.8 386.7,1193.9 407,1195.9 427.4,1189.8 445.7,1193 466,1193 484.3,1192.6 504.7,1195.9 525,1193.9 545.4,1185.7 563.7,1187.7 584,1191 604.4,1195.9 622.7,1182.5 643.1,1189.8 663.4,1184.5 683.8,1193.9 703.4,1188.8 723.3,1196.4 743.1,1187.4 762.9,1188.1 782.7,1188.1 802.6,1187.4 822.4,1192.4 842.2,1196.4 862,1192.8 881.9,1194.2 905.3,1189.9 925.1,1189.2 945,1188.8 964.8,1186.3 984.6,1185.6 1004.4,1189.9 1024.3,1191.7 1042.3,1191.7 1063.9,1195.3 1083.7,1185.2 1103.6,1188.8 1122.7,1187.4 1142.5,1190.6 1162.3,1187 1182.2,1196.4 1202.7,1185.2 1222.5,1184.5 1241.6,1186.3 1262.2,1188.8 1282,1188.8 1282,1213.3 1262.2,1215.9 1241.6,1215.1 1222.5,1212.2 1202.7,1205 1182.2,1212.6 1162.3,1212.2 1142.5,1213.3 1122.7,1213.3 1103.6,1212.2 1083.7,1210.8 1063.9,1213.3 1042.3,1210.8 1024.3,1212.2 1004.4,1213.3 984.6,1213.3 964.8,1213.3 945,1209 925.1,1209.7 905.3,1210.4 881.9,1211.5 862,1212.6 842.2,1218 822.4,1213.3 802.6,1211.5 782.7,1209.7 762.9,1215.1 743.1,1213.3 723.3,1218 703.4,1211.5 683.8,1217 663.4,1210.9 643.1,1210.1 622.7,1207.3 604.4,1215.4 584,1212.2 563.7,1210.1 545.4,1205.2 525,1213.4 504.7,1214.2 484.3,1217 466,1213.4 445.7,1213.4 427.4,1212.2 407,1216.2 386.7,1213.4 366.3,1213 348,1215 327.6,1214.2 307.3,1214.2 286.9,1213 268.6,1215.4 248.3,1215.4 227.9,1217.5 207.6,1221.1 189.3,1211.4 168.9,1216.2 148.6,1215 129.4,1214.2 109.1,1216.2" fill="#4a6e40"/>
<polygon points="109.1,1216.2 129.4,1214.2 148.6,1215 168.9,1216.2 189.3,1211.4 207.6,1221.1 227.9,1217.5 248.3,1215.4 268.6,1215.4 286.9,1213 307.3,1214.2 327.6,1214.2 348,1215 366.3,1213 386.7,1213.4 407,1216.2 427.4,1212.2 445.7,1213.4 466,1213.4 484.3,1217 504.7,1214.2 525,1213.4 545.4,1205.2 563.7,1210.1 584,1212.2 604.4,1215.4 622.7,1207.3 643.1,1210.1 663.4,1210.9 683.8,1217 703.4,1211.5 723.3,1218 743.1,1213.3 762.9,1215.1 782.7,1209.7 802.6,1211.5 822.4,1213.3 842.2,1218 862,1212.6 881.9,1211.5 905.3,1210.4 925.1,1209.7 945,1209 964.8,1213.3 984.6,1213.3 1004.4,1213.3 1024.3,1212.2 1042.3,1210.8 1063.9,1213.3 1083.7,1210.8 1103.6,1212.2 1122.7,1213.3 1142.5,1213.3 1162.3,1212.2 1182.2,1212.6 1202.7,1205 1222.5,1212.2 1241.6,1215.1 1262.2,1215.9 1282,1213.3 1282,1223 1262.2,1223 1241.6,1223 1222.5,1223 1202.7,1223 1182.2,1223 1162.3,1223 1142.5,1223 1122.7,1223 1103.6,1223 1083.7,1223 1063.9,1223 1042.3,1223 1024.3,1223 1004.4,1223 984.6,1223 964.8,1223 945,1223 925.1,1223 905.3,1223 881.9,1223 862,1223 842.2,1223 822.4,1223 802.6,1223 782.7,1223 762.9,1223 743.1,1223 723.3,1223 703.4,1223 683.8,1223 663.4,1223 643.1,1223 622.7,1223 604.4,1223 584,1223 563.7,1223 545.4,1223 525,1223 504.7,1223 484.3,1223 466,1223 445.7,1223 427.4,1223 407,1223 386.7,1223 366.3,1223 348,1223 327.6,1223 307.3,1223 286.9,1223 268.6,1223 248.3,1223 227.9,1223 207.6,1223 189.3,1223 168.9,1223 148.6,1223 129.4,1223 109.1,1223" fill="#5b8a4c"/>
<polygon points="109.1,1250.8 129.4,1252.1 148.6,1253.7 168.9,1253.7 189.3,1256.9 207.6,1245.9 227.9,1243.5 248.3,1246.8 268.6,1250.8 286.9,1254.9 307.3,1256.1 327.6,1253.7 348,1253.7 366.3,1256.1 386.7,1250.8 407,1249.2 427.4,1254.9 445.7,1251.6 466,1252.9 484.3,1252.9 504.7,1250 525,1252.1 545.4,1259 563.7,1258.2 584,1253.7 604.4,1248.8 622.7,1261 643.1,1254.9 663.4,1259.8 683.8,1250.8 703.4,1256.6 723.3,1248.3 743.1,1257.7 762.9,1256.6 782.7,1256.6 802.6,1257.3 822.4,1253 842.2,1248.3 862,1252.3 881.9,1253 905.3,1254.8 925.1,1254.8 945,1256.6 964.8,1258.4 984.6,1259.5 1004.4,1255.9 1024.3,1254.8 1042.3,1256.6 1063.9,1251.2 1083.7,1259.5 1103.6,1256.6 1122.7,1257.3 1142.5,1254.8 1162.3,1258.4 1182.2,1249.4 1202.7,1258.4 1222.5,1260.2 1241.6,1259.5 1262.2,1256.6 1282,1255.9 1282,1223 1262.2,1223 1241.6,1223 1222.5,1223 1202.7,1223 1182.2,1223 1162.3,1223 1142.5,1223 1122.7,1223 1103.6,1223 1083.7,1223 1063.9,1223 1042.3,1223 1024.3,1223 1004.4,1223 984.6,1223 964.8,1223 945,1223 925.1,1223 905.3,1223 881.9,1223 862,1223 842.2,1223 822.4,1223 802.6,1223 782.7,1223 762.9,1223 743.1,1223 723.3,1223 703.4,1223 683.8,1223 663.4,1223 643.1,1223 622.7,1223 604.4,1223 584,1223 563.7,1223 545.4,1223 525,1223 504.7,1223 484.3,1223 466,1223 445.7,1223 427.4,1223 407,1223 386.7,1223 366.3,1223 348,1223 327.6,1223 307.3,1223 286.9,1223 268.6,1223 248.3,1223 227.9,1223 207.6,1223 189.3,1223 168.9,1223 148.6,1223 129.4,1223 109.1,1223" fill="#30597f"/>
<polygon points="109.1,1316 129.4,1319.2 148.6,1313.9 168.9,1320 189.3,1304.6 207.6,1292.8 227.9,1300.5 248.3,1298.9 268.6,1299.7 286.9,1320.8 307.3,1317.2 327.6,1284.6 348,1300.5 366.3,1314.7 386.7,1300.9 407,1296.8 427.4,1296.8 445.7,1318.8 466,1297.6 484.3,1313.9 504.7,1303.7 525,1284.2 545.4,1330.2 563.7,1329.4 584,1309 604.4,1309 622.7,1324.1 643.1,1311.9 663.4,1327.3 683.8,1309.8 703.4,1328 723.3,1303.5 743.1,1298 762.9,1321.5 782.7,1328.7 802.6,1317.9 822.4,1312.5 842.2,1289.8 862,1311.7 881.9,1307.8 905.3,1293.4 925.1,1306 945,1325.1 964.8,1296.2 984.6,1307.1 1004.4,1322.2 1024.3,1307.1 1042.3,1313.5 1063.9,1300.6 1083.7,1312.5 1103.6,1308.9 1122.7,1355 1142.5,1307.8 1162.3,1314.3 1182.2,1316.8 1202.7,1302.4 1222.5,1303.5 1241.6,1314.3 1262.2,1307.8 1282,1308.9 1282,1255.9 1262.2,1256.6 1241.6,1259.5 1222.5,1260.2 1202.7,1258.4 1182.2,1249.4 1162.3,1258.4 1142.5,1254.8 1122.7,1257.3 1103.6,1256.6 1083.7,1259.5 1063.9,1251.2 1042.3,1256.6 1024.3,1254.8 1004.4,1255.9 984.6,1259.5 964.8,1258.4 945,1256.6 925.1,1254.8 905.3,1254.8 881.9,1253 862,1252.3 842.2,1248.3 822.4,1253 802.6,1257.3 782.7,1256.6 762.9,1256.6 743.1,1257.7 723.3,1248.3 703.4,1256.6 683.8,1250.8 663.4,1259.8 643.1,1254.9 622.7,1261 604.4,1248.8 584,1253.7 563.7,1258.2 545.4,1259 525,1252.1 504.7,1250 484.3,1252.9 466,1252.9 445.7,1251.6 427.4,1254.9 407,1249.2 386.7,1250.8 366.3,1256.1 348,1253.7 327.6,1253.7 307.3,1256.1 286.9,1254.9 268.6,1250.8 248.3,1246.8 227.9,1243.5 207.6,1245.9 189.3,1256.9 168.9,1253.7 148.6,1253.7 129.4,1252.1 109.1,1250.8" fill="#3b4c5c"/>
<polyline points="109.1,1130 129.4,1124.7 148.6,1132.8 168.9,1124.7 189.3,1140.9 207.6,1153.2 227.9,1145 248.3,1145.8 268.6,1145.8 286.9,1123.8 307.3,1128.7 327.6,1160.5 348,1145 366.3,1131.6 386.7,1145 407,1148.3 427.4,1148.3 445.7,1125.9 466,1147 484.3,1132 504.7,1142.2 525,1161.3 545.4,1113.7 563.7,1114.5 584,1134.8 604.4,1136.1 622.7,1121.4 643.1,1134.8 663.4,1116.5 683.8,1135.6 703.4,1116 723.3,1141.2 743.1,1147.7 762.9,1123.2 782.7,1116 802.6,1126.8 822.4,1134 842.2,1155.7 862,1132.9 881.9,1137.6 905.3,1152 925.1,1139.4 945,1119.6 964.8,1149.2 984.6,1137.6 1004.4,1122.5 1024.3,1138.7 1042.3,1131.5 1063.9,1144.8 1083.7,1132.2 1103.6,1135.8 1122.7,1090 1142.5,1137.6 1162.3,1129.7 1182.2,1127.5 1202.7,1143 1222.5,1142.3 1241.6,1131.1 1262.2,1136.9 1282,1135.1" fill="none" stroke="#5f9a4f" stroke-width="3" stroke-linejoin="round"/>
<polyline points="109.1,1165.4 129.4,1167.4 148.6,1155.2 168.9,1158 189.3,1164.5 207.6,1169.4 227.9,1171.5 248.3,1182.5 268.6,1169.4 286.9,1151.9 307.3,1152.3 327.6,1169.4 348,1167.4 366.3,1157.2 386.7,1167.4 407,1167.4 427.4,1171.5 445.7,1167.4 466,1164.1 484.3,1164.1 504.7,1173.5 525,1169.4 545.4,1156.4 563.7,1151.1 584,1172.3 604.4,1163.3 622.7,1149.1 643.1,1159.3 663.4,1147.9 683.8,1166.6 703.4,1151 723.3,1166.5 743.1,1166.5 762.9,1159.3 782.7,1149.2 802.6,1152.8 822.4,1161.1 842.2,1171.2 862,1167.5 881.9,1161.1 905.3,1163.6 925.1,1158.2 945,1150.2 964.8,1161.1 984.6,1154.6 1004.4,1165.7 1024.3,1162.9 1042.3,1165.7 1063.9,1168.3 1083.7,1156.7 1103.6,1167.5 1122.7,1147.4 1142.5,1161.1 1162.3,1148.4 1182.2,1162.9 1202.7,1152 1222.5,1160 1241.6,1149.2 1262.2,1161.1 1282,1156.7" fill="none" stroke="#6bac5c" stroke-width="3" stroke-linejoin="round"/>
<polyline points="109.1,1193.9 129.4,1191.8 148.6,1191 168.9,1191 189.3,1187.7 207.6,1200 227.9,1201.2 248.3,1200 268.6,1195.9 286.9,1189.8 307.3,1189 327.6,1191.8 348,1191.8 366.3,1189.8 386.7,1193.9 407,1195.9 427.4,1189.8 445.7,1193 466,1193 484.3,1192.6 504.7,1195.9 525,1193.9 545.4,1185.7 563.7,1187.7 584,1191 604.4,1195.9 622.7,1182.5 643.1,1189.8 663.4,1184.5 683.8,1193.9 703.4,1188.8 723.3,1196.4 743.1,1187.4 762.9,1188.1 782.7,1188.1 802.6,1187.4 822.4,1192.4 842.2,1196.4 862,1192.8 881.9,1194.2 905.3,1189.9 925.1,1189.2 945,1188.8 964.8,1186.3 984.6,1185.6 1004.4,1189.9 1024.3,1191.7 1042.3,1191.7 1063.9,1195.3 1083.7,1185.2 1103.6,1188.8 1122.7,1187.4 1142.5,1190.6 1162.3,1187 1182.2,1196.4 1202.7,1185.2 1222.5,1184.5 1241.6,1186.3 1262.2,1188.8 1282,1188.8" fill="none" stroke="#74b766" stroke-width="3" stroke-linejoin="round"/>
<polyline points="109.1,1216.2 129.4,1214.2 148.6,1215 168.9,1216.2 189.3,1211.4 207.6,1221.1 227.9,1217.5 248.3,1215.4 268.6,1215.4 286.9,1213 307.3,1214.2 327.6,1214.2 348,1215 366.3,1213 386.7,1213.4 407,1216.2 427.4,1212.2 445.7,1213.4 466,1213.4 484.3,1217 504.7,1214.2 525,1213.4 545.4,1205.2 563.7,1210.1 584,1212.2 604.4,1215.4 622.7,1207.3 643.1,1210.1 663.4,1210.9 683.8,1217 703.4,1211.5 723.3,1218 743.1,1213.3 762.9,1215.1 782.7,1209.7 802.6,1211.5 822.4,1213.3 842.2,1218 862,1212.6 881.9,1211.5 905.3,1210.4 925.1,1209.7 945,1209 964.8,1213.3 984.6,1213.3 1004.4,1213.3 1024.3,1212.2 1042.3,1210.8 1063.9,1213.3 1083.7,1210.8 1103.6,1212.2 1122.7,1213.3 1142.5,1213.3 1162.3,1212.2 1182.2,1212.6 1202.7,1205 1222.5,1212.2 1241.6,1215.1 1262.2,1215.9 1282,1213.3" fill="none" stroke="#7fc06d" stroke-width="3" stroke-linejoin="round"/>
<polyline points="109.1,1250.8 129.4,1252.1 148.6,1253.7 168.9,1253.7 189.3,1256.9 207.6,1245.9 227.9,1243.5 248.3,1246.8 268.6,1250.8 286.9,1254.9 307.3,1256.1 327.6,1253.7 348,1253.7 366.3,1256.1 386.7,1250.8 407,1249.2 427.4,1254.9 445.7,1251.6 466,1252.9 484.3,1252.9 504.7,1250 525,1252.1 545.4,1259 563.7,1258.2 584,1253.7 604.4,1248.8 622.7,1261 643.1,1254.9 663.4,1259.8 683.8,1250.8 703.4,1256.6 723.3,1248.3 743.1,1257.7 762.9,1256.6 782.7,1256.6 802.6,1257.3 822.4,1253 842.2,1248.3 862,1252.3 881.9,1253 905.3,1254.8 925.1,1254.8 945,1256.6 964.8,1258.4 984.6,1259.5 1004.4,1255.9 1024.3,1254.8 1042.3,1256.6 1063.9,1251.2 1083.7,1259.5 1103.6,1256.6 1122.7,1257.3 1142.5,1254.8 1162.3,1258.4 1182.2,1249.4 1202.7,1258.4 1222.5,1260.2 1241.6,1259.5 1262.2,1256.6 1282,1255.9" fill="none" stroke="#3b8ee0" stroke-width="3" stroke-linejoin="round"/>
<polyline points="109.1,1316 129.4,1319.2 148.6,1313.9 168.9,1320 189.3,1304.6 207.6,1292.8 227.9,1300.5 248.3,1298.9 268.6,1299.7 286.9,1320.8 307.3,1317.2 327.6,1284.6 348,1300.5 366.3,1314.7 386.7,1300.9 407,1296.8 427.4,1296.8 445.7,1318.8 466,1297.6 484.3,1313.9 504.7,1303.7 525,1284.2 545.4,1330.2 563.7,1329.4 584,1309 604.4,1309 622.7,1324.1 643.1,1311.9 663.4,1327.3 683.8,1309.8 703.4,1328 723.3,1303.5 743.1,1298 762.9,1321.5 782.7,1328.7 802.6,1317.9 822.4,1312.5 842.2,1289.8 862,1311.7 881.9,1307.8 905.3,1293.4 925.1,1306 945,1325.1 964.8,1296.2 984.6,1307.1 1004.4,1322.2 1024.3,1307.1 1042.3,1313.5 1063.9,1300.6 1083.7,1312.5 1103.6,1308.9 1122.7,1355 1142.5,1307.8 1162.3,1314.3 1182.2,1316.8 1202.7,1302.4 1222.5,1303.5 1241.6,1314.3 1262.2,1307.8 1282,1308.9" fill="none" stroke="#94c4ea" stroke-width="3" stroke-linejoin="round"/>
<line x1="109" y1="1223" x2="1282" y2="1223" stroke="#a9dca0" stroke-width="3"/>
<text x="1561" y="1076" font-size="23" fill="#6e9fff" text-anchor="end" font-weight="bold" letter-spacing="0.3">Mean</text>
<text x="1673" y="1076" font-size="23" fill="#6e9fff" text-anchor="end" font-weight="bold" letter-spacing="0.3">Last *</text>
<line x1="1300.5" y1="1090.7" x2="1686" y2="1090.7" stroke="#26292e" stroke-width="2"/>
<line x1="1300.5" y1="1132.5" x2="1686" y2="1132.5" stroke="#26292e" stroke-width="2"/>
<line x1="1300.5" y1="1175.4" x2="1686" y2="1175.4" stroke="#26292e" stroke-width="2"/>
<line x1="1300.5" y1="1218.1" x2="1686" y2="1218.1" stroke="#26292e" stroke-width="2"/>
<line x1="1300.5" y1="1261" x2="1686" y2="1261" stroke="#26292e" stroke-width="2"/>
<line x1="1300.5" y1="1303.4" x2="1686" y2="1303.4" stroke="#26292e" stroke-width="2"/>
<line x1="1300.5" y1="1346.3" x2="1686" y2="1346.3" stroke="#26292e" stroke-width="2"/>
<line x1="1300.5" y1="1388.4" x2="1686" y2="1388.4" stroke="#26292e" stroke-width="2"/>
<rect x="1314" y="1108.7" width="25" height="7" rx="3.5" fill="#b9e2ad"/>
<text x="1354" y="1120.2" font-size="23" fill="#ccccdc" text-anchor="start" font-weight="normal"  stroke="#ccccdc" stroke-width="0.35">upper_25</text>
<text x="1561" y="1120.2" font-size="23" fill="#ccccdc" text-anchor="end" font-weight="normal"  stroke="#ccccdc" stroke-width="0.35">2.42 B</text>
<text x="1673" y="1120.2" font-size="23" fill="#ccccdc" text-anchor="end" font-weight="normal"  stroke="#ccccdc" stroke-width="0.35">2 B</text>
<rect x="1314" y="1151.2" width="25" height="7" rx="3.5" fill="#8fc47e"/>
<text x="1354" y="1162.7" font-size="23" fill="#ccccdc" text-anchor="start" font-weight="normal"  stroke="#ccccdc" stroke-width="0.35">upper_50</text>
<text x="1561" y="1162.7" font-size="23" fill="#ccccdc" text-anchor="end" font-weight="normal"  stroke="#ccccdc" stroke-width="0.35">190 B</text>
<text x="1673" y="1162.7" font-size="23" fill="#ccccdc" text-anchor="end" font-weight="normal"  stroke="#ccccdc" stroke-width="0.35">180 B</text>
<rect x="1314" y="1193.7" width="25" height="7" rx="3.5" fill="#7cb46c"/>
<text x="1354" y="1205.2" font-size="23" fill="#ccccdc" text-anchor="start" font-weight="normal"  stroke="#ccccdc" stroke-width="0.35">upper_75</text>
<text x="1561" y="1205.2" font-size="23" fill="#ccccdc" text-anchor="end" font-weight="normal"  stroke="#ccccdc" stroke-width="0.35">652 B</text>
<text x="1673" y="1205.2" font-size="23" fill="#ccccdc" text-anchor="end" font-weight="normal"  stroke="#ccccdc" stroke-width="0.35">686 B</text>
<rect x="1314" y="1236.2" width="25" height="7" rx="3.5" fill="#6aa85b"/>
<text x="1354" y="1247.7" font-size="23" fill="#ccccdc" text-anchor="start" font-weight="normal"  stroke="#ccccdc" stroke-width="0.35">upper_90</text>
<text x="1561" y="1247.7" font-size="23" fill="#ccccdc" text-anchor="end" font-weight="normal"  stroke="#ccccdc" stroke-width="0.35">1.26 kB</text>
<text x="1673" y="1247.7" font-size="23" fill="#ccccdc" text-anchor="end" font-weight="normal"  stroke="#ccccdc" stroke-width="0.35">1.36 kB</text>
<rect x="1314" y="1278.7" width="25" height="7" rx="3.5" fill="#5b984a"/>
<text x="1354" y="1290.2" font-size="23" fill="#ccccdc" text-anchor="start" font-weight="normal"  stroke="#ccccdc" stroke-width="0.35">upper_95</text>
<text x="1561" y="1290.2" font-size="23" fill="#ccccdc" text-anchor="end" font-weight="normal"  stroke="#ccccdc" stroke-width="0.35">1.81 kB</text>
<text x="1673" y="1290.2" font-size="23" fill="#ccccdc" text-anchor="end" font-weight="normal"  stroke="#ccccdc" stroke-width="0.35">1.79 kB</text>
<rect x="1314" y="1321.2" width="25" height="7" rx="3.5" fill="#9cc7ea"/>
<text x="1354" y="1332.7" font-size="23" fill="#ccccdc" text-anchor="start" font-weight="normal"  stroke="#ccccdc" stroke-width="0.35">cpu1</text>
<text x="1561" y="1332.7" font-size="23" fill="#ccccdc" text-anchor="end" font-weight="normal"  stroke="#ccccdc" stroke-width="0.35">-1.81 kB</text>
<text x="1673" y="1332.7" font-size="23" fill="#ccccdc" text-anchor="end" font-weight="normal"  stroke="#ccccdc" stroke-width="0.35">-1.79 kB</text>
<rect x="1314" y="1363.7" width="25" height="7" rx="3.5" fill="#3a8ee2"/>
<text x="1354" y="1375.2" font-size="23" fill="#ccccdc" text-anchor="start" font-weight="normal"  stroke="#ccccdc" stroke-width="0.35">cpu2</text>
<text x="1561" y="1375.2" font-size="23" fill="#ccccdc" text-anchor="end" font-weight="normal"  stroke="#ccccdc" stroke-width="0.35">-651 B</text>
<text x="1673" y="1375.2" font-size="23" fill="#ccccdc" text-anchor="end" font-weight="normal"  stroke="#ccccdc" stroke-width="0.35">-686 B</text>
<rect x="0" y="0" width="1720" height="73" fill="#181b1f"/>
<rect x="0" y="0" width="1720" height="2" fill="#2a2c31"/>
<rect x="0" y="73" width="1720" height="7" fill="url(#hsh)"/>
<line x1="12.5" y1="28" x2="45" y2="28" stroke="#d0d0dc" stroke-width="3.4" stroke-linecap="round"/>
<line x1="12.5" y1="37" x2="45" y2="37" stroke="#d0d0dc" stroke-width="3.4" stroke-linecap="round"/>
<line x1="12.5" y1="46" x2="45" y2="46" stroke="#d0d0dc" stroke-width="3.4" stroke-linecap="round"/>
<text x="79" y="46" font-size="26" fill="#ccccdc" text-anchor="start" font-weight="normal"  stroke="#ccccdc" stroke-width="0.35">Home</text>
<path d="M167 33 l6 6 l-6 6" fill="none" stroke="#8e8f98" stroke-width="2.2"/>
<text x="192" y="46" font-size="26" fill="#ccccdc" text-anchor="start" font-weight="normal"  stroke="#ccccdc" stroke-width="0.35">Dashboards</text>
<path d="M354 33 l6 6 l-6 6" fill="none" stroke="#8e8f98" stroke-width="2.2"/>
<text x="380" y="46" font-size="26" fill="#9a9ba6" text-anchor="start" font-weight="normal"  stroke="#9a9ba6" stroke-width="0.35">Grafana Play Home</text>
<g fill="none" stroke="#d0d0dc" stroke-width="2.6"><circle cx="663" cy="28.5" r="4.2"/><circle cx="663" cy="45.5" r="4.2"/><circle cx="646" cy="37" r="4.2"/><line x1="649.8" y1="35" x2="659.3" y2="30.4"/><line x1="649.8" y1="39" x2="659.3" y2="43.6"/></g>
<rect x="945" y="13.5" width="142" height="47" rx="3" fill="none" stroke="#6e9fff" stroke-width="2"/>
<g fill="#7aa6ff"><rect x="956.2" y="35" width="4.2" height="11" rx="0.6"/><rect x="962" y="31" width="4.6" height="15" rx="0.6"/><rect x="968" y="37" width="4" height="9" rx="0.6"/><rect x="974" y="28.2" width="4.2" height="17.8" rx="0.6"/></g>
<g stroke-linecap="butt"><g stroke="#0a0c14" stroke-width="7"><line x1="982.5" y1="31" x2="982.5" y2="44.5"/><line x1="976" y1="37.6" x2="989.5" y2="37.6"/></g><g stroke="#ffa62b" stroke-width="4"><line x1="982.5" y1="32" x2="982.5" y2="43.5"/><line x1="977" y1="37.6" x2="988.5" y2="37.6"/></g></g>
<text x="998" y="46" font-size="26" fill="#6e9fff" text-anchor="start" font-weight="bold" letter-spacing="-0.5">Add</text>
<path d="M1057 34 l6.5 6.5 l6.5 -6.5" fill="none" stroke="#6e9fff" stroke-width="2.6"/>
<g fill="none" stroke="#a4a5af" stroke-width="2.5" stroke-linejoin="round"><polygon points="1132.9,25.5 1136.7,25.5 1138.1,29.5 1141.9,27.7 1144.5,30.3 1142.7,34.1 1146.7,35.5 1146.7,39.3 1142.7,40.7 1144.5,44.5 1141.9,47.1 1138.1,45.3 1136.7,49.3 1132.9,49.3 1131.5,45.3 1127.7,47.1 1125.1,44.5 1126.9,40.7 1122.9,39.3 1122.9,35.5 1126.9,34.1 1125.1,30.3 1127.7,27.7 1131.5,29.5"/><circle cx="1134.8" cy="37.4" r="4.1"/></g>
<g fill="none" stroke="#9d9ea8" stroke-width="2.6"><circle cx="1213.2" cy="37.4" r="12.3"/><path d="M1212 29.5 v8.5 h-5.5"/></g>
<text x="1244" y="46" font-size="25" fill="#a0a1ab" text-anchor="start" font-weight="bold" letter-spacing="-0.1">Last 1 hour</text>
<path d="M1403.5 34 l6.3 6.3 l6.3 -6.3" fill="none" stroke="#9d9ea8" stroke-width="2.4"/>
<g fill="none" stroke="#9d9ea8" stroke-width="2.8" stroke-linecap="round"><circle cx="1468.5" cy="35.5" r="11"/><line x1="1463" y1="35.5" x2="1474" y2="35.5"/><line x1="1476.5" y1="43.5" x2="1482.5" y2="49.5"/></g>
<g fill="none" stroke="#9d9ea8" stroke-width="2.8" stroke-linecap="round"><path d="M1539.5 30 A12 12 0 0 1 1560 37.5"/><path d="M1558 44.5 A12 12 0 0 1 1537 37.5"/><path d="M1538 24.5 v6.5 h6.5"/><path d="M1560 50 v-6.5 h-6.5"/></g>
<path d="M1603.5 34.5 l6.3 6 l6.3 -6" fill="none" stroke="#9d9ea8" stroke-width="2.4"/>
<line x1="1647.5" y1="15.5" x2="1647.5" y2="58.5" stroke="#3a3c42" stroke-width="1.6"/>
<path d="M1678.5 43 l8 -8 l8 8" fill="none" stroke="#9d9ea8" stroke-width="3.2" stroke-linecap="round"/>
</svg></body></html>
